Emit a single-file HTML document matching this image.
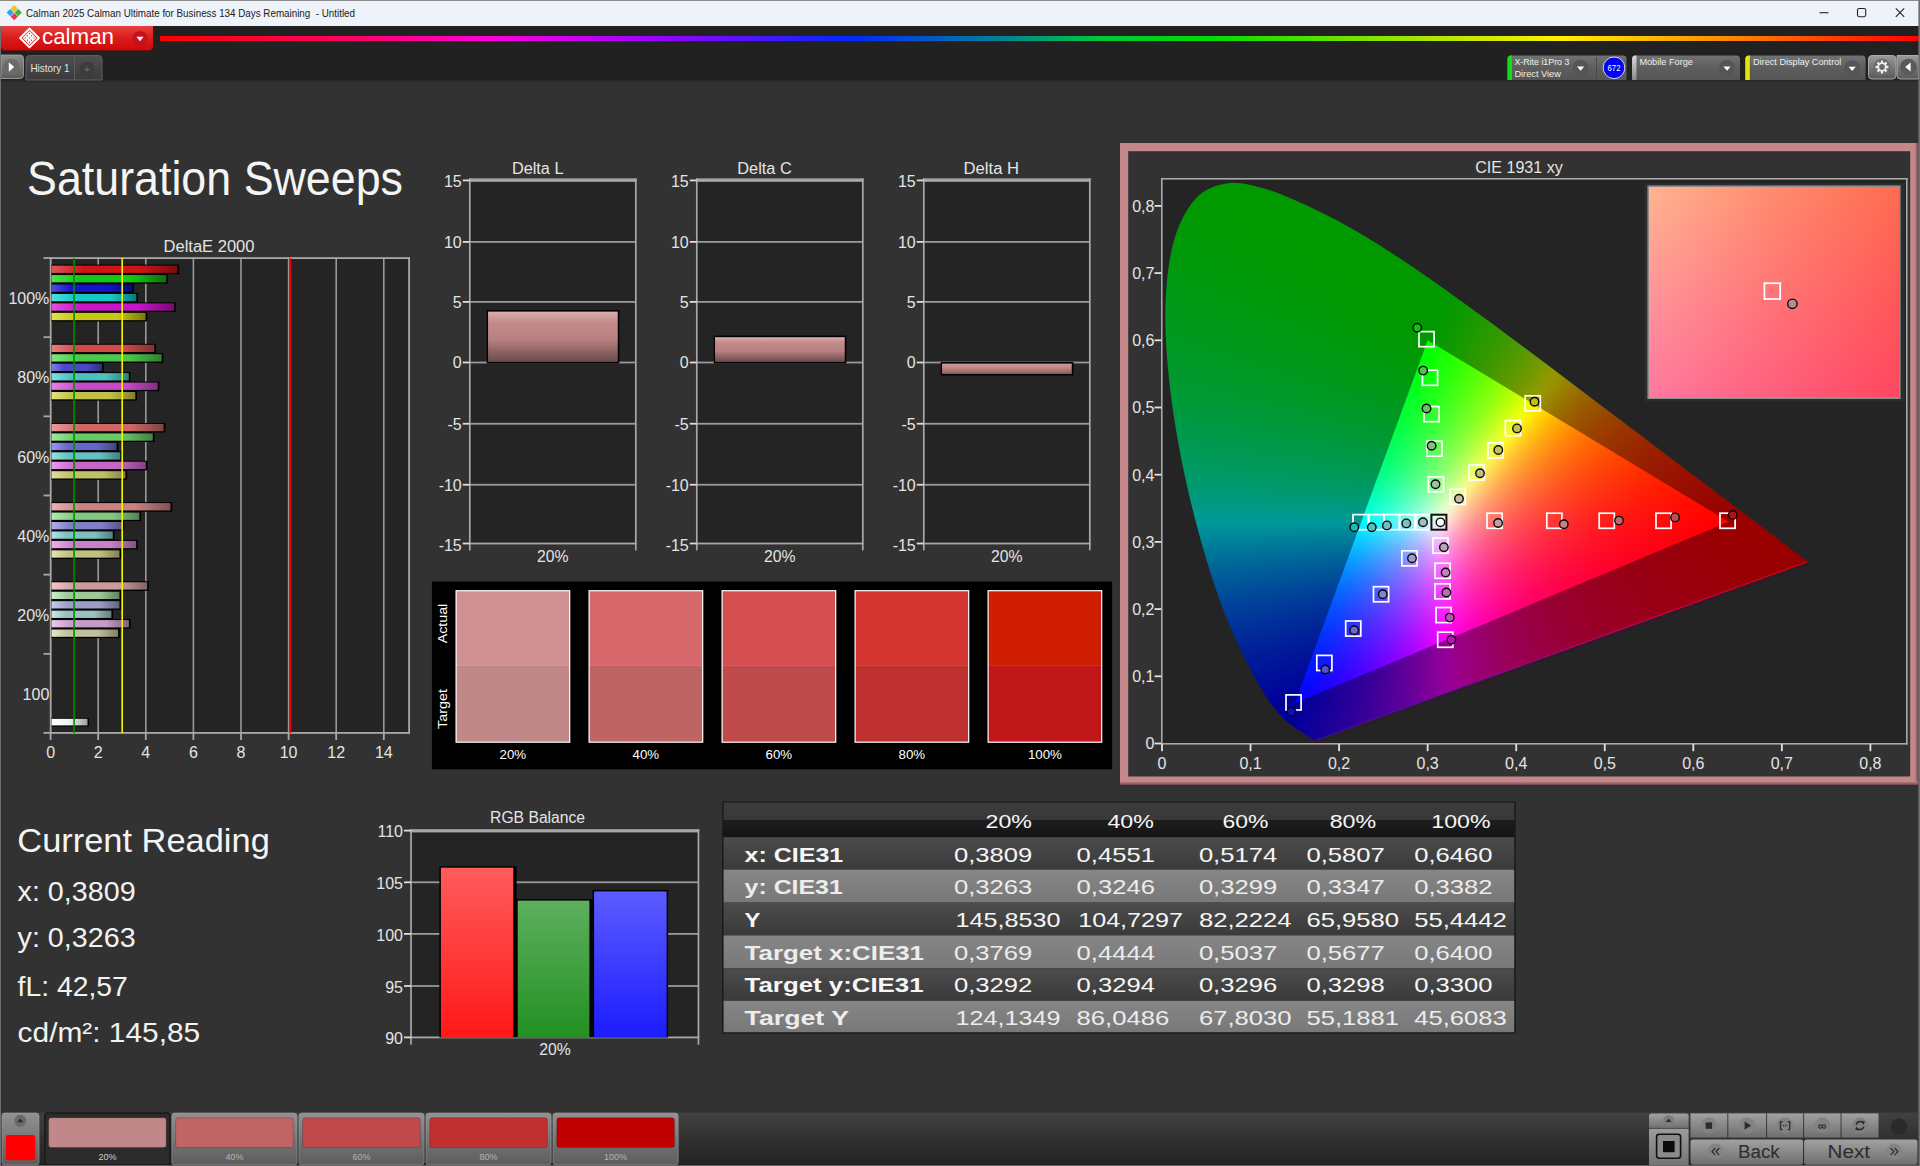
<!DOCTYPE html>
<html><head><meta charset="utf-8"><title>Calman</title>
<style>html,body{margin:0;padding:0;background:#323232;overflow:hidden}svg{display:block}text{font-family:"Liberation Sans",sans-serif}</style></head>
<body>
<svg width="1920" height="1166" viewBox="0 0 1920 1166">
<defs>
<linearGradient id="hsh" x1="0" y1="0" x2="0" y2="1"><stop offset="0" stop-color="#242424"/><stop offset="1" stop-color="#323232"/></linearGradient>
<linearGradient id="rb" x1="0" y1="0" x2="1" y2="0"><stop offset="0" stop-color="#ff0000"/><stop offset="0.108" stop-color="#ff0064"/><stop offset="0.188" stop-color="#ff00dc"/><stop offset="0.279" stop-color="#a000ff"/><stop offset="0.392" stop-color="#0028ff"/><stop offset="0.478" stop-color="#008296"/><stop offset="0.534" stop-color="#00c83c"/><stop offset="0.597" stop-color="#00dc00"/><stop offset="0.711" stop-color="#a0e600"/><stop offset="0.796" stop-color="#fff000"/><stop offset="0.881" stop-color="#ff9600"/><stop offset="1" stop-color="#ff0000"/></linearGradient>
<linearGradient id="cred" x1="0" y1="0" x2="0" y2="1"><stop offset="0" stop-color="#e84040"/><stop offset="0.45" stop-color="#dc1f1f"/><stop offset="1" stop-color="#cf0808"/></linearGradient>
<linearGradient id="pbtn" x1="0" y1="0" x2="0" y2="1"><stop offset="0" stop-color="#8c8c8c"/><stop offset="1" stop-color="#5c5c5c"/></linearGradient>
<linearGradient id="tab" x1="0" y1="0" x2="0" y2="1"><stop offset="0" stop-color="#505050"/><stop offset="1" stop-color="#3a3a3a"/></linearGradient>
<linearGradient id="pan" x1="0" y1="0" x2="0" y2="1"><stop offset="0" stop-color="#727272"/><stop offset="0.5" stop-color="#5e5e5e"/><stop offset="1" stop-color="#555555"/></linearGradient>
<linearGradient id="mstrip" x1="0" y1="0" x2="0" y2="1"><stop offset="0" stop-color="#d8d8d8"/><stop offset="1" stop-color="#8a8a8a"/></linearGradient>
<linearGradient id="gbtn" x1="0" y1="0" x2="0" y2="1"><stop offset="0" stop-color="#9a9a9a"/><stop offset="1" stop-color="#585858"/></linearGradient>
<linearGradient id="b0" x1="51.5" y1="0" x2="177.5" y2="0" gradientUnits="userSpaceOnUse"><stop offset="0" stop-color="#e05858"/><stop offset="0.25" stop-color="#d01414"/><stop offset="0.7" stop-color="#d01414"/><stop offset="1" stop-color="#7a0a0a"/></linearGradient>
<linearGradient id="b1" x1="51.5" y1="0" x2="166.3" y2="0" gradientUnits="userSpaceOnUse"><stop offset="0" stop-color="#50e050"/><stop offset="0.25" stop-color="#14c814"/><stop offset="0.7" stop-color="#14c814"/><stop offset="1" stop-color="#0a700a"/></linearGradient>
<linearGradient id="b2" x1="51.5" y1="0" x2="132.3" y2="0" gradientUnits="userSpaceOnUse"><stop offset="0" stop-color="#5050e0"/><stop offset="0.25" stop-color="#1414c8"/><stop offset="0.7" stop-color="#1414c8"/><stop offset="1" stop-color="#0a0a78"/></linearGradient>
<linearGradient id="b3" x1="51.5" y1="0" x2="136.3" y2="0" gradientUnits="userSpaceOnUse"><stop offset="0" stop-color="#50e0e0"/><stop offset="0.25" stop-color="#14c8c8"/><stop offset="0.7" stop-color="#14c8c8"/><stop offset="1" stop-color="#0a7878"/></linearGradient>
<linearGradient id="b4" x1="51.5" y1="0" x2="174" y2="0" gradientUnits="userSpaceOnUse"><stop offset="0" stop-color="#e050e0"/><stop offset="0.25" stop-color="#c814c8"/><stop offset="0.7" stop-color="#c814c8"/><stop offset="1" stop-color="#780a78"/></linearGradient>
<linearGradient id="b5" x1="51.5" y1="0" x2="145.6" y2="0" gradientUnits="userSpaceOnUse"><stop offset="0" stop-color="#e0e050"/><stop offset="0.25" stop-color="#c8c814"/><stop offset="0.7" stop-color="#c8c814"/><stop offset="1" stop-color="#78780a"/></linearGradient>
<linearGradient id="b6" x1="51.5" y1="0" x2="154.3" y2="0" gradientUnits="userSpaceOnUse"><stop offset="0" stop-color="#e88080"/><stop offset="0.25" stop-color="#d04a4a"/><stop offset="0.7" stop-color="#d04a4a"/><stop offset="1" stop-color="#803030"/></linearGradient>
<linearGradient id="b7" x1="51.5" y1="0" x2="161.6" y2="0" gradientUnits="userSpaceOnUse"><stop offset="0" stop-color="#80e880"/><stop offset="0.25" stop-color="#4ac84a"/><stop offset="0.7" stop-color="#4ac84a"/><stop offset="1" stop-color="#308030"/></linearGradient>
<linearGradient id="b8" x1="51.5" y1="0" x2="101.9" y2="0" gradientUnits="userSpaceOnUse"><stop offset="0" stop-color="#8080e8"/><stop offset="0.25" stop-color="#4a4ac8"/><stop offset="0.7" stop-color="#4a4ac8"/><stop offset="1" stop-color="#303080"/></linearGradient>
<linearGradient id="b9" x1="51.5" y1="0" x2="128.8" y2="0" gradientUnits="userSpaceOnUse"><stop offset="0" stop-color="#80e0e0"/><stop offset="0.25" stop-color="#4ac0c0"/><stop offset="0.7" stop-color="#4ac0c0"/><stop offset="1" stop-color="#308080"/></linearGradient>
<linearGradient id="b10" x1="51.5" y1="0" x2="157.7" y2="0" gradientUnits="userSpaceOnUse"><stop offset="0" stop-color="#e880e8"/><stop offset="0.25" stop-color="#c84ac8"/><stop offset="0.7" stop-color="#c84ac8"/><stop offset="1" stop-color="#803080"/></linearGradient>
<linearGradient id="b11" x1="51.5" y1="0" x2="135.3" y2="0" gradientUnits="userSpaceOnUse"><stop offset="0" stop-color="#e0e080"/><stop offset="0.25" stop-color="#c0c04a"/><stop offset="0.7" stop-color="#c0c04a"/><stop offset="1" stop-color="#808030"/></linearGradient>
<linearGradient id="b12" x1="51.5" y1="0" x2="163.6" y2="0" gradientUnits="userSpaceOnUse"><stop offset="0" stop-color="#eb9a9a"/><stop offset="0.25" stop-color="#d06666"/><stop offset="0.7" stop-color="#d06666"/><stop offset="1" stop-color="#804444"/></linearGradient>
<linearGradient id="b13" x1="51.5" y1="0" x2="152.8" y2="0" gradientUnits="userSpaceOnUse"><stop offset="0" stop-color="#9aeb9a"/><stop offset="0.25" stop-color="#66c866"/><stop offset="0.7" stop-color="#66c866"/><stop offset="1" stop-color="#448044"/></linearGradient>
<linearGradient id="b14" x1="51.5" y1="0" x2="116.6" y2="0" gradientUnits="userSpaceOnUse"><stop offset="0" stop-color="#9a9aeb"/><stop offset="0.25" stop-color="#6666c8"/><stop offset="0.7" stop-color="#6666c8"/><stop offset="1" stop-color="#444480"/></linearGradient>
<linearGradient id="b15" x1="51.5" y1="0" x2="120.3" y2="0" gradientUnits="userSpaceOnUse"><stop offset="0" stop-color="#9ae0e0"/><stop offset="0.25" stop-color="#66c0c0"/><stop offset="0.7" stop-color="#66c0c0"/><stop offset="1" stop-color="#448080"/></linearGradient>
<linearGradient id="b16" x1="51.5" y1="0" x2="145.8" y2="0" gradientUnits="userSpaceOnUse"><stop offset="0" stop-color="#eb9aeb"/><stop offset="0.25" stop-color="#c866c8"/><stop offset="0.7" stop-color="#c866c8"/><stop offset="1" stop-color="#804480"/></linearGradient>
<linearGradient id="b17" x1="51.5" y1="0" x2="125.4" y2="0" gradientUnits="userSpaceOnUse"><stop offset="0" stop-color="#e0e09a"/><stop offset="0.25" stop-color="#c0c066"/><stop offset="0.7" stop-color="#c0c066"/><stop offset="1" stop-color="#808044"/></linearGradient>
<linearGradient id="b18" x1="51.5" y1="0" x2="170.5" y2="0" gradientUnits="userSpaceOnUse"><stop offset="0" stop-color="#eeb0b0"/><stop offset="0.25" stop-color="#cc8080"/><stop offset="0.7" stop-color="#cc8080"/><stop offset="1" stop-color="#805454"/></linearGradient>
<linearGradient id="b19" x1="51.5" y1="0" x2="139.4" y2="0" gradientUnits="userSpaceOnUse"><stop offset="0" stop-color="#b0eeb0"/><stop offset="0.25" stop-color="#80c880"/><stop offset="0.7" stop-color="#80c880"/><stop offset="1" stop-color="#548054"/></linearGradient>
<linearGradient id="b20" x1="51.5" y1="0" x2="122.4" y2="0" gradientUnits="userSpaceOnUse"><stop offset="0" stop-color="#b0b0ee"/><stop offset="0.25" stop-color="#8080c8"/><stop offset="0.7" stop-color="#8080c8"/><stop offset="1" stop-color="#545480"/></linearGradient>
<linearGradient id="b21" x1="51.5" y1="0" x2="112.8" y2="0" gradientUnits="userSpaceOnUse"><stop offset="0" stop-color="#b0e4e4"/><stop offset="0.25" stop-color="#80c0c0"/><stop offset="0.7" stop-color="#80c0c0"/><stop offset="1" stop-color="#548080"/></linearGradient>
<linearGradient id="b22" x1="51.5" y1="0" x2="136.2" y2="0" gradientUnits="userSpaceOnUse"><stop offset="0" stop-color="#eeb0ee"/><stop offset="0.25" stop-color="#c880c8"/><stop offset="0.7" stop-color="#c880c8"/><stop offset="1" stop-color="#805480"/></linearGradient>
<linearGradient id="b23" x1="51.5" y1="0" x2="119.5" y2="0" gradientUnits="userSpaceOnUse"><stop offset="0" stop-color="#e4e4b0"/><stop offset="0.25" stop-color="#c0c080"/><stop offset="0.7" stop-color="#c0c080"/><stop offset="1" stop-color="#808054"/></linearGradient>
<linearGradient id="b24" x1="51.5" y1="0" x2="147.2" y2="0" gradientUnits="userSpaceOnUse"><stop offset="0" stop-color="#f0c8c8"/><stop offset="0.25" stop-color="#cc9c9c"/><stop offset="0.7" stop-color="#cc9c9c"/><stop offset="1" stop-color="#806464"/></linearGradient>
<linearGradient id="b25" x1="51.5" y1="0" x2="119.5" y2="0" gradientUnits="userSpaceOnUse"><stop offset="0" stop-color="#c8f0c8"/><stop offset="0.25" stop-color="#9cc89c"/><stop offset="0.7" stop-color="#9cc89c"/><stop offset="1" stop-color="#648064"/></linearGradient>
<linearGradient id="b26" x1="51.5" y1="0" x2="119.5" y2="0" gradientUnits="userSpaceOnUse"><stop offset="0" stop-color="#c8c8f0"/><stop offset="0.25" stop-color="#9c9cc8"/><stop offset="0.7" stop-color="#9c9cc8"/><stop offset="1" stop-color="#646480"/></linearGradient>
<linearGradient id="b27" x1="51.5" y1="0" x2="111.4" y2="0" gradientUnits="userSpaceOnUse"><stop offset="0" stop-color="#c8e8e8"/><stop offset="0.25" stop-color="#9cc0c0"/><stop offset="0.7" stop-color="#9cc0c0"/><stop offset="1" stop-color="#648080"/></linearGradient>
<linearGradient id="b28" x1="51.5" y1="0" x2="128.9" y2="0" gradientUnits="userSpaceOnUse"><stop offset="0" stop-color="#f0c8f0"/><stop offset="0.25" stop-color="#c89cc8"/><stop offset="0.7" stop-color="#c89cc8"/><stop offset="1" stop-color="#806480"/></linearGradient>
<linearGradient id="b29" x1="51.5" y1="0" x2="118.1" y2="0" gradientUnits="userSpaceOnUse"><stop offset="0" stop-color="#e8e8c8"/><stop offset="0.25" stop-color="#c0c09c"/><stop offset="0.7" stop-color="#c0c09c"/><stop offset="1" stop-color="#808064"/></linearGradient>
<linearGradient id="bw" x1="51.5" y1="0" x2="87.5" y2="0" gradientUnits="userSpaceOnUse"><stop offset="0" stop-color="#ffffff"/><stop offset="0.5" stop-color="#f0f0f0"/><stop offset="1" stop-color="#a0a0a0"/></linearGradient>
<linearGradient id="pinkbar" x1="0" y1="0" x2="0" y2="1"><stop offset="0" stop-color="#dcaeae"/><stop offset="0.22" stop-color="#c48a8a"/><stop offset="0.55" stop-color="#b88181"/><stop offset="1" stop-color="#6a4a4c"/></linearGradient>
<linearGradient id="pinkbar2" x1="0" y1="0" x2="0" y2="1"><stop offset="0" stop-color="#d09a9a"/><stop offset="0.35" stop-color="#c48a8a"/><stop offset="1" stop-color="#8a6062"/></linearGradient>
<linearGradient id="frR" x1="0" y1="0" x2="1" y2="0"><stop offset="0" stop-color="#c4888a"/><stop offset="1" stop-color="#6e4648"/></linearGradient>
<linearGradient id="frB" x1="0" y1="0" x2="0" y2="1"><stop offset="0" stop-color="#c4888a"/><stop offset="1" stop-color="#6e4648"/></linearGradient>
<clipPath id="hs"><path d="M1315.5 740.3C1315.4 740.3 1315.3 740.3 1315.2 740.3C1315.1 740.3 1315.0 740.3 1314.8 740.3C1314.7 740.3 1314.6 740.3 1314.4 740.3C1314.2 740.2 1314.0 740.2 1313.8 740.1C1313.5 740.0 1313.2 739.8 1312.8 739.6C1312.4 739.4 1312.1 739.2 1311.6 738.9C1311.1 738.5 1310.5 738.2 1309.8 737.7C1309.1 737.3 1308.4 736.8 1307.6 736.2C1306.7 735.6 1305.8 735.0 1304.7 734.2C1303.5 733.5 1302.2 732.6 1300.7 731.6C1299.2 730.6 1297.6 729.6 1295.7 728.2C1293.9 726.9 1291.8 725.5 1289.5 723.5C1287.2 721.6 1284.9 719.8 1282.0 716.7C1279.0 713.5 1275.7 709.9 1271.9 704.7C1268.1 699.4 1263.9 693.6 1259.1 685.2C1254.2 676.8 1248.9 667.1 1242.8 654.3C1236.8 641.6 1229.6 626.8 1222.8 608.6C1216.1 590.5 1208.9 569.0 1202.2 545.3C1195.5 521.5 1188.3 493.4 1182.8 466.2C1177.3 438.9 1172.2 408.8 1169.3 381.7C1166.4 354.6 1164.6 327.2 1165.5 303.5C1166.3 279.8 1169.1 257.0 1174.3 239.4C1179.5 221.8 1187.5 207.2 1196.4 197.8C1205.4 188.5 1216.7 184.8 1227.8 183.2C1238.9 181.6 1251.3 185.2 1263.1 188.3C1275.0 191.4 1287.4 196.9 1299.0 201.9C1310.6 206.9 1321.8 212.5 1332.8 218.3C1343.9 224.0 1354.6 230.2 1365.3 236.6C1376.1 243.0 1386.7 249.8 1397.4 256.8C1408.0 263.7 1418.5 270.9 1429.1 278.3C1439.6 285.6 1450.1 293.1 1460.7 300.7C1471.2 308.3 1481.8 316.1 1492.4 323.8C1502.9 331.6 1513.4 339.5 1523.9 347.3C1534.4 355.1 1544.9 363.0 1555.3 370.7C1565.6 378.5 1575.9 386.3 1586.0 393.9C1596.1 401.6 1606.1 409.1 1615.8 416.5C1625.6 423.9 1635.2 431.2 1644.4 438.1C1653.7 445.1 1662.8 452.0 1671.3 458.4C1679.9 464.9 1688.2 471.3 1695.9 477.1C1703.5 482.8 1710.5 488.1 1717.2 493.2C1723.9 498.2 1730.3 503.0 1736.0 507.4C1741.7 511.7 1746.9 515.5 1751.6 519.1C1756.3 522.6 1760.4 525.8 1764.2 528.7C1768.0 531.5 1771.3 534.0 1774.3 536.3C1777.3 538.6 1780.0 540.5 1782.4 542.4C1784.8 544.2 1786.9 545.8 1788.8 547.3C1790.8 548.8 1792.6 550.1 1794.2 551.4C1795.9 552.6 1797.3 553.7 1798.7 554.7C1800.0 555.7 1801.2 556.6 1802.2 557.4C1803.2 558.1 1804.1 558.8 1804.9 559.4C1805.7 560.0 1806.3 560.5 1806.9 560.9C1807.5 561.4 1808.2 561.9 1808.4 562.1Z"/></clipPath>
<clipPath id="tr"><path d="M1728.7 521.7L1427.7 340.3L1294.8 703.2Z"/></clipPath>
<filter id="bl" x="-5%" y="-5%" width="110%" height="110%" color-interpolation-filters="sRGB"><feGaussianBlur stdDeviation="4.5"/></filter>
<style>.c{width:9.6px;height:9.6px}</style>
<linearGradient id="ple" x1="1315.46" y1="0" x2="1808.41" y2="0" gradientUnits="userSpaceOnUse"><stop offset="0" stop-color="#2a10d0"/><stop offset="0.35" stop-color="#9000c0"/><stop offset="0.7" stop-color="#e00060"/><stop offset="1" stop-color="#f00018"/></linearGradient>
<linearGradient id="in1" x1="0" y1="0" x2="1" y2="0"><stop offset="0" stop-color="#ffb592"/><stop offset="0.5" stop-color="#ff8c6e"/><stop offset="1" stop-color="#ff6c50"/></linearGradient>
<linearGradient id="in2" x1="0" y1="0" x2="1" y2="0"><stop offset="0" stop-color="#ff78a0"/><stop offset="0.5" stop-color="#ff5e7e"/><stop offset="1" stop-color="#ff4660"/></linearGradient>
<linearGradient id="inm" x1="0" y1="0" x2="0" y2="1"><stop offset="0" stop-color="#fff" stop-opacity="0"/><stop offset="1" stop-color="#fff" stop-opacity="1"/></linearGradient>
<mask id="inmask"><rect x="1649" y="187" width="250.2" height="210.4" fill="url(#inm)"/></mask>
<linearGradient id="rbR" x1="0" y1="0" x2="0" y2="1"><stop offset="0" stop-color="#ff5c5c"/><stop offset="1" stop-color="#ff1818"/></linearGradient>
<linearGradient id="rbG" x1="0" y1="0" x2="0" y2="1"><stop offset="0" stop-color="#5eb05e"/><stop offset="1" stop-color="#229022"/></linearGradient>
<linearGradient id="rbB" x1="0" y1="0" x2="0" y2="1"><stop offset="0" stop-color="#5c5cff"/><stop offset="1" stop-color="#1c1cff"/></linearGradient>
<linearGradient id="thd" x1="0" y1="0" x2="0" y2="1"><stop offset="0" stop-color="#3c3c3c"/><stop offset="0.5" stop-color="#383838"/><stop offset="0.5" stop-color="#1e1e1e"/><stop offset="1" stop-color="#141414"/></linearGradient>
<linearGradient id="trd" x1="0" y1="0" x2="0" y2="1"><stop offset="0" stop-color="#4c4c4c"/><stop offset="1" stop-color="#3a3a3a"/></linearGradient>
<linearGradient id="trl" x1="0" y1="0" x2="0" y2="1"><stop offset="0" stop-color="#868686"/><stop offset="1" stop-color="#787878"/></linearGradient>
<linearGradient id="barbg" x1="0" y1="0" x2="0" y2="1"><stop offset="0" stop-color="#414141"/><stop offset="0.5" stop-color="#303030"/><stop offset="1" stop-color="#232323"/></linearGradient>
<linearGradient id="bbtn" x1="0" y1="0" x2="0" y2="1"><stop offset="0" stop-color="#929292"/><stop offset="0.5" stop-color="#767676"/><stop offset="1" stop-color="#5c5c5c"/></linearGradient>
<linearGradient id="cbtn" x1="0" y1="0" x2="0" y2="1"><stop offset="0" stop-color="#a2a2a2"/><stop offset="1" stop-color="#6e6e6e"/></linearGradient>
<linearGradient id="cbtn2" x1="0" y1="0" x2="0" y2="1"><stop offset="0" stop-color="#9c9c9c"/><stop offset="1" stop-color="#747474"/></linearGradient>
</defs>
<rect x="0" y="0" width="1920" height="1166" fill="#323232" />
<rect x="0" y="0" width="1920" height="26" fill="#eef3f9" />
<rect x="0" y="0" width="1920" height="1" fill="#8a8a8a" />
<path d="M14.2 5L17.8 8.6L14.2 12.2L10.6 8.6Z" fill="#f3c321"/>
<path d="M10.2 9L13.8 12.6L10.2 16.2L6.6 12.6Z" fill="#2aa7e8"/>
<path d="M18.2 9L21.8 12.6L18.2 16.2L14.6 12.6Z" fill="#35b935"/>
<path d="M14.2 13L17.8 16.6L14.2 20.2L10.6 16.6Z" fill="#e8315e"/>
<text x="26" y="17" font-size="11.5" fill="#1a1a1a" textLength="329" lengthAdjust="spacingAndGlyphs" style="white-space:pre">Calman 2025 Calman Ultimate for Business 134 Days Remaining  - Untitled</text>
<line x1="1819.5" y1="12.7" x2="1828.5" y2="12.7" stroke="#222" stroke-width="1.1" />
<rect x="1857.5" y="8.5" width="8.2" height="8.2" rx="1.6" fill="none" stroke="#222" stroke-width="1.1"/>
<path d="M1895.8 8.4L1904.2 16.8M1904.2 8.4L1895.8 16.8" stroke="#222" stroke-width="1.1" fill="none"/>
<rect x="0" y="26" width="1920" height="54" fill="#212121" />
<rect x="0" y="80" width="1920" height="3" fill="url(#hsh)" />
<rect x="160" y="36" width="1759" height="5" fill="url(#rb)" />
<path d="M1 26H153V46Q153 50 149 50H5Q1 50 1 46Z" fill="url(#cred)"/>
<line x1="2" y1="50.5" x2="151" y2="50.5" stroke="#701010" stroke-width="1" />
<path d="M29.5 28.6L38.9 38L29.5 47.4L20.1 38Z" fill="none" stroke="#fff" stroke-width="2" stroke-linejoin="round"/>
<path d="M29.5 31.1L36.4 38L29.5 44.9L22.6 38Z" fill="#fff"/>
<path d="M29.5 32.85L30.35 33.7L29.5 34.55L28.65 33.7ZM27.35 35L28.2 35.85L27.35 36.7L26.5 35.85ZM25.2 37.15L26.05 38L25.2 38.85L24.35 38ZM31.65 35L32.5 35.85L31.65 36.7L30.8 35.85ZM29.5 37.15L30.35 38L29.5 38.85L28.65 38ZM27.35 39.3L28.2 40.15L27.35 41L26.5 40.15ZM33.8 37.15L34.65 38L33.8 38.85L32.95 38ZM31.65 39.3L32.5 40.15L31.65 41L30.8 40.15ZM29.5 41.45L30.35 42.3L29.5 43.15L28.65 42.3Z" fill="#dc2020"/>
<text x="42" y="43.8" font-size="22" fill="#ffffff" textLength="72" lengthAdjust="spacingAndGlyphs" >calman</text>
<circle cx="140" cy="38.5" r="7.5" fill="#c80f1c"/>
<path d="M136.4 36.8H143.6L140 41.2Z" fill="#fff"/>
<path d="M1 55H20Q23.5 55 23.5 58.5V75Q23.5 78.5 20 78.5H1Z" fill="url(#pbtn)" stroke="#a8a8a8" stroke-width="0.8"/>
<circle cx="11.5" cy="67" r="8" fill="#6a6a6a"/>
<path d="M8.8 62.3L14.2 67L8.8 71.7Z" fill="#fff"/>
<path d="M26 80V59Q26 55.5 29.5 55.5H98.5Q102 55.5 102 59V80Z" fill="url(#tab)" stroke="#5e5e5e" stroke-width="1"/>
<line x1="74.5" y1="56" x2="74.5" y2="80" stroke="#5e5e5e" stroke-width="1" />
<text x="30.4" y="72" font-size="10.5" fill="#e4e4e4" textLength="39" lengthAdjust="spacingAndGlyphs" >History 1</text>
<circle cx="87" cy="69" r="7.5" fill="#3c3c3c"/>
<text x="87" y="72.6" font-size="10" fill="#6e6e6e" text-anchor="middle" >+</text>
<path d="M1507.5 80V59Q1507.5 55.5 1511.0 55.5H1623.0Q1626.5 55.5 1626.5 59V80Z" fill="url(#pan)"/>
<path d="M1507.5 80V59Q1507.5 55.5 1511.0 55.5H1512.0V80Z" fill="#10e010"/>
<text x="1514.4" y="65" font-size="9.5" fill="#f0f0f0" textLength="55" lengthAdjust="spacingAndGlyphs" >X-Rite i1Pro 3</text>
<text x="1514.4" y="76.5" font-size="9.5" fill="#f0f0f0" textLength="46.5" lengthAdjust="spacingAndGlyphs" >Direct View</text>
<circle cx="1580.6" cy="68" r="8" fill="#555555"/>
<path d="M1577.0 66.4H1584.1999999999998L1580.6 70.8Z" fill="#fff"/>
<line x1="1596.5" y1="57" x2="1596.5" y2="80" stroke="#4a4a4a" stroke-width="1" />
<circle cx="1614" cy="67.8" r="10.8" fill="#0000f8" stroke="#e8e8ff" stroke-width="0.9"/>
<text x="1614" y="70.8" font-size="8.5" fill="#fff" text-anchor="middle" textLength="13" lengthAdjust="spacingAndGlyphs" >672</text>
<path d="M1632 80V59Q1632 55.5 1635.5 55.5H1736.5Q1740 55.5 1740 59V80Z" fill="url(#pan)"/>
<path d="M1632 80V59Q1632 55.5 1635.5 55.5H1636.5V80Z" fill="url(#mstrip)"/>
<text x="1639.4" y="65" font-size="9.5" fill="#f0f0f0" textLength="53.5" lengthAdjust="spacingAndGlyphs" >Mobile Forge</text>
<circle cx="1727" cy="68" r="8" fill="#555555"/>
<path d="M1723.4 66.4H1730.6L1727 70.8Z" fill="#fff"/>
<path d="M1745.3 80V59Q1745.3 55.5 1748.8 55.5H1862.1Q1865.6 55.5 1865.6 59V80Z" fill="url(#pan)"/>
<path d="M1745.3 80V59Q1745.3 55.5 1748.8 55.5H1749.8V80Z" fill="#e6e600"/>
<text x="1753" y="65.3" font-size="9.5" fill="#f0f0f0" textLength="88.3" lengthAdjust="spacingAndGlyphs" >Direct Display Control</text>
<circle cx="1852.2" cy="68.3" r="8" fill="#555555"/>
<path d="M1848.6000000000001 66.7H1855.8L1852.2 71.1Z" fill="#fff"/>
<rect x="1868.5" y="55.5" width="27.5" height="23.5" rx="3.5" fill="url(#gbtn)" stroke="#b4b4b4" stroke-width="0.9"/>
<path d="M1897 55.5H1918.5V79H1900.5Q1897 79 1897 75.5Z" fill="url(#gbtn)" stroke="#b4b4b4" stroke-width="0.9"/>
<circle cx="1882" cy="67" r="8.6" fill="#6c6c6c"/><rect x="1880.85" y="60.6" width="2.3" height="12.8" rx="0.5" transform="rotate(0 1882 67)" fill="#f0f0f0"/><rect x="1880.85" y="60.6" width="2.3" height="12.8" rx="0.5" transform="rotate(45 1882 67)" fill="#f0f0f0"/><rect x="1880.85" y="60.6" width="2.3" height="12.8" rx="0.5" transform="rotate(90 1882 67)" fill="#f0f0f0"/><rect x="1880.85" y="60.6" width="2.3" height="12.8" rx="0.5" transform="rotate(135 1882 67)" fill="#f0f0f0"/><circle cx="1882" cy="67" r="4.5" fill="#f0f0f0"/><circle cx="1882" cy="67" r="2.9" fill="#6c6c6c"/>
<circle cx="1908.5" cy="67" r="8.3" fill="#5a5a5a"/>
<path d="M1910.6 62.6V71.4L1905.2 67Z" fill="#fff"/>
<rect x="0" y="26" width="1" height="1140" fill="#6e6e6e" />
<rect x="1918.6" y="0" width="1.4" height="1166" fill="#6e6e6e" />
<rect x="0" y="1165" width="1920" height="1" fill="#6e6e6e" />
<text x="27" y="194.5" font-size="49" fill="#f4f4f4" textLength="376" lengthAdjust="spacingAndGlyphs" >Saturation Sweeps</text>
<text x="209" y="252.3" font-size="16" fill="#e4e4e4" text-anchor="middle" textLength="91" lengthAdjust="spacingAndGlyphs" >DeltaE 2000</text>
<rect x="51" y="258" width="358" height="475" fill="#242424" />
<line x1="98.2" y1="258" x2="98.2" y2="733" stroke="#9a9a9a" stroke-width="1.6" />
<line x1="145.8" y1="258" x2="145.8" y2="733" stroke="#9a9a9a" stroke-width="1.6" />
<line x1="193.4" y1="258" x2="193.4" y2="733" stroke="#9a9a9a" stroke-width="1.6" />
<line x1="241" y1="258" x2="241" y2="733" stroke="#9a9a9a" stroke-width="1.6" />
<line x1="288.6" y1="258" x2="288.6" y2="733" stroke="#9a9a9a" stroke-width="1.6" />
<line x1="336.2" y1="258" x2="336.2" y2="733" stroke="#9a9a9a" stroke-width="1.6" />
<line x1="383.8" y1="258" x2="383.8" y2="733" stroke="#9a9a9a" stroke-width="1.6" />
<rect x="49.8" y="257.2" width="360.2" height="1.8" fill="#a8a8a8" />
<rect x="49.8" y="257.2" width="1.8" height="476.6" fill="#a8a8a8" />
<rect x="408.2" y="257.2" width="1.8" height="476.6" fill="#a8a8a8" />
<rect x="43.5" y="732" width="366.5" height="1.8" fill="#a8a8a8" />
<rect x="43.5" y="257.1" width="7" height="1.8" fill="#a8a8a8" />
<rect x="43.5" y="336.27" width="7" height="1.8" fill="#a8a8a8" />
<rect x="43.5" y="415.44" width="7" height="1.8" fill="#a8a8a8" />
<rect x="43.5" y="494.61" width="7" height="1.8" fill="#a8a8a8" />
<rect x="43.5" y="573.78" width="7" height="1.8" fill="#a8a8a8" />
<rect x="43.5" y="652.95" width="7" height="1.8" fill="#a8a8a8" />
<rect x="49.7" y="733" width="1.8" height="7" fill="#a8a8a8" />
<text x="50.6" y="757.5" font-size="16" fill="#e4e4e4" text-anchor="middle" >0</text>
<rect x="97.3" y="733" width="1.8" height="7" fill="#a8a8a8" />
<text x="98.2" y="757.5" font-size="16" fill="#e4e4e4" text-anchor="middle" >2</text>
<rect x="144.9" y="733" width="1.8" height="7" fill="#a8a8a8" />
<text x="145.8" y="757.5" font-size="16" fill="#e4e4e4" text-anchor="middle" >4</text>
<rect x="192.5" y="733" width="1.8" height="7" fill="#a8a8a8" />
<text x="193.4" y="757.5" font-size="16" fill="#e4e4e4" text-anchor="middle" >6</text>
<rect x="240.1" y="733" width="1.8" height="7" fill="#a8a8a8" />
<text x="241" y="757.5" font-size="16" fill="#e4e4e4" text-anchor="middle" >8</text>
<rect x="287.7" y="733" width="1.8" height="7" fill="#a8a8a8" />
<text x="288.6" y="757.5" font-size="16" fill="#e4e4e4" text-anchor="middle" >10</text>
<rect x="335.3" y="733" width="1.8" height="7" fill="#a8a8a8" />
<text x="336.2" y="757.5" font-size="16" fill="#e4e4e4" text-anchor="middle" >12</text>
<rect x="382.9" y="733" width="1.8" height="7" fill="#a8a8a8" />
<text x="383.8" y="757.5" font-size="16" fill="#e4e4e4" text-anchor="middle" >14</text>
<text x="49.3" y="304.185" font-size="16" fill="#e4e4e4" text-anchor="end" >100%</text>
<text x="49.3" y="383.355" font-size="16" fill="#e4e4e4" text-anchor="end" >80%</text>
<text x="49.3" y="462.525" font-size="16" fill="#e4e4e4" text-anchor="end" >60%</text>
<text x="49.3" y="541.695" font-size="16" fill="#e4e4e4" text-anchor="end" >40%</text>
<text x="49.3" y="620.865" font-size="16" fill="#e4e4e4" text-anchor="end" >20%</text>
<text x="49.3" y="700.035" font-size="16" fill="#e4e4e4" text-anchor="end" >100</text>
<rect x="51.5" y="264.6" width="127.7" height="9.6" fill="#000" />
<rect x="51.5" y="265.6" width="126" height="7.3" fill="url(#b0)" />
<rect x="51.5" y="274.05" width="116.5" height="9.6" fill="#000" />
<rect x="51.5" y="275.05" width="114.8" height="7.3" fill="url(#b1)" />
<rect x="51.5" y="283.5" width="82.5" height="9.6" fill="#000" />
<rect x="51.5" y="284.5" width="80.8" height="7.3" fill="url(#b2)" />
<rect x="51.5" y="292.95" width="86.5" height="9.6" fill="#000" />
<rect x="51.5" y="293.95" width="84.8" height="7.3" fill="url(#b3)" />
<rect x="51.5" y="302.4" width="124.2" height="9.6" fill="#000" />
<rect x="51.5" y="303.4" width="122.5" height="7.3" fill="url(#b4)" />
<rect x="51.5" y="311.85" width="95.8" height="9.6" fill="#000" />
<rect x="51.5" y="312.85" width="94.1" height="7.3" fill="url(#b5)" />
<rect x="51.5" y="343.77" width="104.5" height="9.6" fill="#000" />
<rect x="51.5" y="344.77" width="102.8" height="7.3" fill="url(#b6)" />
<rect x="51.5" y="353.22" width="111.8" height="9.6" fill="#000" />
<rect x="51.5" y="354.22" width="110.1" height="7.3" fill="url(#b7)" />
<rect x="51.5" y="362.67" width="52.1" height="9.6" fill="#000" />
<rect x="51.5" y="363.67" width="50.4" height="7.3" fill="url(#b8)" />
<rect x="51.5" y="372.12" width="79" height="9.6" fill="#000" />
<rect x="51.5" y="373.12" width="77.3" height="7.3" fill="url(#b9)" />
<rect x="51.5" y="381.57" width="107.9" height="9.6" fill="#000" />
<rect x="51.5" y="382.57" width="106.2" height="7.3" fill="url(#b10)" />
<rect x="51.5" y="391.02" width="85.5" height="9.6" fill="#000" />
<rect x="51.5" y="392.02" width="83.8" height="7.3" fill="url(#b11)" />
<rect x="51.5" y="422.94" width="113.8" height="9.6" fill="#000" />
<rect x="51.5" y="423.94" width="112.1" height="7.3" fill="url(#b12)" />
<rect x="51.5" y="432.39" width="103" height="9.6" fill="#000" />
<rect x="51.5" y="433.39" width="101.3" height="7.3" fill="url(#b13)" />
<rect x="51.5" y="441.84" width="66.8" height="9.6" fill="#000" />
<rect x="51.5" y="442.84" width="65.1" height="7.3" fill="url(#b14)" />
<rect x="51.5" y="451.29" width="70.5" height="9.6" fill="#000" />
<rect x="51.5" y="452.29" width="68.8" height="7.3" fill="url(#b15)" />
<rect x="51.5" y="460.74" width="96" height="9.6" fill="#000" />
<rect x="51.5" y="461.74" width="94.3" height="7.3" fill="url(#b16)" />
<rect x="51.5" y="470.19" width="75.6" height="9.6" fill="#000" />
<rect x="51.5" y="471.19" width="73.9" height="7.3" fill="url(#b17)" />
<rect x="51.5" y="502.11" width="120.7" height="9.6" fill="#000" />
<rect x="51.5" y="503.11" width="119" height="7.3" fill="url(#b18)" />
<rect x="51.5" y="511.56" width="89.6" height="9.6" fill="#000" />
<rect x="51.5" y="512.56" width="87.9" height="7.3" fill="url(#b19)" />
<rect x="51.5" y="521.01" width="72.6" height="9.6" fill="#000" />
<rect x="51.5" y="522.01" width="70.9" height="7.3" fill="url(#b20)" />
<rect x="51.5" y="530.46" width="63" height="9.6" fill="#000" />
<rect x="51.5" y="531.46" width="61.3" height="7.3" fill="url(#b21)" />
<rect x="51.5" y="539.91" width="86.4" height="9.6" fill="#000" />
<rect x="51.5" y="540.91" width="84.7" height="7.3" fill="url(#b22)" />
<rect x="51.5" y="549.36" width="69.7" height="9.6" fill="#000" />
<rect x="51.5" y="550.36" width="68" height="7.3" fill="url(#b23)" />
<rect x="51.5" y="581.28" width="97.4" height="9.6" fill="#000" />
<rect x="51.5" y="582.28" width="95.7" height="7.3" fill="url(#b24)" />
<rect x="51.5" y="590.73" width="69.7" height="9.6" fill="#000" />
<rect x="51.5" y="591.73" width="68" height="7.3" fill="url(#b25)" />
<rect x="51.5" y="600.18" width="69.7" height="9.6" fill="#000" />
<rect x="51.5" y="601.18" width="68" height="7.3" fill="url(#b26)" />
<rect x="51.5" y="609.63" width="61.6" height="9.6" fill="#000" />
<rect x="51.5" y="610.63" width="59.9" height="7.3" fill="url(#b27)" />
<rect x="51.5" y="619.08" width="79.1" height="9.6" fill="#000" />
<rect x="51.5" y="620.08" width="77.4" height="7.3" fill="url(#b28)" />
<rect x="51.5" y="628.53" width="68.3" height="9.6" fill="#000" />
<rect x="51.5" y="629.53" width="66.6" height="7.3" fill="url(#b29)" />
<rect x="51.5" y="717.9" width="37.4" height="8.6" fill="#000" />
<rect x="51.5" y="718.8" width="36" height="6.6" fill="url(#bw)" />
<rect x="73.3" y="258" width="1.6" height="475" fill="#008c00" />
<rect x="121.4" y="258" width="1.6" height="475" fill="#f4f400" />
<rect x="289.5" y="258" width="1.7" height="475" fill="#f00000" />
<rect x="469.75" y="179" width="166" height="365" fill="#242424" />
<rect x="469.75" y="241" width="166" height="1.8" fill="#9a9a9a" />
<rect x="469.75" y="301" width="166" height="1.8" fill="#9a9a9a" />
<rect x="469.75" y="361.6" width="166" height="1.8" fill="#9a9a9a" />
<rect x="469.75" y="422.85" width="166" height="1.8" fill="#9a9a9a" />
<rect x="469.75" y="483.85" width="166" height="1.8" fill="#9a9a9a" />
<rect x="468.95" y="178.4" width="167.6" height="3.4" fill="#a8a8a8" />
<rect x="468.95" y="178.4" width="1.7" height="372" fill="#a8a8a8" />
<rect x="634.95" y="178.4" width="1.7" height="372" fill="#a8a8a8" />
<rect x="468.95" y="542.6" width="167.6" height="1.8" fill="#a8a8a8" />
<rect x="462.75" y="179.5" width="7" height="1.8" fill="#dcdcdc" />
<text x="461.75" y="187.25" font-size="16" fill="#e4e4e4" text-anchor="end" >15</text>
<rect x="462.75" y="241" width="7" height="1.8" fill="#dcdcdc" />
<text x="461.75" y="247.75" font-size="16" fill="#e4e4e4" text-anchor="end" >10</text>
<rect x="462.75" y="301" width="7" height="1.8" fill="#dcdcdc" />
<text x="461.75" y="307.9" font-size="16" fill="#e4e4e4" text-anchor="end" >5</text>
<rect x="462.75" y="361.6" width="7" height="1.8" fill="#dcdcdc" />
<text x="461.75" y="368.4" font-size="16" fill="#e4e4e4" text-anchor="end" >0</text>
<rect x="462.75" y="422.85" width="7" height="1.8" fill="#dcdcdc" />
<text x="461.75" y="429.6" font-size="16" fill="#e4e4e4" text-anchor="end" >-5</text>
<rect x="462.75" y="483.85" width="7" height="1.8" fill="#dcdcdc" />
<text x="461.75" y="490.6" font-size="16" fill="#e4e4e4" text-anchor="end" >-10</text>
<rect x="462.75" y="542.6" width="7" height="1.8" fill="#dcdcdc" />
<text x="461.75" y="551.25" font-size="16" fill="#e4e4e4" text-anchor="end" >-15</text>
<text x="537.7" y="173.5" font-size="16" fill="#e4e4e4" text-anchor="middle" textLength="51.6" lengthAdjust="spacingAndGlyphs" >Delta L</text>
<text x="552.75" y="561.5" font-size="16" fill="#e4e4e4" text-anchor="middle" textLength="31.5" lengthAdjust="spacingAndGlyphs" >20%</text>
<rect x="486.75" y="310" width="132.6" height="53.5" fill="#000" />
<rect x="488.05" y="311.6" width="129.7" height="50.3" fill="url(#pinkbar)" />
<rect x="696.75" y="179" width="166" height="365" fill="#242424" />
<rect x="696.75" y="241" width="166" height="1.8" fill="#9a9a9a" />
<rect x="696.75" y="301" width="166" height="1.8" fill="#9a9a9a" />
<rect x="696.75" y="361.6" width="166" height="1.8" fill="#9a9a9a" />
<rect x="696.75" y="422.85" width="166" height="1.8" fill="#9a9a9a" />
<rect x="696.75" y="483.85" width="166" height="1.8" fill="#9a9a9a" />
<rect x="695.95" y="178.4" width="167.6" height="3.4" fill="#a8a8a8" />
<rect x="695.95" y="178.4" width="1.7" height="372" fill="#a8a8a8" />
<rect x="861.95" y="178.4" width="1.7" height="372" fill="#a8a8a8" />
<rect x="695.95" y="542.6" width="167.6" height="1.8" fill="#a8a8a8" />
<rect x="689.75" y="179.5" width="7" height="1.8" fill="#dcdcdc" />
<text x="688.75" y="187.25" font-size="16" fill="#e4e4e4" text-anchor="end" >15</text>
<rect x="689.75" y="241" width="7" height="1.8" fill="#dcdcdc" />
<text x="688.75" y="247.75" font-size="16" fill="#e4e4e4" text-anchor="end" >10</text>
<rect x="689.75" y="301" width="7" height="1.8" fill="#dcdcdc" />
<text x="688.75" y="307.9" font-size="16" fill="#e4e4e4" text-anchor="end" >5</text>
<rect x="689.75" y="361.6" width="7" height="1.8" fill="#dcdcdc" />
<text x="688.75" y="368.4" font-size="16" fill="#e4e4e4" text-anchor="end" >0</text>
<rect x="689.75" y="422.85" width="7" height="1.8" fill="#dcdcdc" />
<text x="688.75" y="429.6" font-size="16" fill="#e4e4e4" text-anchor="end" >-5</text>
<rect x="689.75" y="483.85" width="7" height="1.8" fill="#dcdcdc" />
<text x="688.75" y="490.6" font-size="16" fill="#e4e4e4" text-anchor="end" >-10</text>
<rect x="689.75" y="542.6" width="7" height="1.8" fill="#dcdcdc" />
<text x="688.75" y="551.25" font-size="16" fill="#e4e4e4" text-anchor="end" >-15</text>
<text x="764.5" y="173.5" font-size="16" fill="#e4e4e4" text-anchor="middle" textLength="54.5" lengthAdjust="spacingAndGlyphs" >Delta C</text>
<text x="779.75" y="561.5" font-size="16" fill="#e4e4e4" text-anchor="middle" textLength="31.5" lengthAdjust="spacingAndGlyphs" >20%</text>
<rect x="713.75" y="335.6" width="132.6" height="27.9" fill="#000" />
<rect x="715.05" y="337.2" width="129.7" height="24.7" fill="url(#pinkbar)" />
<rect x="923.75" y="179" width="166" height="365" fill="#242424" />
<rect x="923.75" y="241" width="166" height="1.8" fill="#9a9a9a" />
<rect x="923.75" y="301" width="166" height="1.8" fill="#9a9a9a" />
<rect x="923.75" y="361.6" width="166" height="1.8" fill="#9a9a9a" />
<rect x="923.75" y="422.85" width="166" height="1.8" fill="#9a9a9a" />
<rect x="923.75" y="483.85" width="166" height="1.8" fill="#9a9a9a" />
<rect x="922.95" y="178.4" width="167.6" height="3.4" fill="#a8a8a8" />
<rect x="922.95" y="178.4" width="1.7" height="372" fill="#a8a8a8" />
<rect x="1088.95" y="178.4" width="1.7" height="372" fill="#a8a8a8" />
<rect x="922.95" y="542.6" width="167.6" height="1.8" fill="#a8a8a8" />
<rect x="916.75" y="179.5" width="7" height="1.8" fill="#dcdcdc" />
<text x="915.75" y="187.25" font-size="16" fill="#e4e4e4" text-anchor="end" >15</text>
<rect x="916.75" y="241" width="7" height="1.8" fill="#dcdcdc" />
<text x="915.75" y="247.75" font-size="16" fill="#e4e4e4" text-anchor="end" >10</text>
<rect x="916.75" y="301" width="7" height="1.8" fill="#dcdcdc" />
<text x="915.75" y="307.9" font-size="16" fill="#e4e4e4" text-anchor="end" >5</text>
<rect x="916.75" y="361.6" width="7" height="1.8" fill="#dcdcdc" />
<text x="915.75" y="368.4" font-size="16" fill="#e4e4e4" text-anchor="end" >0</text>
<rect x="916.75" y="422.85" width="7" height="1.8" fill="#dcdcdc" />
<text x="915.75" y="429.6" font-size="16" fill="#e4e4e4" text-anchor="end" >-5</text>
<rect x="916.75" y="483.85" width="7" height="1.8" fill="#dcdcdc" />
<text x="915.75" y="490.6" font-size="16" fill="#e4e4e4" text-anchor="end" >-10</text>
<rect x="916.75" y="542.6" width="7" height="1.8" fill="#dcdcdc" />
<text x="915.75" y="551.25" font-size="16" fill="#e4e4e4" text-anchor="end" >-15</text>
<text x="991.3" y="173.5" font-size="16" fill="#e4e4e4" text-anchor="middle" textLength="55.5" lengthAdjust="spacingAndGlyphs" >Delta H</text>
<text x="1006.75" y="561.5" font-size="16" fill="#e4e4e4" text-anchor="middle" textLength="31.5" lengthAdjust="spacingAndGlyphs" >20%</text>
<rect x="940.75" y="362" width="132.6" height="13.5" fill="#000" />
<rect x="942.05" y="363.6" width="129.7" height="10.3" fill="url(#pinkbar2)" />
<rect x="431.9" y="581.5" width="680.3" height="187.8" fill="#000" />
<rect x="455.5" y="590.1" width="114.8" height="152.7" fill="#fff" />
<rect x="456.7" y="591.3" width="112.4" height="74.6" fill="#d19192" />
<rect x="456.7" y="665.9" width="112.4" height="75.7" fill="#c08888" />
<text x="512.9" y="759.4" font-size="13.3" fill="#fff" text-anchor="middle" >20%</text>
<rect x="588.5" y="590.1" width="114.8" height="152.7" fill="#fff" />
<rect x="589.7" y="591.3" width="112.4" height="74.6" fill="#d7686b" />
<rect x="589.7" y="665.9" width="112.4" height="75.7" fill="#bf6464" />
<text x="645.9" y="759.4" font-size="13.3" fill="#fff" text-anchor="middle" >40%</text>
<rect x="721.5" y="590.1" width="114.8" height="152.7" fill="#fff" />
<rect x="722.7" y="591.3" width="112.4" height="74.6" fill="#d54f50" />
<rect x="722.7" y="665.9" width="112.4" height="75.7" fill="#bf4a4b" />
<text x="778.9" y="759.4" font-size="13.3" fill="#fff" text-anchor="middle" >60%</text>
<rect x="854.5" y="590.1" width="114.8" height="152.7" fill="#fff" />
<rect x="855.7" y="591.3" width="112.4" height="74.6" fill="#d23530" />
<rect x="855.7" y="665.9" width="112.4" height="75.7" fill="#bf3031" />
<text x="911.9" y="759.4" font-size="13.3" fill="#fff" text-anchor="middle" >80%</text>
<rect x="987.5" y="590.1" width="114.8" height="152.7" fill="#fff" />
<rect x="988.7" y="591.3" width="112.4" height="74.6" fill="#cf1d01" />
<rect x="988.7" y="665.9" width="112.4" height="75.7" fill="#bf171a" />
<text x="1044.9" y="759.4" font-size="13.3" fill="#fff" text-anchor="middle" >100%</text>
<text transform="translate(447.3 643.3) rotate(-90)" font-size="13.3" fill="#fff" textLength="39.5" lengthAdjust="spacingAndGlyphs">Actual</text>
<text transform="translate(447.3 728.9) rotate(-90)" font-size="13.3" fill="#fff" textLength="39.9" lengthAdjust="spacingAndGlyphs">Target</text>
<rect x="1120" y="143" width="798.3" height="642" fill="#c4888a" />
<rect x="1914.7" y="143" width="3.6" height="642" fill="url(#frR)" />
<rect x="1120" y="781.4" width="798.3" height="3.6" fill="url(#frB)" />
<rect x="1128.2" y="151.2" width="782" height="625.3" fill="#323232" />
<text x="1519" y="172.7" font-size="16" fill="#e4e4e4" text-anchor="middle" textLength="87.5" lengthAdjust="spacingAndGlyphs" >CIE 1931 xy</text>
<rect x="1162" y="179" width="745" height="565" fill="#242424" />
<path d="M1808.4 562.1L1315.5 740.3L1315.2 740.3L1314.8 740.3L1314.4 740.3L1313.8 740.1L1312.8 739.6L1311.6 738.9L1309.8 737.7L1307.6 736.2L1304.7 734.2L1300.7 731.6L1295.7 728.2L1289.5 723.5" fill="none" stroke="#3c1234" stroke-width="6.4" stroke-linejoin="round"/>
<path d="M1808.4 562.1L1315.5 740.3L1315.2 740.3L1314.8 740.3L1314.4 740.3L1313.8 740.1L1312.8 739.6L1311.6 738.9L1309.8 737.7L1307.6 736.2L1304.7 734.2L1300.7 731.6L1295.7 728.2L1289.5 723.5" fill="none" stroke="#242424" stroke-width="4.2" stroke-linejoin="round"/>
<g clip-path="url(#hs)"><g filter="url(#bl)"><rect class="c" x="1149" y="275" fill="#009912"/><rect class="c" x="1149" y="284" fill="#009915"/><rect class="c" x="1149" y="293" fill="#009917"/><rect class="c" x="1149" y="302" fill="#009919"/><rect class="c" x="1149" y="311" fill="#00991c"/><rect class="c" x="1149" y="320" fill="#00991f"/><rect class="c" x="1149" y="329" fill="#009921"/><rect class="c" x="1149" y="338" fill="#009924"/><rect class="c" x="1149" y="347" fill="#009927"/><rect class="c" x="1149" y="356" fill="#00992b"/><rect class="c" x="1149" y="365" fill="#00992e"/><rect class="c" x="1149" y="374" fill="#009932"/><rect class="c" x="1158" y="230" fill="#009908"/><rect class="c" x="1158" y="239" fill="#00990a"/><rect class="c" x="1158" y="248" fill="#00990c"/><rect class="c" x="1158" y="257" fill="#00990d"/><rect class="c" x="1158" y="266" fill="#00990f"/><rect class="c" x="1158" y="275" fill="#009912"/><rect class="c" x="1158" y="284" fill="#009914"/><rect class="c" x="1158" y="293" fill="#009916"/><rect class="c" x="1158" y="302" fill="#009918"/><rect class="c" x="1158" y="311" fill="#00991b"/><rect class="c" x="1158" y="320" fill="#00991e"/><rect class="c" x="1158" y="329" fill="#009920"/><rect class="c" x="1158" y="338" fill="#009923"/><rect class="c" x="1158" y="347" fill="#009926"/><rect class="c" x="1158" y="356" fill="#00992a"/><rect class="c" x="1158" y="365" fill="#00992d"/><rect class="c" x="1158" y="374" fill="#009931"/><rect class="c" x="1158" y="383" fill="#009935"/><rect class="c" x="1158" y="392" fill="#009939"/><rect class="c" x="1158" y="401" fill="#00993d"/><rect class="c" x="1158" y="410" fill="#009942"/><rect class="c" x="1158" y="419" fill="#009947"/><rect class="c" x="1158" y="428" fill="#00994c"/><rect class="c" x="1167" y="212" fill="#009904"/><rect class="c" x="1167" y="221" fill="#009906"/><rect class="c" x="1167" y="230" fill="#009907"/><rect class="c" x="1167" y="239" fill="#009909"/><rect class="c" x="1167" y="248" fill="#00990b"/><rect class="c" x="1167" y="257" fill="#00990d"/><rect class="c" x="1167" y="266" fill="#00990f"/><rect class="c" x="1167" y="275" fill="#009911"/><rect class="c" x="1167" y="284" fill="#009913"/><rect class="c" x="1167" y="293" fill="#009915"/><rect class="c" x="1167" y="302" fill="#009917"/><rect class="c" x="1167" y="311" fill="#00991a"/><rect class="c" x="1167" y="320" fill="#00991d"/><rect class="c" x="1167" y="329" fill="#00991f"/><rect class="c" x="1167" y="338" fill="#009922"/><rect class="c" x="1167" y="347" fill="#009926"/><rect class="c" x="1167" y="356" fill="#009929"/><rect class="c" x="1167" y="365" fill="#00992c"/><rect class="c" x="1167" y="374" fill="#009930"/><rect class="c" x="1167" y="383" fill="#009934"/><rect class="c" x="1167" y="392" fill="#009938"/><rect class="c" x="1167" y="401" fill="#00993c"/><rect class="c" x="1167" y="410" fill="#009941"/><rect class="c" x="1167" y="419" fill="#009946"/><rect class="c" x="1167" y="428" fill="#00994b"/><rect class="c" x="1167" y="437" fill="#009950"/><rect class="c" x="1167" y="446" fill="#009956"/><rect class="c" x="1167" y="455" fill="#00995d"/><rect class="c" x="1167" y="464" fill="#009963"/><rect class="c" x="1167" y="473" fill="#00996b"/><rect class="c" x="1167" y="482" fill="#009972"/><rect class="c" x="1176" y="194" fill="#009901"/><rect class="c" x="1176" y="203" fill="#009902"/><rect class="c" x="1176" y="212" fill="#009903"/><rect class="c" x="1176" y="221" fill="#009905"/><rect class="c" x="1176" y="230" fill="#009906"/><rect class="c" x="1176" y="239" fill="#009908"/><rect class="c" x="1176" y="248" fill="#00990a"/><rect class="c" x="1176" y="257" fill="#00990c"/><rect class="c" x="1176" y="266" fill="#00990e"/><rect class="c" x="1176" y="275" fill="#009910"/><rect class="c" x="1176" y="284" fill="#009912"/><rect class="c" x="1176" y="293" fill="#009914"/><rect class="c" x="1176" y="302" fill="#009916"/><rect class="c" x="1176" y="311" fill="#009919"/><rect class="c" x="1176" y="320" fill="#00991c"/><rect class="c" x="1176" y="329" fill="#00991e"/><rect class="c" x="1176" y="338" fill="#009921"/><rect class="c" x="1176" y="347" fill="#009925"/><rect class="c" x="1176" y="356" fill="#009928"/><rect class="c" x="1176" y="365" fill="#00992b"/><rect class="c" x="1176" y="374" fill="#00992f"/><rect class="c" x="1176" y="383" fill="#009933"/><rect class="c" x="1176" y="392" fill="#009937"/><rect class="c" x="1176" y="401" fill="#00993b"/><rect class="c" x="1176" y="410" fill="#009940"/><rect class="c" x="1176" y="419" fill="#009945"/><rect class="c" x="1176" y="428" fill="#00994a"/><rect class="c" x="1176" y="437" fill="#009950"/><rect class="c" x="1176" y="446" fill="#009956"/><rect class="c" x="1176" y="455" fill="#00995c"/><rect class="c" x="1176" y="464" fill="#009963"/><rect class="c" x="1176" y="473" fill="#00996a"/><rect class="c" x="1176" y="482" fill="#009972"/><rect class="c" x="1176" y="491" fill="#00997a"/><rect class="c" x="1176" y="500" fill="#009984"/><rect class="c" x="1176" y="509" fill="#00998e"/><rect class="c" x="1176" y="518" fill="#009998"/><rect class="c" x="1185" y="185" fill="#009900"/><rect class="c" x="1185" y="194" fill="#009900"/><rect class="c" x="1185" y="203" fill="#009901"/><rect class="c" x="1185" y="212" fill="#009903"/><rect class="c" x="1185" y="221" fill="#009904"/><rect class="c" x="1185" y="230" fill="#009906"/><rect class="c" x="1185" y="239" fill="#009907"/><rect class="c" x="1185" y="248" fill="#009909"/><rect class="c" x="1185" y="257" fill="#00990b"/><rect class="c" x="1185" y="266" fill="#00990d"/><rect class="c" x="1185" y="275" fill="#00990f"/><rect class="c" x="1185" y="284" fill="#009911"/><rect class="c" x="1185" y="293" fill="#009913"/><rect class="c" x="1185" y="302" fill="#009916"/><rect class="c" x="1185" y="311" fill="#009918"/><rect class="c" x="1185" y="320" fill="#00991b"/><rect class="c" x="1185" y="329" fill="#00991d"/><rect class="c" x="1185" y="338" fill="#009920"/><rect class="c" x="1185" y="347" fill="#009924"/><rect class="c" x="1185" y="356" fill="#009927"/><rect class="c" x="1185" y="365" fill="#00992a"/><rect class="c" x="1185" y="374" fill="#00992e"/><rect class="c" x="1185" y="383" fill="#009932"/><rect class="c" x="1185" y="392" fill="#009936"/><rect class="c" x="1185" y="401" fill="#00993a"/><rect class="c" x="1185" y="410" fill="#00993f"/><rect class="c" x="1185" y="419" fill="#009944"/><rect class="c" x="1185" y="428" fill="#009949"/><rect class="c" x="1185" y="437" fill="#00994f"/><rect class="c" x="1185" y="446" fill="#009955"/><rect class="c" x="1185" y="455" fill="#00995b"/><rect class="c" x="1185" y="464" fill="#009962"/><rect class="c" x="1185" y="473" fill="#009969"/><rect class="c" x="1185" y="482" fill="#009971"/><rect class="c" x="1185" y="491" fill="#00997a"/><rect class="c" x="1185" y="500" fill="#009983"/><rect class="c" x="1185" y="509" fill="#00998d"/><rect class="c" x="1185" y="518" fill="#009998"/><rect class="c" x="1185" y="527" fill="#008e99"/><rect class="c" x="1185" y="536" fill="#008499"/><rect class="c" x="1185" y="545" fill="#007a99"/><rect class="c" x="1194" y="176" fill="#009900"/><rect class="c" x="1194" y="185" fill="#009900"/><rect class="c" x="1194" y="194" fill="#009900"/><rect class="c" x="1194" y="203" fill="#009901"/><rect class="c" x="1194" y="212" fill="#009902"/><rect class="c" x="1194" y="221" fill="#009903"/><rect class="c" x="1194" y="230" fill="#009905"/><rect class="c" x="1194" y="239" fill="#009906"/><rect class="c" x="1194" y="248" fill="#009908"/><rect class="c" x="1194" y="257" fill="#00990a"/><rect class="c" x="1194" y="266" fill="#00990c"/><rect class="c" x="1194" y="275" fill="#00990e"/><rect class="c" x="1194" y="284" fill="#009910"/><rect class="c" x="1194" y="293" fill="#009912"/><rect class="c" x="1194" y="302" fill="#009915"/><rect class="c" x="1194" y="311" fill="#009917"/><rect class="c" x="1194" y="320" fill="#00991a"/><rect class="c" x="1194" y="329" fill="#00991c"/><rect class="c" x="1194" y="338" fill="#00991f"/><rect class="c" x="1194" y="347" fill="#009923"/><rect class="c" x="1194" y="356" fill="#009926"/><rect class="c" x="1194" y="365" fill="#009929"/><rect class="c" x="1194" y="374" fill="#00992d"/><rect class="c" x="1194" y="383" fill="#009931"/><rect class="c" x="1194" y="392" fill="#009935"/><rect class="c" x="1194" y="401" fill="#009939"/><rect class="c" x="1194" y="410" fill="#00993e"/><rect class="c" x="1194" y="419" fill="#009943"/><rect class="c" x="1194" y="428" fill="#009948"/><rect class="c" x="1194" y="437" fill="#00994e"/><rect class="c" x="1194" y="446" fill="#009954"/><rect class="c" x="1194" y="455" fill="#00995a"/><rect class="c" x="1194" y="464" fill="#009961"/><rect class="c" x="1194" y="473" fill="#009969"/><rect class="c" x="1194" y="482" fill="#009971"/><rect class="c" x="1194" y="491" fill="#00997a"/><rect class="c" x="1194" y="500" fill="#009983"/><rect class="c" x="1194" y="509" fill="#00998d"/><rect class="c" x="1194" y="518" fill="#009998"/><rect class="c" x="1194" y="527" fill="#008e99"/><rect class="c" x="1194" y="536" fill="#008499"/><rect class="c" x="1194" y="545" fill="#007999"/><rect class="c" x="1194" y="554" fill="#007099"/><rect class="c" x="1194" y="563" fill="#006799"/><rect class="c" x="1194" y="572" fill="#005f99"/><rect class="c" x="1194" y="581" fill="#005799"/><rect class="c" x="1203" y="176" fill="#009900"/><rect class="c" x="1203" y="185" fill="#009900"/><rect class="c" x="1203" y="194" fill="#009900"/><rect class="c" x="1203" y="203" fill="#009900"/><rect class="c" x="1203" y="212" fill="#009901"/><rect class="c" x="1203" y="221" fill="#009902"/><rect class="c" x="1203" y="230" fill="#009904"/><rect class="c" x="1203" y="239" fill="#009905"/><rect class="c" x="1203" y="248" fill="#009907"/><rect class="c" x="1203" y="257" fill="#009909"/><rect class="c" x="1203" y="266" fill="#00990b"/><rect class="c" x="1203" y="275" fill="#00990d"/><rect class="c" x="1203" y="284" fill="#00990f"/><rect class="c" x="1203" y="293" fill="#009911"/><rect class="c" x="1203" y="302" fill="#009914"/><rect class="c" x="1203" y="311" fill="#009916"/><rect class="c" x="1203" y="320" fill="#009919"/><rect class="c" x="1203" y="329" fill="#00991b"/><rect class="c" x="1203" y="338" fill="#00991e"/><rect class="c" x="1203" y="347" fill="#009921"/><rect class="c" x="1203" y="356" fill="#009925"/><rect class="c" x="1203" y="365" fill="#009928"/><rect class="c" x="1203" y="374" fill="#00992c"/><rect class="c" x="1203" y="383" fill="#009930"/><rect class="c" x="1203" y="392" fill="#009934"/><rect class="c" x="1203" y="401" fill="#009938"/><rect class="c" x="1203" y="410" fill="#00993d"/><rect class="c" x="1203" y="419" fill="#009942"/><rect class="c" x="1203" y="428" fill="#009947"/><rect class="c" x="1203" y="437" fill="#00994d"/><rect class="c" x="1203" y="446" fill="#009953"/><rect class="c" x="1203" y="455" fill="#00995a"/><rect class="c" x="1203" y="464" fill="#009961"/><rect class="c" x="1203" y="473" fill="#009968"/><rect class="c" x="1203" y="482" fill="#009970"/><rect class="c" x="1203" y="491" fill="#009979"/><rect class="c" x="1203" y="500" fill="#009983"/><rect class="c" x="1203" y="509" fill="#00998d"/><rect class="c" x="1203" y="518" fill="#009998"/><rect class="c" x="1203" y="527" fill="#008e99"/><rect class="c" x="1203" y="536" fill="#008399"/><rect class="c" x="1203" y="545" fill="#007999"/><rect class="c" x="1203" y="554" fill="#006f99"/><rect class="c" x="1203" y="563" fill="#006699"/><rect class="c" x="1203" y="572" fill="#005e99"/><rect class="c" x="1203" y="581" fill="#005699"/><rect class="c" x="1203" y="590" fill="#004e99"/><rect class="c" x="1203" y="599" fill="#004799"/><rect class="c" x="1203" y="608" fill="#004099"/><rect class="c" x="1212" y="167" fill="#009900"/><rect class="c" x="1212" y="176" fill="#009900"/><rect class="c" x="1212" y="185" fill="#009900"/><rect class="c" x="1212" y="194" fill="#009900"/><rect class="c" x="1212" y="203" fill="#009900"/><rect class="c" x="1212" y="212" fill="#009900"/><rect class="c" x="1212" y="221" fill="#009902"/><rect class="c" x="1212" y="230" fill="#009903"/><rect class="c" x="1212" y="239" fill="#009905"/><rect class="c" x="1212" y="248" fill="#009906"/><rect class="c" x="1212" y="257" fill="#009908"/><rect class="c" x="1212" y="266" fill="#00990a"/><rect class="c" x="1212" y="275" fill="#00990c"/><rect class="c" x="1212" y="284" fill="#00990e"/><rect class="c" x="1212" y="293" fill="#009910"/><rect class="c" x="1212" y="302" fill="#009913"/><rect class="c" x="1212" y="311" fill="#009915"/><rect class="c" x="1212" y="320" fill="#009918"/><rect class="c" x="1212" y="329" fill="#00991a"/><rect class="c" x="1212" y="338" fill="#00991d"/><rect class="c" x="1212" y="347" fill="#009920"/><rect class="c" x="1212" y="356" fill="#009924"/><rect class="c" x="1212" y="365" fill="#009927"/><rect class="c" x="1212" y="374" fill="#00992b"/><rect class="c" x="1212" y="383" fill="#00992f"/><rect class="c" x="1212" y="392" fill="#009933"/><rect class="c" x="1212" y="401" fill="#009937"/><rect class="c" x="1212" y="410" fill="#00993c"/><rect class="c" x="1212" y="419" fill="#009941"/><rect class="c" x="1212" y="428" fill="#009946"/><rect class="c" x="1212" y="437" fill="#00994c"/><rect class="c" x="1212" y="446" fill="#009952"/><rect class="c" x="1212" y="455" fill="#009959"/><rect class="c" x="1212" y="464" fill="#009960"/><rect class="c" x="1212" y="473" fill="#009968"/><rect class="c" x="1212" y="482" fill="#009970"/><rect class="c" x="1212" y="491" fill="#009979"/><rect class="c" x="1212" y="500" fill="#009982"/><rect class="c" x="1212" y="509" fill="#00998d"/><rect class="c" x="1212" y="518" fill="#009998"/><rect class="c" x="1212" y="527" fill="#008e99"/><rect class="c" x="1212" y="536" fill="#008399"/><rect class="c" x="1212" y="545" fill="#007899"/><rect class="c" x="1212" y="554" fill="#006f99"/><rect class="c" x="1212" y="563" fill="#006599"/><rect class="c" x="1212" y="572" fill="#005d99"/><rect class="c" x="1212" y="581" fill="#005599"/><rect class="c" x="1212" y="590" fill="#004d99"/><rect class="c" x="1212" y="599" fill="#004699"/><rect class="c" x="1212" y="608" fill="#003f99"/><rect class="c" x="1212" y="617" fill="#003899"/><rect class="c" x="1212" y="626" fill="#003299"/><rect class="c" x="1221" y="167" fill="#009900"/><rect class="c" x="1221" y="176" fill="#009900"/><rect class="c" x="1221" y="185" fill="#009900"/><rect class="c" x="1221" y="194" fill="#009900"/><rect class="c" x="1221" y="203" fill="#009900"/><rect class="c" x="1221" y="212" fill="#009900"/><rect class="c" x="1221" y="221" fill="#009901"/><rect class="c" x="1221" y="230" fill="#009902"/><rect class="c" x="1221" y="239" fill="#009904"/><rect class="c" x="1221" y="248" fill="#009905"/><rect class="c" x="1221" y="257" fill="#009907"/><rect class="c" x="1221" y="266" fill="#009909"/><rect class="c" x="1221" y="275" fill="#00990b"/><rect class="c" x="1221" y="284" fill="#00990d"/><rect class="c" x="1221" y="293" fill="#00990f"/><rect class="c" x="1221" y="302" fill="#009912"/><rect class="c" x="1221" y="311" fill="#009914"/><rect class="c" x="1221" y="320" fill="#009917"/><rect class="c" x="1221" y="329" fill="#009919"/><rect class="c" x="1221" y="338" fill="#00991c"/><rect class="c" x="1221" y="347" fill="#00991f"/><rect class="c" x="1221" y="356" fill="#009923"/><rect class="c" x="1221" y="365" fill="#009926"/><rect class="c" x="1221" y="374" fill="#00992a"/><rect class="c" x="1221" y="383" fill="#00992e"/><rect class="c" x="1221" y="392" fill="#009932"/><rect class="c" x="1221" y="401" fill="#009936"/><rect class="c" x="1221" y="410" fill="#00993b"/><rect class="c" x="1221" y="419" fill="#009940"/><rect class="c" x="1221" y="428" fill="#009945"/><rect class="c" x="1221" y="437" fill="#00994b"/><rect class="c" x="1221" y="446" fill="#009951"/><rect class="c" x="1221" y="455" fill="#009958"/><rect class="c" x="1221" y="464" fill="#00995f"/><rect class="c" x="1221" y="473" fill="#009967"/><rect class="c" x="1221" y="482" fill="#00996f"/><rect class="c" x="1221" y="491" fill="#009978"/><rect class="c" x="1221" y="500" fill="#009982"/><rect class="c" x="1221" y="509" fill="#00998d"/><rect class="c" x="1221" y="518" fill="#009998"/><rect class="c" x="1221" y="527" fill="#008e99"/><rect class="c" x="1221" y="536" fill="#008299"/><rect class="c" x="1221" y="545" fill="#007899"/><rect class="c" x="1221" y="554" fill="#006e99"/><rect class="c" x="1221" y="563" fill="#006599"/><rect class="c" x="1221" y="572" fill="#005c99"/><rect class="c" x="1221" y="581" fill="#005499"/><rect class="c" x="1221" y="590" fill="#004c99"/><rect class="c" x="1221" y="599" fill="#004599"/><rect class="c" x="1221" y="608" fill="#003e99"/><rect class="c" x="1221" y="617" fill="#003799"/><rect class="c" x="1221" y="626" fill="#003199"/><rect class="c" x="1221" y="635" fill="#002b99"/><rect class="c" x="1221" y="644" fill="#002699"/><rect class="c" x="1230" y="167" fill="#009900"/><rect class="c" x="1230" y="176" fill="#009900"/><rect class="c" x="1230" y="185" fill="#009900"/><rect class="c" x="1230" y="194" fill="#009900"/><rect class="c" x="1230" y="203" fill="#009900"/><rect class="c" x="1230" y="212" fill="#009900"/><rect class="c" x="1230" y="221" fill="#009900"/><rect class="c" x="1230" y="230" fill="#009901"/><rect class="c" x="1230" y="239" fill="#009903"/><rect class="c" x="1230" y="248" fill="#009904"/><rect class="c" x="1230" y="257" fill="#009906"/><rect class="c" x="1230" y="266" fill="#009908"/><rect class="c" x="1230" y="275" fill="#00990a"/><rect class="c" x="1230" y="284" fill="#00990c"/><rect class="c" x="1230" y="293" fill="#00990e"/><rect class="c" x="1230" y="302" fill="#009910"/><rect class="c" x="1230" y="311" fill="#009913"/><rect class="c" x="1230" y="320" fill="#009916"/><rect class="c" x="1230" y="329" fill="#009918"/><rect class="c" x="1230" y="338" fill="#00991b"/><rect class="c" x="1230" y="347" fill="#00991e"/><rect class="c" x="1230" y="356" fill="#009922"/><rect class="c" x="1230" y="365" fill="#009925"/><rect class="c" x="1230" y="374" fill="#009929"/><rect class="c" x="1230" y="383" fill="#00992d"/><rect class="c" x="1230" y="392" fill="#009931"/><rect class="c" x="1230" y="401" fill="#009935"/><rect class="c" x="1230" y="410" fill="#00993a"/><rect class="c" x="1230" y="419" fill="#00993f"/><rect class="c" x="1230" y="428" fill="#009944"/><rect class="c" x="1230" y="437" fill="#00994a"/><rect class="c" x="1230" y="446" fill="#009950"/><rect class="c" x="1230" y="455" fill="#009957"/><rect class="c" x="1230" y="464" fill="#00995e"/><rect class="c" x="1230" y="473" fill="#009966"/><rect class="c" x="1230" y="482" fill="#00996f"/><rect class="c" x="1230" y="491" fill="#009978"/><rect class="c" x="1230" y="500" fill="#009982"/><rect class="c" x="1230" y="509" fill="#00998d"/><rect class="c" x="1230" y="518" fill="#009998"/><rect class="c" x="1230" y="527" fill="#008d99"/><rect class="c" x="1230" y="536" fill="#008299"/><rect class="c" x="1230" y="545" fill="#007799"/><rect class="c" x="1230" y="554" fill="#006d99"/><rect class="c" x="1230" y="563" fill="#006499"/><rect class="c" x="1230" y="572" fill="#005b99"/><rect class="c" x="1230" y="581" fill="#005399"/><rect class="c" x="1230" y="590" fill="#004b99"/><rect class="c" x="1230" y="599" fill="#004399"/><rect class="c" x="1230" y="608" fill="#003c99"/><rect class="c" x="1230" y="617" fill="#003699"/><rect class="c" x="1230" y="626" fill="#003099"/><rect class="c" x="1230" y="635" fill="#002a99"/><rect class="c" x="1230" y="644" fill="#002499"/><rect class="c" x="1230" y="653" fill="#001f99"/><rect class="c" x="1230" y="662" fill="#001a99"/><rect class="c" x="1239" y="167" fill="#009900"/><rect class="c" x="1239" y="176" fill="#009900"/><rect class="c" x="1239" y="185" fill="#009900"/><rect class="c" x="1239" y="194" fill="#009900"/><rect class="c" x="1239" y="203" fill="#009900"/><rect class="c" x="1239" y="212" fill="#009900"/><rect class="c" x="1239" y="221" fill="#009900"/><rect class="c" x="1239" y="230" fill="#009901"/><rect class="c" x="1239" y="239" fill="#009902"/><rect class="c" x="1239" y="248" fill="#009904"/><rect class="c" x="1239" y="257" fill="#009905"/><rect class="c" x="1239" y="266" fill="#009907"/><rect class="c" x="1239" y="275" fill="#009909"/><rect class="c" x="1239" y="284" fill="#00990b"/><rect class="c" x="1239" y="293" fill="#00990d"/><rect class="c" x="1239" y="302" fill="#00990f"/><rect class="c" x="1239" y="311" fill="#009912"/><rect class="c" x="1239" y="320" fill="#009914"/><rect class="c" x="1239" y="329" fill="#009917"/><rect class="c" x="1239" y="338" fill="#00991a"/><rect class="c" x="1239" y="347" fill="#00991d"/><rect class="c" x="1239" y="356" fill="#009920"/><rect class="c" x="1239" y="365" fill="#009924"/><rect class="c" x="1239" y="374" fill="#009928"/><rect class="c" x="1239" y="383" fill="#00992c"/><rect class="c" x="1239" y="392" fill="#009930"/><rect class="c" x="1239" y="401" fill="#009934"/><rect class="c" x="1239" y="410" fill="#009939"/><rect class="c" x="1239" y="419" fill="#00993e"/><rect class="c" x="1239" y="428" fill="#009943"/><rect class="c" x="1239" y="437" fill="#009949"/><rect class="c" x="1239" y="446" fill="#00994f"/><rect class="c" x="1239" y="455" fill="#009956"/><rect class="c" x="1239" y="464" fill="#00995e"/><rect class="c" x="1239" y="473" fill="#009965"/><rect class="c" x="1239" y="482" fill="#00996e"/><rect class="c" x="1239" y="491" fill="#009977"/><rect class="c" x="1239" y="500" fill="#009981"/><rect class="c" x="1239" y="509" fill="#00998c"/><rect class="c" x="1239" y="518" fill="#009999"/><rect class="c" x="1239" y="527" fill="#008d99"/><rect class="c" x="1239" y="536" fill="#008299"/><rect class="c" x="1239" y="545" fill="#007799"/><rect class="c" x="1239" y="554" fill="#006d99"/><rect class="c" x="1239" y="563" fill="#006399"/><rect class="c" x="1239" y="572" fill="#005a99"/><rect class="c" x="1239" y="581" fill="#005299"/><rect class="c" x="1239" y="590" fill="#004a99"/><rect class="c" x="1239" y="599" fill="#004299"/><rect class="c" x="1239" y="608" fill="#003b99"/><rect class="c" x="1239" y="617" fill="#003599"/><rect class="c" x="1239" y="626" fill="#002e99"/><rect class="c" x="1239" y="635" fill="#002899"/><rect class="c" x="1239" y="644" fill="#002399"/><rect class="c" x="1239" y="653" fill="#001e99"/><rect class="c" x="1239" y="662" fill="#001999"/><rect class="c" x="1239" y="671" fill="#001499"/><rect class="c" x="1239" y="680" fill="#001099"/><rect class="c" x="1248" y="167" fill="#009900"/><rect class="c" x="1248" y="176" fill="#009900"/><rect class="c" x="1248" y="185" fill="#009900"/><rect class="c" x="1248" y="194" fill="#009900"/><rect class="c" x="1248" y="203" fill="#009900"/><rect class="c" x="1248" y="212" fill="#009900"/><rect class="c" x="1248" y="221" fill="#009900"/><rect class="c" x="1248" y="230" fill="#009900"/><rect class="c" x="1248" y="239" fill="#009901"/><rect class="c" x="1248" y="248" fill="#009903"/><rect class="c" x="1248" y="257" fill="#009904"/><rect class="c" x="1248" y="266" fill="#009906"/><rect class="c" x="1248" y="275" fill="#009908"/><rect class="c" x="1248" y="284" fill="#00990a"/><rect class="c" x="1248" y="293" fill="#00990c"/><rect class="c" x="1248" y="302" fill="#00990e"/><rect class="c" x="1248" y="311" fill="#009911"/><rect class="c" x="1248" y="320" fill="#009913"/><rect class="c" x="1248" y="329" fill="#009916"/><rect class="c" x="1248" y="338" fill="#009919"/><rect class="c" x="1248" y="347" fill="#00991c"/><rect class="c" x="1248" y="356" fill="#00991f"/><rect class="c" x="1248" y="365" fill="#009923"/><rect class="c" x="1248" y="374" fill="#009926"/><rect class="c" x="1248" y="383" fill="#00992a"/><rect class="c" x="1248" y="392" fill="#00992f"/><rect class="c" x="1248" y="401" fill="#009933"/><rect class="c" x="1248" y="410" fill="#009938"/><rect class="c" x="1248" y="419" fill="#00993d"/><rect class="c" x="1248" y="428" fill="#009942"/><rect class="c" x="1248" y="437" fill="#009948"/><rect class="c" x="1248" y="446" fill="#00994f"/><rect class="c" x="1248" y="455" fill="#009955"/><rect class="c" x="1248" y="464" fill="#00995d"/><rect class="c" x="1248" y="473" fill="#009965"/><rect class="c" x="1248" y="482" fill="#00996d"/><rect class="c" x="1248" y="491" fill="#009977"/><rect class="c" x="1248" y="500" fill="#009981"/><rect class="c" x="1248" y="509" fill="#00998c"/><rect class="c" x="1248" y="518" fill="#009999"/><rect class="c" x="1248" y="527" fill="#008d99"/><rect class="c" x="1248" y="536" fill="#008199"/><rect class="c" x="1248" y="545" fill="#007699"/><rect class="c" x="1248" y="554" fill="#006c99"/><rect class="c" x="1248" y="563" fill="#006299"/><rect class="c" x="1248" y="572" fill="#005999"/><rect class="c" x="1248" y="581" fill="#005199"/><rect class="c" x="1248" y="590" fill="#004999"/><rect class="c" x="1248" y="599" fill="#004199"/><rect class="c" x="1248" y="608" fill="#003a99"/><rect class="c" x="1248" y="617" fill="#003399"/><rect class="c" x="1248" y="626" fill="#002d99"/><rect class="c" x="1248" y="635" fill="#002799"/><rect class="c" x="1248" y="644" fill="#002199"/><rect class="c" x="1248" y="653" fill="#001c99"/><rect class="c" x="1248" y="662" fill="#001799"/><rect class="c" x="1248" y="671" fill="#001399"/><rect class="c" x="1248" y="680" fill="#000e99"/><rect class="c" x="1248" y="689" fill="#000a99"/><rect class="c" x="1248" y="698" fill="#000699"/><rect class="c" x="1257" y="176" fill="#009900"/><rect class="c" x="1257" y="185" fill="#009900"/><rect class="c" x="1257" y="194" fill="#009900"/><rect class="c" x="1257" y="203" fill="#009900"/><rect class="c" x="1257" y="212" fill="#009900"/><rect class="c" x="1257" y="221" fill="#009900"/><rect class="c" x="1257" y="230" fill="#009900"/><rect class="c" x="1257" y="239" fill="#009900"/><rect class="c" x="1257" y="248" fill="#009902"/><rect class="c" x="1257" y="257" fill="#009903"/><rect class="c" x="1257" y="266" fill="#009905"/><rect class="c" x="1257" y="275" fill="#009907"/><rect class="c" x="1257" y="284" fill="#009909"/><rect class="c" x="1257" y="293" fill="#00990b"/><rect class="c" x="1257" y="302" fill="#00990d"/><rect class="c" x="1257" y="311" fill="#009910"/><rect class="c" x="1257" y="320" fill="#009912"/><rect class="c" x="1257" y="329" fill="#009915"/><rect class="c" x="1257" y="338" fill="#009918"/><rect class="c" x="1257" y="347" fill="#00991b"/><rect class="c" x="1257" y="356" fill="#00991e"/><rect class="c" x="1257" y="365" fill="#009922"/><rect class="c" x="1257" y="374" fill="#009925"/><rect class="c" x="1257" y="383" fill="#009929"/><rect class="c" x="1257" y="392" fill="#00992d"/><rect class="c" x="1257" y="401" fill="#009932"/><rect class="c" x="1257" y="410" fill="#009937"/><rect class="c" x="1257" y="419" fill="#00993c"/><rect class="c" x="1257" y="428" fill="#009941"/><rect class="c" x="1257" y="437" fill="#009947"/><rect class="c" x="1257" y="446" fill="#00994e"/><rect class="c" x="1257" y="455" fill="#009954"/><rect class="c" x="1257" y="464" fill="#00995c"/><rect class="c" x="1257" y="473" fill="#009964"/><rect class="c" x="1257" y="482" fill="#00996d"/><rect class="c" x="1257" y="491" fill="#009976"/><rect class="c" x="1257" y="500" fill="#009981"/><rect class="c" x="1257" y="509" fill="#00998c"/><rect class="c" x="1257" y="518" fill="#009999"/><rect class="c" x="1257" y="527" fill="#008d99"/><rect class="c" x="1257" y="536" fill="#008199"/><rect class="c" x="1257" y="545" fill="#007599"/><rect class="c" x="1257" y="554" fill="#006b99"/><rect class="c" x="1257" y="563" fill="#006199"/><rect class="c" x="1257" y="572" fill="#005899"/><rect class="c" x="1257" y="581" fill="#004f99"/><rect class="c" x="1257" y="590" fill="#004799"/><rect class="c" x="1257" y="599" fill="#004099"/><rect class="c" x="1257" y="608" fill="#003999"/><rect class="c" x="1257" y="617" fill="#003299"/><rect class="c" x="1257" y="626" fill="#002c99"/><rect class="c" x="1257" y="635" fill="#002699"/><rect class="c" x="1257" y="644" fill="#002099"/><rect class="c" x="1257" y="653" fill="#001b99"/><rect class="c" x="1257" y="662" fill="#001699"/><rect class="c" x="1257" y="671" fill="#001199"/><rect class="c" x="1257" y="680" fill="#000d99"/><rect class="c" x="1257" y="689" fill="#000999"/><rect class="c" x="1257" y="698" fill="#000599"/><rect class="c" x="1257" y="707" fill="#000299"/><rect class="c" x="1266" y="176" fill="#009900"/><rect class="c" x="1266" y="185" fill="#009900"/><rect class="c" x="1266" y="194" fill="#009900"/><rect class="c" x="1266" y="203" fill="#009900"/><rect class="c" x="1266" y="212" fill="#009900"/><rect class="c" x="1266" y="221" fill="#009900"/><rect class="c" x="1266" y="230" fill="#009900"/><rect class="c" x="1266" y="239" fill="#009900"/><rect class="c" x="1266" y="248" fill="#009901"/><rect class="c" x="1266" y="257" fill="#009902"/><rect class="c" x="1266" y="266" fill="#009904"/><rect class="c" x="1266" y="275" fill="#009906"/><rect class="c" x="1266" y="284" fill="#009908"/><rect class="c" x="1266" y="293" fill="#00990a"/><rect class="c" x="1266" y="302" fill="#00990c"/><rect class="c" x="1266" y="311" fill="#00990f"/><rect class="c" x="1266" y="320" fill="#009911"/><rect class="c" x="1266" y="329" fill="#009914"/><rect class="c" x="1266" y="338" fill="#009917"/><rect class="c" x="1266" y="347" fill="#00991a"/><rect class="c" x="1266" y="356" fill="#00991d"/><rect class="c" x="1266" y="365" fill="#009920"/><rect class="c" x="1266" y="374" fill="#009924"/><rect class="c" x="1266" y="383" fill="#009928"/><rect class="c" x="1266" y="392" fill="#00992c"/><rect class="c" x="1266" y="401" fill="#009931"/><rect class="c" x="1266" y="410" fill="#009936"/><rect class="c" x="1266" y="419" fill="#00993b"/><rect class="c" x="1266" y="428" fill="#009940"/><rect class="c" x="1266" y="437" fill="#009946"/><rect class="c" x="1266" y="446" fill="#00994d"/><rect class="c" x="1266" y="455" fill="#009953"/><rect class="c" x="1266" y="464" fill="#00995b"/><rect class="c" x="1266" y="473" fill="#009963"/><rect class="c" x="1266" y="482" fill="#00996c"/><rect class="c" x="1266" y="491" fill="#009976"/><rect class="c" x="1266" y="500" fill="#009980"/><rect class="c" x="1266" y="509" fill="#00998c"/><rect class="c" x="1266" y="518" fill="#009999"/><rect class="c" x="1266" y="527" fill="#008c99"/><rect class="c" x="1266" y="536" fill="#008099"/><rect class="c" x="1266" y="545" fill="#007599"/><rect class="c" x="1266" y="554" fill="#006a99"/><rect class="c" x="1266" y="563" fill="#006099"/><rect class="c" x="1266" y="572" fill="#005799"/><rect class="c" x="1266" y="581" fill="#004e99"/><rect class="c" x="1266" y="590" fill="#004699"/><rect class="c" x="1266" y="599" fill="#003e99"/><rect class="c" x="1266" y="608" fill="#003799"/><rect class="c" x="1266" y="617" fill="#003099"/><rect class="c" x="1266" y="626" fill="#002a99"/><rect class="c" x="1266" y="635" fill="#002499"/><rect class="c" x="1266" y="644" fill="#001e99"/><rect class="c" x="1266" y="653" fill="#001999"/><rect class="c" x="1266" y="662" fill="#001499"/><rect class="c" x="1266" y="671" fill="#001099"/><rect class="c" x="1266" y="680" fill="#000b99"/><rect class="c" x="1266" y="689" fill="#000799"/><rect class="c" x="1266" y="698" fill="#000499"/><rect class="c" x="1266" y="707" fill="#000099"/><rect class="c" x="1266" y="716" fill="#000099"/><rect class="c" x="1275" y="176" fill="#009900"/><rect class="c" x="1275" y="185" fill="#009900"/><rect class="c" x="1275" y="194" fill="#009900"/><rect class="c" x="1275" y="203" fill="#009900"/><rect class="c" x="1275" y="212" fill="#009900"/><rect class="c" x="1275" y="221" fill="#009900"/><rect class="c" x="1275" y="230" fill="#009900"/><rect class="c" x="1275" y="239" fill="#009900"/><rect class="c" x="1275" y="248" fill="#009900"/><rect class="c" x="1275" y="257" fill="#009902"/><rect class="c" x="1275" y="266" fill="#009903"/><rect class="c" x="1275" y="275" fill="#009905"/><rect class="c" x="1275" y="284" fill="#009907"/><rect class="c" x="1275" y="293" fill="#009909"/><rect class="c" x="1275" y="302" fill="#00990b"/><rect class="c" x="1275" y="311" fill="#00990e"/><rect class="c" x="1275" y="320" fill="#009910"/><rect class="c" x="1275" y="329" fill="#009913"/><rect class="c" x="1275" y="338" fill="#009916"/><rect class="c" x="1275" y="347" fill="#009919"/><rect class="c" x="1275" y="356" fill="#00991c"/><rect class="c" x="1275" y="365" fill="#00991f"/><rect class="c" x="1275" y="374" fill="#009923"/><rect class="c" x="1275" y="383" fill="#009927"/><rect class="c" x="1275" y="392" fill="#00992b"/><rect class="c" x="1275" y="401" fill="#009930"/><rect class="c" x="1275" y="410" fill="#009934"/><rect class="c" x="1275" y="419" fill="#00993a"/><rect class="c" x="1275" y="428" fill="#00993f"/><rect class="c" x="1275" y="437" fill="#009945"/><rect class="c" x="1275" y="446" fill="#00994b"/><rect class="c" x="1275" y="455" fill="#009952"/><rect class="c" x="1275" y="464" fill="#00995a"/><rect class="c" x="1275" y="473" fill="#009962"/><rect class="c" x="1275" y="482" fill="#00996b"/><rect class="c" x="1275" y="491" fill="#009975"/><rect class="c" x="1275" y="500" fill="#009980"/><rect class="c" x="1275" y="509" fill="#00998c"/><rect class="c" x="1275" y="518" fill="#009999"/><rect class="c" x="1275" y="527" fill="#008c99"/><rect class="c" x="1275" y="536" fill="#008099"/><rect class="c" x="1275" y="545" fill="#007499"/><rect class="c" x="1275" y="554" fill="#006999"/><rect class="c" x="1275" y="563" fill="#005f99"/><rect class="c" x="1275" y="572" fill="#005699"/><rect class="c" x="1275" y="581" fill="#004d99"/><rect class="c" x="1275" y="590" fill="#004599"/><rect class="c" x="1275" y="599" fill="#003d99"/><rect class="c" x="1275" y="608" fill="#003699"/><rect class="c" x="1275" y="617" fill="#002f99"/><rect class="c" x="1275" y="626" fill="#002999"/><rect class="c" x="1275" y="635" fill="#002399"/><rect class="c" x="1275" y="644" fill="#001d99"/><rect class="c" x="1275" y="653" fill="#001899"/><rect class="c" x="1275" y="662" fill="#001399"/><rect class="c" x="1275" y="671" fill="#000e99"/><rect class="c" x="1275" y="680" fill="#000a99"/><rect class="c" x="1275" y="689" fill="#000699"/><rect class="c" x="1275" y="698" fill="#000299"/><rect class="c" x="1275" y="707" fill="#000099"/><rect class="c" x="1275" y="716" fill="#000099"/><rect class="c" x="1275" y="725" fill="#000099"/><rect class="c" x="1284" y="185" fill="#009900"/><rect class="c" x="1284" y="194" fill="#009900"/><rect class="c" x="1284" y="203" fill="#009900"/><rect class="c" x="1284" y="212" fill="#009900"/><rect class="c" x="1284" y="221" fill="#009900"/><rect class="c" x="1284" y="230" fill="#009900"/><rect class="c" x="1284" y="239" fill="#009900"/><rect class="c" x="1284" y="248" fill="#009900"/><rect class="c" x="1284" y="257" fill="#009901"/><rect class="c" x="1284" y="266" fill="#009902"/><rect class="c" x="1284" y="275" fill="#009904"/><rect class="c" x="1284" y="284" fill="#009906"/><rect class="c" x="1284" y="293" fill="#009908"/><rect class="c" x="1284" y="302" fill="#00990a"/><rect class="c" x="1284" y="311" fill="#00990c"/><rect class="c" x="1284" y="320" fill="#00990f"/><rect class="c" x="1284" y="329" fill="#009912"/><rect class="c" x="1284" y="338" fill="#009914"/><rect class="c" x="1284" y="347" fill="#009917"/><rect class="c" x="1284" y="356" fill="#00991b"/><rect class="c" x="1284" y="365" fill="#00991e"/><rect class="c" x="1284" y="374" fill="#009922"/><rect class="c" x="1284" y="383" fill="#009926"/><rect class="c" x="1284" y="392" fill="#00992a"/><rect class="c" x="1284" y="401" fill="#00992e"/><rect class="c" x="1284" y="410" fill="#009933"/><rect class="c" x="1284" y="419" fill="#009938"/><rect class="c" x="1284" y="428" fill="#00993e"/><rect class="c" x="1284" y="437" fill="#009944"/><rect class="c" x="1284" y="446" fill="#00994a"/><rect class="c" x="1284" y="455" fill="#009951"/><rect class="c" x="1284" y="464" fill="#009959"/><rect class="c" x="1284" y="473" fill="#009961"/><rect class="c" x="1284" y="482" fill="#00996a"/><rect class="c" x="1284" y="491" fill="#009974"/><rect class="c" x="1284" y="500" fill="#00997f"/><rect class="c" x="1284" y="509" fill="#00998b"/><rect class="c" x="1284" y="518" fill="#009999"/><rect class="c" x="1284" y="527" fill="#008c99"/><rect class="c" x="1284" y="536" fill="#007f99"/><rect class="c" x="1284" y="545" fill="#007399"/><rect class="c" x="1284" y="554" fill="#006899"/><rect class="c" x="1284" y="563" fill="#005e99"/><rect class="c" x="1284" y="572" fill="#005599"/><rect class="c" x="1284" y="581" fill="#004c99"/><rect class="c" x="1284" y="590" fill="#004499"/><rect class="c" x="1284" y="599" fill="#003c99"/><rect class="c" x="1284" y="608" fill="#003499"/><rect class="c" x="1284" y="617" fill="#002e99"/><rect class="c" x="1284" y="626" fill="#002799"/><rect class="c" x="1284" y="635" fill="#002199"/><rect class="c" x="1284" y="644" fill="#001b99"/><rect class="c" x="1284" y="653" fill="#001699"/><rect class="c" x="1284" y="662" fill="#001199"/><rect class="c" x="1284" y="671" fill="#000d99"/><rect class="c" x="1284" y="680" fill="#000899"/><rect class="c" x="1284" y="689" fill="#000499"/><rect class="c" x="1284" y="698" fill="#000199"/><rect class="c" x="1284" y="707" fill="#000099"/><rect class="c" x="1284" y="716" fill="#000099"/><rect class="c" x="1284" y="725" fill="#020099"/><rect class="c" x="1284" y="734" fill="#030099"/><rect class="c" x="1293" y="185" fill="#009900"/><rect class="c" x="1293" y="194" fill="#009900"/><rect class="c" x="1293" y="203" fill="#009900"/><rect class="c" x="1293" y="212" fill="#009900"/><rect class="c" x="1293" y="221" fill="#009900"/><rect class="c" x="1293" y="230" fill="#009900"/><rect class="c" x="1293" y="239" fill="#009900"/><rect class="c" x="1293" y="248" fill="#009900"/><rect class="c" x="1293" y="257" fill="#009900"/><rect class="c" x="1293" y="266" fill="#009901"/><rect class="c" x="1293" y="275" fill="#009903"/><rect class="c" x="1293" y="284" fill="#009905"/><rect class="c" x="1293" y="293" fill="#009907"/><rect class="c" x="1293" y="302" fill="#009909"/><rect class="c" x="1293" y="311" fill="#00990b"/><rect class="c" x="1293" y="320" fill="#00990e"/><rect class="c" x="1293" y="329" fill="#009910"/><rect class="c" x="1293" y="338" fill="#009913"/><rect class="c" x="1293" y="347" fill="#009916"/><rect class="c" x="1293" y="356" fill="#009919"/><rect class="c" x="1293" y="365" fill="#00991d"/><rect class="c" x="1293" y="374" fill="#009920"/><rect class="c" x="1293" y="383" fill="#009924"/><rect class="c" x="1293" y="392" fill="#009929"/><rect class="c" x="1293" y="401" fill="#00992d"/><rect class="c" x="1293" y="410" fill="#009932"/><rect class="c" x="1293" y="419" fill="#009937"/><rect class="c" x="1293" y="428" fill="#00993d"/><rect class="c" x="1293" y="437" fill="#009943"/><rect class="c" x="1293" y="446" fill="#009949"/><rect class="c" x="1293" y="455" fill="#009950"/><rect class="c" x="1293" y="464" fill="#009958"/><rect class="c" x="1293" y="473" fill="#009960"/><rect class="c" x="1293" y="482" fill="#00996a"/><rect class="c" x="1293" y="491" fill="#009974"/><rect class="c" x="1293" y="500" fill="#00997f"/><rect class="c" x="1293" y="509" fill="#00998b"/><rect class="c" x="1293" y="518" fill="#009999"/><rect class="c" x="1293" y="527" fill="#008b99"/><rect class="c" x="1293" y="536" fill="#007f99"/><rect class="c" x="1293" y="545" fill="#007399"/><rect class="c" x="1293" y="554" fill="#006899"/><rect class="c" x="1293" y="563" fill="#005d99"/><rect class="c" x="1293" y="572" fill="#005499"/><rect class="c" x="1293" y="581" fill="#004b99"/><rect class="c" x="1293" y="590" fill="#004299"/><rect class="c" x="1293" y="599" fill="#003a99"/><rect class="c" x="1293" y="608" fill="#003399"/><rect class="c" x="1293" y="617" fill="#002c99"/><rect class="c" x="1293" y="626" fill="#002699"/><rect class="c" x="1293" y="635" fill="#001f99"/><rect class="c" x="1293" y="644" fill="#001a99"/><rect class="c" x="1293" y="653" fill="#001599"/><rect class="c" x="1293" y="662" fill="#001099"/><rect class="c" x="1293" y="671" fill="#000b99"/><rect class="c" x="1293" y="680" fill="#000799"/><rect class="c" x="1293" y="689" fill="#000399"/><rect class="c" x="1293" y="698" fill="#010099"/><rect class="c" x="1293" y="707" fill="#030099"/><rect class="c" x="1293" y="716" fill="#050099"/><rect class="c" x="1293" y="725" fill="#070099"/><rect class="c" x="1293" y="734" fill="#080099"/><rect class="c" x="1293" y="743" fill="#090099"/><rect class="c" x="1302" y="185" fill="#009900"/><rect class="c" x="1302" y="194" fill="#009900"/><rect class="c" x="1302" y="203" fill="#009900"/><rect class="c" x="1302" y="212" fill="#009900"/><rect class="c" x="1302" y="221" fill="#009900"/><rect class="c" x="1302" y="230" fill="#009900"/><rect class="c" x="1302" y="239" fill="#009900"/><rect class="c" x="1302" y="248" fill="#009900"/><rect class="c" x="1302" y="257" fill="#009900"/><rect class="c" x="1302" y="266" fill="#009900"/><rect class="c" x="1302" y="275" fill="#009902"/><rect class="c" x="1302" y="284" fill="#009904"/><rect class="c" x="1302" y="293" fill="#009906"/><rect class="c" x="1302" y="302" fill="#009908"/><rect class="c" x="1302" y="311" fill="#00990a"/><rect class="c" x="1302" y="320" fill="#00990d"/><rect class="c" x="1302" y="329" fill="#00990f"/><rect class="c" x="1302" y="338" fill="#009912"/><rect class="c" x="1302" y="347" fill="#009915"/><rect class="c" x="1302" y="356" fill="#009918"/><rect class="c" x="1302" y="365" fill="#00991c"/><rect class="c" x="1302" y="374" fill="#00991f"/><rect class="c" x="1302" y="383" fill="#009923"/><rect class="c" x="1302" y="392" fill="#009927"/><rect class="c" x="1302" y="401" fill="#00992c"/><rect class="c" x="1302" y="410" fill="#009931"/><rect class="c" x="1302" y="419" fill="#009936"/><rect class="c" x="1302" y="428" fill="#00993b"/><rect class="c" x="1302" y="437" fill="#009942"/><rect class="c" x="1302" y="446" fill="#009948"/><rect class="c" x="1302" y="455" fill="#00994f"/><rect class="c" x="1302" y="464" fill="#009957"/><rect class="c" x="1302" y="473" fill="#009960"/><rect class="c" x="1302" y="482" fill="#009969"/><rect class="c" x="1302" y="491" fill="#009973"/><rect class="c" x="1302" y="500" fill="#00997e"/><rect class="c" x="1302" y="509" fill="#00998b"/><rect class="c" x="1302" y="518" fill="#009999"/><rect class="c" x="1302" y="527" fill="#008b99"/><rect class="c" x="1302" y="536" fill="#007e99"/><rect class="c" x="1302" y="545" fill="#007299"/><rect class="c" x="1302" y="554" fill="#006799"/><rect class="c" x="1302" y="563" fill="#005c99"/><rect class="c" x="1302" y="572" fill="#005299"/><rect class="c" x="1302" y="581" fill="#004999"/><rect class="c" x="1302" y="590" fill="#004199"/><rect class="c" x="1302" y="599" fill="#003999"/><rect class="c" x="1302" y="608" fill="#003199"/><rect class="c" x="1302" y="617" fill="#002a99"/><rect class="c" x="1302" y="626" fill="#002499"/><rect class="c" x="1302" y="635" fill="#001e99"/><rect class="c" x="1302" y="644" fill="#001899"/><rect class="c" x="1302" y="653" fill="#001399"/><rect class="c" x="1302" y="662" fill="#000e99"/><rect class="c" x="1302" y="671" fill="#010999"/><rect class="c" x="1302" y="680" fill="#030599"/><rect class="c" x="1302" y="689" fill="#050299"/><rect class="c" x="1302" y="698" fill="#070099"/><rect class="c" x="1302" y="707" fill="#090099"/><rect class="c" x="1302" y="716" fill="#0a0099"/><rect class="c" x="1302" y="725" fill="#0c0099"/><rect class="c" x="1302" y="734" fill="#0e0099"/><rect class="c" x="1302" y="743" fill="#0f0099"/><rect class="c" x="1311" y="194" fill="#009900"/><rect class="c" x="1311" y="203" fill="#009900"/><rect class="c" x="1311" y="212" fill="#009900"/><rect class="c" x="1311" y="221" fill="#009900"/><rect class="c" x="1311" y="230" fill="#009900"/><rect class="c" x="1311" y="239" fill="#009900"/><rect class="c" x="1311" y="248" fill="#009900"/><rect class="c" x="1311" y="257" fill="#009900"/><rect class="c" x="1311" y="266" fill="#009900"/><rect class="c" x="1311" y="275" fill="#009901"/><rect class="c" x="1311" y="284" fill="#009903"/><rect class="c" x="1311" y="293" fill="#009905"/><rect class="c" x="1311" y="302" fill="#009907"/><rect class="c" x="1311" y="311" fill="#009909"/><rect class="c" x="1311" y="320" fill="#00990b"/><rect class="c" x="1311" y="329" fill="#00990e"/><rect class="c" x="1311" y="338" fill="#009911"/><rect class="c" x="1311" y="347" fill="#009914"/><rect class="c" x="1311" y="356" fill="#009917"/><rect class="c" x="1311" y="365" fill="#00991a"/><rect class="c" x="1311" y="374" fill="#00991e"/><rect class="c" x="1311" y="383" fill="#009922"/><rect class="c" x="1311" y="392" fill="#009926"/><rect class="c" x="1311" y="401" fill="#00992b"/><rect class="c" x="1311" y="410" fill="#00992f"/><rect class="c" x="1311" y="419" fill="#009935"/><rect class="c" x="1311" y="428" fill="#00993a"/><rect class="c" x="1311" y="437" fill="#009940"/><rect class="c" x="1311" y="446" fill="#009947"/><rect class="c" x="1311" y="455" fill="#00994e"/><rect class="c" x="1311" y="464" fill="#009956"/><rect class="c" x="1311" y="473" fill="#00995f"/><rect class="c" x="1311" y="482" fill="#009968"/><rect class="c" x="1311" y="491" fill="#009972"/><rect class="c" x="1311" y="500" fill="#00997e"/><rect class="c" x="1311" y="509" fill="#00998b"/><rect class="c" x="1311" y="518" fill="#009999"/><rect class="c" x="1311" y="527" fill="#008b99"/><rect class="c" x="1311" y="536" fill="#007d99"/><rect class="c" x="1311" y="545" fill="#007199"/><rect class="c" x="1311" y="554" fill="#006699"/><rect class="c" x="1311" y="563" fill="#005b99"/><rect class="c" x="1311" y="572" fill="#005199"/><rect class="c" x="1311" y="581" fill="#004899"/><rect class="c" x="1311" y="590" fill="#003f99"/><rect class="c" x="1311" y="599" fill="#003799"/><rect class="c" x="1311" y="608" fill="#003099"/><rect class="c" x="1311" y="617" fill="#002999"/><rect class="c" x="1311" y="626" fill="#002299"/><rect class="c" x="1311" y="635" fill="#001c99"/><rect class="c" x="1311" y="644" fill="#001799"/><rect class="c" x="1311" y="653" fill="#021199"/><rect class="c" x="1311" y="662" fill="#040c99"/><rect class="c" x="1311" y="671" fill="#070899"/><rect class="c" x="1311" y="680" fill="#090499"/><rect class="c" x="1311" y="689" fill="#0b0099"/><rect class="c" x="1311" y="698" fill="#0d0099"/><rect class="c" x="1311" y="707" fill="#0f0099"/><rect class="c" x="1311" y="716" fill="#110099"/><rect class="c" x="1311" y="725" fill="#120099"/><rect class="c" x="1311" y="734" fill="#140099"/><rect class="c" x="1311" y="743" fill="#150099"/><rect class="c" x="1320" y="194" fill="#009900"/><rect class="c" x="1320" y="203" fill="#009900"/><rect class="c" x="1320" y="212" fill="#009900"/><rect class="c" x="1320" y="221" fill="#009900"/><rect class="c" x="1320" y="230" fill="#009900"/><rect class="c" x="1320" y="239" fill="#009900"/><rect class="c" x="1320" y="248" fill="#009900"/><rect class="c" x="1320" y="257" fill="#009900"/><rect class="c" x="1320" y="266" fill="#009900"/><rect class="c" x="1320" y="275" fill="#009900"/><rect class="c" x="1320" y="284" fill="#009902"/><rect class="c" x="1320" y="293" fill="#009904"/><rect class="c" x="1320" y="302" fill="#009906"/><rect class="c" x="1320" y="311" fill="#009908"/><rect class="c" x="1320" y="320" fill="#00990a"/><rect class="c" x="1320" y="329" fill="#00990d"/><rect class="c" x="1320" y="338" fill="#00990f"/><rect class="c" x="1320" y="347" fill="#009912"/><rect class="c" x="1320" y="356" fill="#009916"/><rect class="c" x="1320" y="365" fill="#009919"/><rect class="c" x="1320" y="374" fill="#00991d"/><rect class="c" x="1320" y="383" fill="#009920"/><rect class="c" x="1320" y="392" fill="#009925"/><rect class="c" x="1320" y="401" fill="#009929"/><rect class="c" x="1320" y="410" fill="#00992e"/><rect class="c" x="1320" y="419" fill="#009933"/><rect class="c" x="1320" y="428" fill="#009939"/><rect class="c" x="1320" y="437" fill="#00993f"/><rect class="c" x="1320" y="446" fill="#009946"/><rect class="c" x="1320" y="455" fill="#00994d"/><rect class="c" x="1320" y="464" fill="#009955"/><rect class="c" x="1320" y="473" fill="#00995e"/><rect class="c" x="1320" y="482" fill="#009967"/><rect class="c" x="1320" y="491" fill="#009972"/><rect class="c" x="1320" y="500" fill="#00997d"/><rect class="c" x="1320" y="509" fill="#00998a"/><rect class="c" x="1320" y="518" fill="#009999"/><rect class="c" x="1320" y="527" fill="#008b99"/><rect class="c" x="1320" y="536" fill="#007d99"/><rect class="c" x="1320" y="545" fill="#007099"/><rect class="c" x="1320" y="554" fill="#006599"/><rect class="c" x="1320" y="563" fill="#005a99"/><rect class="c" x="1320" y="572" fill="#005099"/><rect class="c" x="1320" y="581" fill="#004799"/><rect class="c" x="1320" y="590" fill="#003e99"/><rect class="c" x="1320" y="599" fill="#003699"/><rect class="c" x="1320" y="608" fill="#002e99"/><rect class="c" x="1320" y="617" fill="#002799"/><rect class="c" x="1320" y="626" fill="#022199"/><rect class="c" x="1320" y="635" fill="#041a99"/><rect class="c" x="1320" y="644" fill="#071599"/><rect class="c" x="1320" y="653" fill="#091099"/><rect class="c" x="1320" y="662" fill="#0b0b99"/><rect class="c" x="1320" y="671" fill="#0d0699"/><rect class="c" x="1320" y="680" fill="#0f0299"/><rect class="c" x="1320" y="689" fill="#110099"/><rect class="c" x="1320" y="698" fill="#130099"/><rect class="c" x="1320" y="707" fill="#150099"/><rect class="c" x="1320" y="716" fill="#170099"/><rect class="c" x="1320" y="725" fill="#190099"/><rect class="c" x="1320" y="734" fill="#1b0099"/><rect class="c" x="1320" y="743" fill="#1b0099"/><rect class="c" x="1329" y="203" fill="#009900"/><rect class="c" x="1329" y="212" fill="#009900"/><rect class="c" x="1329" y="221" fill="#009900"/><rect class="c" x="1329" y="230" fill="#009900"/><rect class="c" x="1329" y="239" fill="#009900"/><rect class="c" x="1329" y="248" fill="#009900"/><rect class="c" x="1329" y="257" fill="#009900"/><rect class="c" x="1329" y="266" fill="#009900"/><rect class="c" x="1329" y="275" fill="#009900"/><rect class="c" x="1329" y="284" fill="#009901"/><rect class="c" x="1329" y="293" fill="#009902"/><rect class="c" x="1329" y="302" fill="#009904"/><rect class="c" x="1329" y="311" fill="#009907"/><rect class="c" x="1329" y="320" fill="#009909"/><rect class="c" x="1329" y="329" fill="#00990b"/><rect class="c" x="1329" y="338" fill="#00990e"/><rect class="c" x="1329" y="347" fill="#009911"/><rect class="c" x="1329" y="356" fill="#009914"/><rect class="c" x="1329" y="365" fill="#009918"/><rect class="c" x="1329" y="374" fill="#00991b"/><rect class="c" x="1329" y="383" fill="#00991f"/><rect class="c" x="1329" y="392" fill="#009923"/><rect class="c" x="1329" y="401" fill="#009928"/><rect class="c" x="1329" y="410" fill="#00992d"/><rect class="c" x="1329" y="419" fill="#009932"/><rect class="c" x="1329" y="428" fill="#009938"/><rect class="c" x="1329" y="437" fill="#00993e"/><rect class="c" x="1329" y="446" fill="#009945"/><rect class="c" x="1329" y="455" fill="#00994c"/><rect class="c" x="1329" y="464" fill="#009954"/><rect class="c" x="1329" y="473" fill="#00995d"/><rect class="c" x="1329" y="482" fill="#009966"/><rect class="c" x="1329" y="491" fill="#009971"/><rect class="c" x="1329" y="500" fill="#00997d"/><rect class="c" x="1329" y="509" fill="#00998a"/><rect class="c" x="1329" y="518" fill="#009999"/><rect class="c" x="1329" y="527" fill="#008a99"/><rect class="c" x="1329" y="536" fill="#007c99"/><rect class="c" x="1329" y="545" fill="#006f99"/><rect class="c" x="1329" y="554" fill="#006499"/><rect class="c" x="1329" y="563" fill="#005999"/><rect class="c" x="1329" y="572" fill="#004f99"/><rect class="c" x="1329" y="581" fill="#004599"/><rect class="c" x="1329" y="590" fill="#003c99"/><rect class="c" x="1329" y="599" fill="#013499"/><rect class="c" x="1329" y="608" fill="#042d99"/><rect class="c" x="1329" y="617" fill="#072599"/><rect class="c" x="1329" y="626" fill="#091f99"/><rect class="c" x="1329" y="635" fill="#0b1999"/><rect class="c" x="1329" y="671" fill="#150599"/><rect class="c" x="1329" y="680" fill="#170199"/><rect class="c" x="1329" y="689" fill="#190099"/><rect class="c" x="1329" y="698" fill="#1a0099"/><rect class="c" x="1329" y="707" fill="#1c0099"/><rect class="c" x="1329" y="716" fill="#1e0099"/><rect class="c" x="1329" y="725" fill="#200099"/><rect class="c" x="1329" y="734" fill="#220099"/><rect class="c" x="1329" y="743" fill="#220099"/><rect class="c" x="1338" y="203" fill="#009900"/><rect class="c" x="1338" y="212" fill="#009900"/><rect class="c" x="1338" y="221" fill="#009900"/><rect class="c" x="1338" y="230" fill="#009900"/><rect class="c" x="1338" y="239" fill="#009900"/><rect class="c" x="1338" y="248" fill="#009900"/><rect class="c" x="1338" y="257" fill="#009900"/><rect class="c" x="1338" y="266" fill="#009900"/><rect class="c" x="1338" y="275" fill="#009900"/><rect class="c" x="1338" y="284" fill="#009900"/><rect class="c" x="1338" y="293" fill="#009901"/><rect class="c" x="1338" y="302" fill="#009903"/><rect class="c" x="1338" y="311" fill="#009905"/><rect class="c" x="1338" y="320" fill="#009908"/><rect class="c" x="1338" y="329" fill="#00990a"/><rect class="c" x="1338" y="338" fill="#00990d"/><rect class="c" x="1338" y="347" fill="#009910"/><rect class="c" x="1338" y="356" fill="#009913"/><rect class="c" x="1338" y="365" fill="#009916"/><rect class="c" x="1338" y="374" fill="#00991a"/><rect class="c" x="1338" y="383" fill="#00991e"/><rect class="c" x="1338" y="392" fill="#009922"/><rect class="c" x="1338" y="401" fill="#009926"/><rect class="c" x="1338" y="410" fill="#00992b"/><rect class="c" x="1338" y="419" fill="#009931"/><rect class="c" x="1338" y="428" fill="#009936"/><rect class="c" x="1338" y="437" fill="#00993c"/><rect class="c" x="1338" y="446" fill="#009943"/><rect class="c" x="1338" y="455" fill="#00994b"/><rect class="c" x="1338" y="464" fill="#009953"/><rect class="c" x="1338" y="473" fill="#00995c"/><rect class="c" x="1338" y="482" fill="#009965"/><rect class="c" x="1338" y="491" fill="#009970"/><rect class="c" x="1338" y="500" fill="#00997c"/><rect class="c" x="1338" y="509" fill="#00998a"/><rect class="c" x="1338" y="518" fill="#009999"/><rect class="c" x="1338" y="527" fill="#008a99"/><rect class="c" x="1338" y="536" fill="#007c99"/><rect class="c" x="1338" y="545" fill="#006f99"/><rect class="c" x="1338" y="554" fill="#006399"/><rect class="c" x="1338" y="563" fill="#005799"/><rect class="c" x="1338" y="572" fill="#014d99"/><rect class="c" x="1338" y="581" fill="#044499"/><rect class="c" x="1338" y="590" fill="#063b99"/><rect class="c" x="1338" y="599" fill="#093399"/><rect class="c" x="1338" y="608" fill="#0c2b99"/><rect class="c" x="1338" y="662" fill="#1a0799"/><rect class="c" x="1338" y="671" fill="#1c0399"/><rect class="c" x="1338" y="680" fill="#1e0099"/><rect class="c" x="1338" y="689" fill="#200099"/><rect class="c" x="1338" y="698" fill="#220099"/><rect class="c" x="1338" y="707" fill="#240099"/><rect class="c" x="1338" y="716" fill="#250099"/><rect class="c" x="1338" y="725" fill="#270099"/><rect class="c" x="1338" y="734" fill="#290099"/><rect class="c" x="1338" y="743" fill="#290099"/><rect class="c" x="1347" y="212" fill="#009900"/><rect class="c" x="1347" y="221" fill="#009900"/><rect class="c" x="1347" y="230" fill="#009900"/><rect class="c" x="1347" y="239" fill="#009900"/><rect class="c" x="1347" y="248" fill="#009900"/><rect class="c" x="1347" y="257" fill="#009900"/><rect class="c" x="1347" y="266" fill="#009900"/><rect class="c" x="1347" y="275" fill="#009900"/><rect class="c" x="1347" y="284" fill="#009900"/><rect class="c" x="1347" y="293" fill="#009900"/><rect class="c" x="1347" y="302" fill="#009902"/><rect class="c" x="1347" y="311" fill="#009904"/><rect class="c" x="1347" y="320" fill="#009907"/><rect class="c" x="1347" y="329" fill="#009909"/><rect class="c" x="1347" y="338" fill="#00990c"/><rect class="c" x="1347" y="347" fill="#00990e"/><rect class="c" x="1347" y="356" fill="#009912"/><rect class="c" x="1347" y="365" fill="#009915"/><rect class="c" x="1347" y="374" fill="#009918"/><rect class="c" x="1347" y="383" fill="#00991c"/><rect class="c" x="1347" y="392" fill="#009921"/><rect class="c" x="1347" y="401" fill="#009925"/><rect class="c" x="1347" y="410" fill="#00992a"/><rect class="c" x="1347" y="419" fill="#00992f"/><rect class="c" x="1347" y="428" fill="#009935"/><rect class="c" x="1347" y="437" fill="#00993b"/><rect class="c" x="1347" y="446" fill="#009942"/><rect class="c" x="1347" y="455" fill="#009949"/><rect class="c" x="1347" y="464" fill="#009952"/><rect class="c" x="1347" y="473" fill="#00995a"/><rect class="c" x="1347" y="482" fill="#009964"/><rect class="c" x="1347" y="491" fill="#00996f"/><rect class="c" x="1347" y="500" fill="#00997c"/><rect class="c" x="1347" y="509" fill="#009989"/><rect class="c" x="1347" y="518" fill="#009999"/><rect class="c" x="1347" y="527" fill="#008999"/><rect class="c" x="1347" y="536" fill="#007b99"/><rect class="c" x="1347" y="545" fill="#006e99"/><rect class="c" x="1347" y="554" fill="#036199"/><rect class="c" x="1347" y="563" fill="#065699"/><rect class="c" x="1347" y="572" fill="#0a4c99"/><rect class="c" x="1347" y="581" fill="#0d4299"/><rect class="c" x="1347" y="590" fill="#0f3999"/><rect class="c" x="1347" y="662" fill="#220699"/><rect class="c" x="1347" y="671" fill="#240199"/><rect class="c" x="1347" y="680" fill="#260099"/><rect class="c" x="1347" y="689" fill="#280099"/><rect class="c" x="1347" y="698" fill="#2a0099"/><rect class="c" x="1347" y="707" fill="#2b0099"/><rect class="c" x="1347" y="716" fill="#2d0099"/><rect class="c" x="1347" y="725" fill="#2f0099"/><rect class="c" x="1347" y="734" fill="#300099"/><rect class="c" x="1356" y="212" fill="#009900"/><rect class="c" x="1356" y="221" fill="#009900"/><rect class="c" x="1356" y="230" fill="#009900"/><rect class="c" x="1356" y="239" fill="#009900"/><rect class="c" x="1356" y="248" fill="#009900"/><rect class="c" x="1356" y="257" fill="#009900"/><rect class="c" x="1356" y="266" fill="#009900"/><rect class="c" x="1356" y="275" fill="#009900"/><rect class="c" x="1356" y="284" fill="#009900"/><rect class="c" x="1356" y="293" fill="#009900"/><rect class="c" x="1356" y="302" fill="#009901"/><rect class="c" x="1356" y="311" fill="#009903"/><rect class="c" x="1356" y="320" fill="#009905"/><rect class="c" x="1356" y="329" fill="#009908"/><rect class="c" x="1356" y="338" fill="#00990a"/><rect class="c" x="1356" y="347" fill="#00990d"/><rect class="c" x="1356" y="356" fill="#009910"/><rect class="c" x="1356" y="365" fill="#009913"/><rect class="c" x="1356" y="374" fill="#009917"/><rect class="c" x="1356" y="383" fill="#00991b"/><rect class="c" x="1356" y="392" fill="#00991f"/><rect class="c" x="1356" y="401" fill="#009924"/><rect class="c" x="1356" y="410" fill="#009928"/><rect class="c" x="1356" y="419" fill="#00992e"/><rect class="c" x="1356" y="428" fill="#009933"/><rect class="c" x="1356" y="437" fill="#00993a"/><rect class="c" x="1356" y="446" fill="#009941"/><rect class="c" x="1356" y="455" fill="#009948"/><rect class="c" x="1356" y="464" fill="#009950"/><rect class="c" x="1356" y="473" fill="#009959"/><rect class="c" x="1356" y="482" fill="#009963"/><rect class="c" x="1356" y="491" fill="#00996f"/><rect class="c" x="1356" y="500" fill="#00997b"/><rect class="c" x="1356" y="509" fill="#009989"/><rect class="c" x="1356" y="518" fill="#009999"/><rect class="c" x="1356" y="527" fill="#038999"/><rect class="c" x="1356" y="536" fill="#067a99"/><rect class="c" x="1356" y="545" fill="#0a6d99"/><rect class="c" x="1356" y="554" fill="#0d6099"/><rect class="c" x="1356" y="563" fill="#105599"/><rect class="c" x="1356" y="662" fill="#2b0499"/><rect class="c" x="1356" y="671" fill="#2d0099"/><rect class="c" x="1356" y="680" fill="#2f0099"/><rect class="c" x="1356" y="689" fill="#300099"/><rect class="c" x="1356" y="698" fill="#320099"/><rect class="c" x="1356" y="707" fill="#340099"/><rect class="c" x="1356" y="716" fill="#350099"/><rect class="c" x="1356" y="725" fill="#360099"/><rect class="c" x="1356" y="734" fill="#380099"/><rect class="c" x="1365" y="221" fill="#009900"/><rect class="c" x="1365" y="230" fill="#009900"/><rect class="c" x="1365" y="239" fill="#009900"/><rect class="c" x="1365" y="248" fill="#009900"/><rect class="c" x="1365" y="257" fill="#009900"/><rect class="c" x="1365" y="266" fill="#009900"/><rect class="c" x="1365" y="275" fill="#009900"/><rect class="c" x="1365" y="284" fill="#009900"/><rect class="c" x="1365" y="293" fill="#009900"/><rect class="c" x="1365" y="302" fill="#009900"/><rect class="c" x="1365" y="311" fill="#009902"/><rect class="c" x="1365" y="320" fill="#009904"/><rect class="c" x="1365" y="329" fill="#009906"/><rect class="c" x="1365" y="338" fill="#009909"/><rect class="c" x="1365" y="347" fill="#00990c"/><rect class="c" x="1365" y="356" fill="#00990f"/><rect class="c" x="1365" y="365" fill="#009912"/><rect class="c" x="1365" y="374" fill="#009916"/><rect class="c" x="1365" y="383" fill="#009919"/><rect class="c" x="1365" y="392" fill="#00991e"/><rect class="c" x="1365" y="401" fill="#009922"/><rect class="c" x="1365" y="410" fill="#009927"/><rect class="c" x="1365" y="419" fill="#00992c"/><rect class="c" x="1365" y="428" fill="#009932"/><rect class="c" x="1365" y="437" fill="#009938"/><rect class="c" x="1365" y="446" fill="#00993f"/><rect class="c" x="1365" y="455" fill="#009947"/><rect class="c" x="1365" y="464" fill="#00994f"/><rect class="c" x="1365" y="473" fill="#009958"/><rect class="c" x="1365" y="482" fill="#009962"/><rect class="c" x="1365" y="491" fill="#00996e"/><rect class="c" x="1365" y="500" fill="#02997a"/><rect class="c" x="1365" y="509" fill="#069989"/><rect class="c" x="1365" y="518" fill="#0a9999"/><rect class="c" x="1365" y="527" fill="#0e8999"/><rect class="c" x="1365" y="536" fill="#127a99"/><rect class="c" x="1365" y="653" fill="#330799"/><rect class="c" x="1365" y="662" fill="#340299"/><rect class="c" x="1365" y="671" fill="#360099"/><rect class="c" x="1365" y="680" fill="#380099"/><rect class="c" x="1365" y="689" fill="#390099"/><rect class="c" x="1365" y="698" fill="#3b0099"/><rect class="c" x="1365" y="707" fill="#3c0099"/><rect class="c" x="1365" y="716" fill="#3d0099"/><rect class="c" x="1365" y="725" fill="#3f0099"/><rect class="c" x="1374" y="230" fill="#009900"/><rect class="c" x="1374" y="239" fill="#009900"/><rect class="c" x="1374" y="248" fill="#009900"/><rect class="c" x="1374" y="257" fill="#009900"/><rect class="c" x="1374" y="266" fill="#009900"/><rect class="c" x="1374" y="275" fill="#009900"/><rect class="c" x="1374" y="284" fill="#009900"/><rect class="c" x="1374" y="293" fill="#009900"/><rect class="c" x="1374" y="302" fill="#009900"/><rect class="c" x="1374" y="311" fill="#009901"/><rect class="c" x="1374" y="320" fill="#009903"/><rect class="c" x="1374" y="329" fill="#009905"/><rect class="c" x="1374" y="338" fill="#009908"/><rect class="c" x="1374" y="347" fill="#00990a"/><rect class="c" x="1374" y="356" fill="#00990d"/><rect class="c" x="1374" y="365" fill="#009911"/><rect class="c" x="1374" y="374" fill="#009914"/><rect class="c" x="1374" y="383" fill="#009918"/><rect class="c" x="1374" y="392" fill="#00991c"/><rect class="c" x="1374" y="401" fill="#009921"/><rect class="c" x="1374" y="410" fill="#009925"/><rect class="c" x="1374" y="419" fill="#00992b"/><rect class="c" x="1374" y="428" fill="#009930"/><rect class="c" x="1374" y="437" fill="#009937"/><rect class="c" x="1374" y="446" fill="#00993e"/><rect class="c" x="1374" y="455" fill="#009945"/><rect class="c" x="1374" y="464" fill="#00994e"/><rect class="c" x="1374" y="473" fill="#019957"/><rect class="c" x="1374" y="482" fill="#049961"/><rect class="c" x="1374" y="491" fill="#08996d"/><rect class="c" x="1374" y="500" fill="#0c997a"/><rect class="c" x="1374" y="509" fill="#129988"/><rect class="c" x="1374" y="653" fill="#3d0599"/><rect class="c" x="1374" y="662" fill="#3e0199"/><rect class="c" x="1374" y="671" fill="#400099"/><rect class="c" x="1374" y="680" fill="#410099"/><rect class="c" x="1374" y="689" fill="#420099"/><rect class="c" x="1374" y="698" fill="#440099"/><rect class="c" x="1374" y="707" fill="#450099"/><rect class="c" x="1374" y="716" fill="#460099"/><rect class="c" x="1374" y="725" fill="#470099"/><rect class="c" x="1383" y="230" fill="#009900"/><rect class="c" x="1383" y="239" fill="#009900"/><rect class="c" x="1383" y="248" fill="#009900"/><rect class="c" x="1383" y="257" fill="#009900"/><rect class="c" x="1383" y="266" fill="#009900"/><rect class="c" x="1383" y="275" fill="#009900"/><rect class="c" x="1383" y="284" fill="#009900"/><rect class="c" x="1383" y="293" fill="#009900"/><rect class="c" x="1383" y="302" fill="#009900"/><rect class="c" x="1383" y="311" fill="#009900"/><rect class="c" x="1383" y="320" fill="#009902"/><rect class="c" x="1383" y="329" fill="#009904"/><rect class="c" x="1383" y="338" fill="#009906"/><rect class="c" x="1383" y="347" fill="#009909"/><rect class="c" x="1383" y="356" fill="#00990c"/><rect class="c" x="1383" y="365" fill="#00990f"/><rect class="c" x="1383" y="374" fill="#009913"/><rect class="c" x="1383" y="383" fill="#009916"/><rect class="c" x="1383" y="392" fill="#00991a"/><rect class="c" x="1383" y="401" fill="#00991f"/><rect class="c" x="1383" y="410" fill="#009924"/><rect class="c" x="1383" y="419" fill="#009929"/><rect class="c" x="1383" y="428" fill="#00992f"/><rect class="c" x="1383" y="437" fill="#009935"/><rect class="c" x="1383" y="446" fill="#00993c"/><rect class="c" x="1383" y="455" fill="#039944"/><rect class="c" x="1383" y="464" fill="#06994c"/><rect class="c" x="1383" y="473" fill="#0a9956"/><rect class="c" x="1383" y="482" fill="#0e9960"/><rect class="c" x="1383" y="491" fill="#13996c"/><rect class="c" x="1383" y="644" fill="#460899"/><rect class="c" x="1383" y="653" fill="#470399"/><rect class="c" x="1383" y="662" fill="#480099"/><rect class="c" x="1383" y="671" fill="#490099"/><rect class="c" x="1383" y="680" fill="#4b0099"/><rect class="c" x="1383" y="689" fill="#4c0099"/><rect class="c" x="1383" y="698" fill="#4d0099"/><rect class="c" x="1383" y="707" fill="#4e0099"/><rect class="c" x="1383" y="716" fill="#4f0099"/><rect class="c" x="1383" y="725" fill="#500099"/><rect class="c" x="1392" y="239" fill="#009900"/><rect class="c" x="1392" y="248" fill="#009900"/><rect class="c" x="1392" y="257" fill="#009900"/><rect class="c" x="1392" y="266" fill="#009900"/><rect class="c" x="1392" y="275" fill="#009900"/><rect class="c" x="1392" y="284" fill="#009900"/><rect class="c" x="1392" y="293" fill="#009900"/><rect class="c" x="1392" y="302" fill="#009900"/><rect class="c" x="1392" y="311" fill="#009900"/><rect class="c" x="1392" y="320" fill="#009901"/><rect class="c" x="1392" y="329" fill="#009903"/><rect class="c" x="1392" y="338" fill="#009905"/><rect class="c" x="1392" y="347" fill="#009908"/><rect class="c" x="1392" y="356" fill="#00990a"/><rect class="c" x="1392" y="365" fill="#00990e"/><rect class="c" x="1392" y="374" fill="#009911"/><rect class="c" x="1392" y="383" fill="#009915"/><rect class="c" x="1392" y="392" fill="#009919"/><rect class="c" x="1392" y="401" fill="#00991d"/><rect class="c" x="1392" y="410" fill="#009922"/><rect class="c" x="1392" y="419" fill="#009928"/><rect class="c" x="1392" y="428" fill="#02992d"/><rect class="c" x="1392" y="437" fill="#049934"/><rect class="c" x="1392" y="446" fill="#08993b"/><rect class="c" x="1392" y="455" fill="#0b9942"/><rect class="c" x="1392" y="464" fill="#0f994b"/><rect class="c" x="1392" y="644" fill="#510699"/><rect class="c" x="1392" y="653" fill="#520199"/><rect class="c" x="1392" y="662" fill="#530099"/><rect class="c" x="1392" y="671" fill="#540099"/><rect class="c" x="1392" y="680" fill="#550099"/><rect class="c" x="1392" y="689" fill="#560099"/><rect class="c" x="1392" y="698" fill="#570099"/><rect class="c" x="1392" y="707" fill="#570099"/><rect class="c" x="1392" y="716" fill="#580099"/><rect class="c" x="1401" y="239" fill="#009900"/><rect class="c" x="1401" y="248" fill="#009900"/><rect class="c" x="1401" y="257" fill="#009900"/><rect class="c" x="1401" y="266" fill="#009900"/><rect class="c" x="1401" y="275" fill="#009900"/><rect class="c" x="1401" y="284" fill="#009900"/><rect class="c" x="1401" y="293" fill="#009900"/><rect class="c" x="1401" y="302" fill="#009900"/><rect class="c" x="1401" y="311" fill="#009900"/><rect class="c" x="1401" y="320" fill="#009900"/><rect class="c" x="1401" y="329" fill="#009901"/><rect class="c" x="1401" y="338" fill="#009904"/><rect class="c" x="1401" y="347" fill="#009906"/><rect class="c" x="1401" y="356" fill="#009909"/><rect class="c" x="1401" y="365" fill="#00990c"/><rect class="c" x="1401" y="374" fill="#00990f"/><rect class="c" x="1401" y="383" fill="#009913"/><rect class="c" x="1401" y="392" fill="#009917"/><rect class="c" x="1401" y="401" fill="#01991c"/><rect class="c" x="1401" y="410" fill="#039921"/><rect class="c" x="1401" y="419" fill="#069926"/><rect class="c" x="1401" y="428" fill="#09992c"/><rect class="c" x="1401" y="437" fill="#0d9932"/><rect class="c" x="1401" y="644" fill="#5c0499"/><rect class="c" x="1401" y="653" fill="#5d0099"/><rect class="c" x="1401" y="662" fill="#5e0099"/><rect class="c" x="1401" y="671" fill="#5f0099"/><rect class="c" x="1401" y="680" fill="#5f0099"/><rect class="c" x="1401" y="689" fill="#600099"/><rect class="c" x="1401" y="698" fill="#610099"/><rect class="c" x="1401" y="707" fill="#610099"/><rect class="c" x="1401" y="716" fill="#620099"/><rect class="c" x="1410" y="248" fill="#009900"/><rect class="c" x="1410" y="257" fill="#009900"/><rect class="c" x="1410" y="266" fill="#009900"/><rect class="c" x="1410" y="275" fill="#009900"/><rect class="c" x="1410" y="284" fill="#009900"/><rect class="c" x="1410" y="293" fill="#009900"/><rect class="c" x="1410" y="302" fill="#009900"/><rect class="c" x="1410" y="311" fill="#009900"/><rect class="c" x="1410" y="320" fill="#009900"/><rect class="c" x="1410" y="329" fill="#009900"/><rect class="c" x="1410" y="338" fill="#009902"/><rect class="c" x="1410" y="347" fill="#009905"/><rect class="c" x="1410" y="356" fill="#009907"/><rect class="c" x="1410" y="365" fill="#00990b"/><rect class="c" x="1410" y="374" fill="#00990e"/><rect class="c" x="1410" y="383" fill="#029912"/><rect class="c" x="1410" y="392" fill="#059916"/><rect class="c" x="1410" y="401" fill="#08991a"/><rect class="c" x="1410" y="410" fill="#0b991f"/><rect class="c" x="1410" y="635" fill="#680799"/><rect class="c" x="1410" y="644" fill="#680299"/><rect class="c" x="1410" y="653" fill="#690099"/><rect class="c" x="1410" y="662" fill="#690099"/><rect class="c" x="1410" y="671" fill="#6a0099"/><rect class="c" x="1410" y="680" fill="#6a0099"/><rect class="c" x="1410" y="689" fill="#6b0099"/><rect class="c" x="1410" y="698" fill="#6b0099"/><rect class="c" x="1410" y="707" fill="#6c0099"/><rect class="c" x="1410" y="716" fill="#6c0099"/><rect class="c" x="1419" y="257" fill="#009900"/><rect class="c" x="1419" y="266" fill="#009900"/><rect class="c" x="1419" y="275" fill="#009900"/><rect class="c" x="1419" y="284" fill="#009900"/><rect class="c" x="1419" y="293" fill="#009900"/><rect class="c" x="1419" y="302" fill="#009900"/><rect class="c" x="1419" y="311" fill="#009900"/><rect class="c" x="1419" y="320" fill="#009900"/><rect class="c" x="1419" y="329" fill="#009900"/><rect class="c" x="1419" y="338" fill="#009901"/><rect class="c" x="1419" y="347" fill="#009903"/><rect class="c" x="1419" y="356" fill="#029906"/><rect class="c" x="1419" y="365" fill="#049909"/><rect class="c" x="1419" y="374" fill="#06990c"/><rect class="c" x="1419" y="383" fill="#099910"/><rect class="c" x="1419" y="392" fill="#0c9914"/><rect class="c" x="1419" y="635" fill="#750599"/><rect class="c" x="1419" y="644" fill="#750099"/><rect class="c" x="1419" y="653" fill="#750099"/><rect class="c" x="1419" y="662" fill="#760099"/><rect class="c" x="1419" y="671" fill="#760099"/><rect class="c" x="1419" y="680" fill="#760099"/><rect class="c" x="1419" y="689" fill="#760099"/><rect class="c" x="1419" y="698" fill="#760099"/><rect class="c" x="1419" y="707" fill="#760099"/><rect class="c" x="1428" y="257" fill="#009900"/><rect class="c" x="1428" y="266" fill="#009900"/><rect class="c" x="1428" y="275" fill="#009900"/><rect class="c" x="1428" y="284" fill="#009900"/><rect class="c" x="1428" y="293" fill="#009900"/><rect class="c" x="1428" y="302" fill="#009900"/><rect class="c" x="1428" y="311" fill="#009900"/><rect class="c" x="1428" y="320" fill="#009900"/><rect class="c" x="1428" y="329" fill="#019900"/><rect class="c" x="1428" y="338" fill="#039900"/><rect class="c" x="1428" y="347" fill="#059902"/><rect class="c" x="1428" y="356" fill="#089904"/><rect class="c" x="1428" y="365" fill="#0a9907"/><rect class="c" x="1428" y="626" fill="#830999"/><rect class="c" x="1428" y="635" fill="#830399"/><rect class="c" x="1428" y="644" fill="#830099"/><rect class="c" x="1428" y="653" fill="#820099"/><rect class="c" x="1428" y="662" fill="#820099"/><rect class="c" x="1428" y="671" fill="#820099"/><rect class="c" x="1428" y="680" fill="#820099"/><rect class="c" x="1428" y="689" fill="#820099"/><rect class="c" x="1428" y="698" fill="#810099"/><rect class="c" x="1428" y="707" fill="#810099"/><rect class="c" x="1437" y="266" fill="#009900"/><rect class="c" x="1437" y="275" fill="#009900"/><rect class="c" x="1437" y="284" fill="#009900"/><rect class="c" x="1437" y="293" fill="#009900"/><rect class="c" x="1437" y="302" fill="#019900"/><rect class="c" x="1437" y="311" fill="#029900"/><rect class="c" x="1437" y="320" fill="#049900"/><rect class="c" x="1437" y="329" fill="#069900"/><rect class="c" x="1437" y="338" fill="#099900"/><rect class="c" x="1437" y="347" fill="#0b9901"/><rect class="c" x="1437" y="356" fill="#0e9903"/><rect class="c" x="1437" y="626" fill="#920799"/><rect class="c" x="1437" y="635" fill="#910199"/><rect class="c" x="1437" y="644" fill="#910099"/><rect class="c" x="1437" y="653" fill="#900099"/><rect class="c" x="1437" y="662" fill="#8f0099"/><rect class="c" x="1437" y="671" fill="#8f0099"/><rect class="c" x="1437" y="680" fill="#8e0099"/><rect class="c" x="1437" y="689" fill="#8e0099"/><rect class="c" x="1437" y="698" fill="#8d0099"/><rect class="c" x="1437" y="707" fill="#8d0099"/><rect class="c" x="1446" y="275" fill="#009900"/><rect class="c" x="1446" y="284" fill="#029900"/><rect class="c" x="1446" y="293" fill="#039900"/><rect class="c" x="1446" y="302" fill="#059900"/><rect class="c" x="1446" y="311" fill="#079900"/><rect class="c" x="1446" y="320" fill="#0a9900"/><rect class="c" x="1446" y="329" fill="#0c9900"/><rect class="c" x="1446" y="338" fill="#0f9900"/><rect class="c" x="1446" y="347" fill="#129900"/><rect class="c" x="1446" y="356" fill="#159902"/><rect class="c" x="1446" y="365" fill="#199904"/><rect class="c" x="1446" y="617" fill="#990a90"/><rect class="c" x="1446" y="626" fill="#990491"/><rect class="c" x="1446" y="635" fill="#990092"/><rect class="c" x="1446" y="644" fill="#990093"/><rect class="c" x="1446" y="653" fill="#990094"/><rect class="c" x="1446" y="662" fill="#990095"/><rect class="c" x="1446" y="671" fill="#990096"/><rect class="c" x="1446" y="680" fill="#990097"/><rect class="c" x="1446" y="689" fill="#990098"/><rect class="c" x="1446" y="698" fill="#990098"/><rect class="c" x="1455" y="284" fill="#069900"/><rect class="c" x="1455" y="293" fill="#099900"/><rect class="c" x="1455" y="302" fill="#0b9900"/><rect class="c" x="1455" y="311" fill="#0d9900"/><rect class="c" x="1455" y="320" fill="#109900"/><rect class="c" x="1455" y="329" fill="#139900"/><rect class="c" x="1455" y="338" fill="#169900"/><rect class="c" x="1455" y="347" fill="#199900"/><rect class="c" x="1455" y="356" fill="#1d9900"/><rect class="c" x="1455" y="365" fill="#219903"/><rect class="c" x="1455" y="617" fill="#990782"/><rect class="c" x="1455" y="626" fill="#990283"/><rect class="c" x="1455" y="635" fill="#990085"/><rect class="c" x="1455" y="644" fill="#990086"/><rect class="c" x="1455" y="653" fill="#990087"/><rect class="c" x="1455" y="662" fill="#990088"/><rect class="c" x="1455" y="671" fill="#99008a"/><rect class="c" x="1455" y="680" fill="#99008b"/><rect class="c" x="1455" y="689" fill="#99008c"/><rect class="c" x="1455" y="698" fill="#99008d"/><rect class="c" x="1464" y="284" fill="#0c9900"/><rect class="c" x="1464" y="293" fill="#0e9900"/><rect class="c" x="1464" y="302" fill="#119900"/><rect class="c" x="1464" y="311" fill="#139900"/><rect class="c" x="1464" y="320" fill="#169900"/><rect class="c" x="1464" y="329" fill="#1a9900"/><rect class="c" x="1464" y="338" fill="#1d9900"/><rect class="c" x="1464" y="347" fill="#219900"/><rect class="c" x="1464" y="356" fill="#259900"/><rect class="c" x="1464" y="365" fill="#299901"/><rect class="c" x="1464" y="374" fill="#2e9904"/><rect class="c" x="1464" y="617" fill="#990476"/><rect class="c" x="1464" y="626" fill="#990078"/><rect class="c" x="1464" y="635" fill="#990079"/><rect class="c" x="1464" y="644" fill="#99007b"/><rect class="c" x="1464" y="653" fill="#99007c"/><rect class="c" x="1464" y="662" fill="#99007d"/><rect class="c" x="1464" y="671" fill="#99007f"/><rect class="c" x="1464" y="680" fill="#990080"/><rect class="c" x="1464" y="689" fill="#990081"/><rect class="c" x="1473" y="293" fill="#149900"/><rect class="c" x="1473" y="302" fill="#179900"/><rect class="c" x="1473" y="311" fill="#1a9900"/><rect class="c" x="1473" y="320" fill="#1d9900"/><rect class="c" x="1473" y="329" fill="#219900"/><rect class="c" x="1473" y="338" fill="#259900"/><rect class="c" x="1473" y="347" fill="#299900"/><rect class="c" x="1473" y="356" fill="#2d9900"/><rect class="c" x="1473" y="365" fill="#329900"/><rect class="c" x="1473" y="374" fill="#379902"/><rect class="c" x="1473" y="383" fill="#3d9905"/><rect class="c" x="1473" y="608" fill="#99076a"/><rect class="c" x="1473" y="617" fill="#99026c"/><rect class="c" x="1473" y="626" fill="#99006e"/><rect class="c" x="1473" y="635" fill="#99006f"/><rect class="c" x="1473" y="644" fill="#990071"/><rect class="c" x="1473" y="653" fill="#990072"/><rect class="c" x="1473" y="662" fill="#990074"/><rect class="c" x="1473" y="671" fill="#990075"/><rect class="c" x="1473" y="680" fill="#990076"/><rect class="c" x="1473" y="689" fill="#990078"/><rect class="c" x="1482" y="302" fill="#1d9900"/><rect class="c" x="1482" y="311" fill="#219900"/><rect class="c" x="1482" y="320" fill="#249900"/><rect class="c" x="1482" y="329" fill="#289900"/><rect class="c" x="1482" y="338" fill="#2c9900"/><rect class="c" x="1482" y="347" fill="#319900"/><rect class="c" x="1482" y="356" fill="#369900"/><rect class="c" x="1482" y="365" fill="#3b9900"/><rect class="c" x="1482" y="374" fill="#419901"/><rect class="c" x="1482" y="383" fill="#479904"/><rect class="c" x="1482" y="608" fill="#990561"/><rect class="c" x="1482" y="617" fill="#990163"/><rect class="c" x="1482" y="626" fill="#990065"/><rect class="c" x="1482" y="635" fill="#990066"/><rect class="c" x="1482" y="644" fill="#990068"/><rect class="c" x="1482" y="653" fill="#99006a"/><rect class="c" x="1482" y="662" fill="#99006b"/><rect class="c" x="1482" y="671" fill="#99006c"/><rect class="c" x="1482" y="680" fill="#99006e"/><rect class="c" x="1482" y="689" fill="#99006f"/><rect class="c" x="1491" y="302" fill="#249900"/><rect class="c" x="1491" y="311" fill="#289900"/><rect class="c" x="1491" y="320" fill="#2c9900"/><rect class="c" x="1491" y="329" fill="#309900"/><rect class="c" x="1491" y="338" fill="#359900"/><rect class="c" x="1491" y="347" fill="#3a9900"/><rect class="c" x="1491" y="356" fill="#3f9900"/><rect class="c" x="1491" y="365" fill="#459900"/><rect class="c" x="1491" y="374" fill="#4b9900"/><rect class="c" x="1491" y="383" fill="#529902"/><rect class="c" x="1491" y="392" fill="#599905"/><rect class="c" x="1491" y="599" fill="#990757"/><rect class="c" x="1491" y="608" fill="#990359"/><rect class="c" x="1491" y="617" fill="#99005b"/><rect class="c" x="1491" y="626" fill="#99005d"/><rect class="c" x="1491" y="635" fill="#99005e"/><rect class="c" x="1491" y="644" fill="#990060"/><rect class="c" x="1491" y="653" fill="#990062"/><rect class="c" x="1491" y="662" fill="#990063"/><rect class="c" x="1491" y="671" fill="#990065"/><rect class="c" x="1491" y="680" fill="#990066"/><rect class="c" x="1500" y="311" fill="#309900"/><rect class="c" x="1500" y="320" fill="#349900"/><rect class="c" x="1500" y="329" fill="#389900"/><rect class="c" x="1500" y="338" fill="#3d9900"/><rect class="c" x="1500" y="347" fill="#439900"/><rect class="c" x="1500" y="356" fill="#499900"/><rect class="c" x="1500" y="365" fill="#4f9900"/><rect class="c" x="1500" y="374" fill="#569900"/><rect class="c" x="1500" y="383" fill="#5d9900"/><rect class="c" x="1500" y="392" fill="#659903"/><rect class="c" x="1500" y="599" fill="#990550"/><rect class="c" x="1500" y="608" fill="#990152"/><rect class="c" x="1500" y="617" fill="#990054"/><rect class="c" x="1500" y="626" fill="#990055"/><rect class="c" x="1500" y="635" fill="#990057"/><rect class="c" x="1500" y="644" fill="#990059"/><rect class="c" x="1500" y="653" fill="#99005b"/><rect class="c" x="1500" y="662" fill="#99005c"/><rect class="c" x="1500" y="671" fill="#99005e"/><rect class="c" x="1500" y="680" fill="#99005f"/><rect class="c" x="1509" y="320" fill="#3c9900"/><rect class="c" x="1509" y="329" fill="#419900"/><rect class="c" x="1509" y="338" fill="#469900"/><rect class="c" x="1509" y="347" fill="#4c9900"/><rect class="c" x="1509" y="356" fill="#539900"/><rect class="c" x="1509" y="365" fill="#599900"/><rect class="c" x="1509" y="374" fill="#619900"/><rect class="c" x="1509" y="383" fill="#699900"/><rect class="c" x="1509" y="392" fill="#729901"/><rect class="c" x="1509" y="401" fill="#7b9905"/><rect class="c" x="1509" y="590" fill="#990747"/><rect class="c" x="1509" y="599" fill="#990349"/><rect class="c" x="1509" y="608" fill="#99004b"/><rect class="c" x="1509" y="617" fill="#99004d"/><rect class="c" x="1509" y="626" fill="#99004f"/><rect class="c" x="1509" y="635" fill="#990051"/><rect class="c" x="1509" y="644" fill="#990053"/><rect class="c" x="1509" y="653" fill="#990054"/><rect class="c" x="1509" y="662" fill="#990056"/><rect class="c" x="1509" y="671" fill="#990057"/><rect class="c" x="1509" y="680" fill="#990059"/><rect class="c" x="1518" y="329" fill="#4a9900"/><rect class="c" x="1518" y="338" fill="#509900"/><rect class="c" x="1518" y="347" fill="#569900"/><rect class="c" x="1518" y="356" fill="#5d9900"/><rect class="c" x="1518" y="365" fill="#649900"/><rect class="c" x="1518" y="374" fill="#6c9900"/><rect class="c" x="1518" y="383" fill="#759900"/><rect class="c" x="1518" y="392" fill="#7f9900"/><rect class="c" x="1518" y="401" fill="#899903"/><rect class="c" x="1518" y="410" fill="#959907"/><rect class="c" x="1518" y="590" fill="#990542"/><rect class="c" x="1518" y="599" fill="#990144"/><rect class="c" x="1518" y="608" fill="#990045"/><rect class="c" x="1518" y="617" fill="#990047"/><rect class="c" x="1518" y="626" fill="#990049"/><rect class="c" x="1518" y="635" fill="#99004b"/><rect class="c" x="1518" y="644" fill="#99004d"/><rect class="c" x="1518" y="653" fill="#99004e"/><rect class="c" x="1518" y="662" fill="#990050"/><rect class="c" x="1518" y="671" fill="#990052"/><rect class="c" x="1527" y="329" fill="#539900"/><rect class="c" x="1527" y="338" fill="#5a9900"/><rect class="c" x="1527" y="347" fill="#619900"/><rect class="c" x="1527" y="356" fill="#689900"/><rect class="c" x="1527" y="365" fill="#709900"/><rect class="c" x="1527" y="374" fill="#799900"/><rect class="c" x="1527" y="383" fill="#829900"/><rect class="c" x="1527" y="392" fill="#8d9900"/><rect class="c" x="1527" y="401" fill="#989901"/><rect class="c" x="1527" y="410" fill="#998e04"/><rect class="c" x="1527" y="590" fill="#99033c"/><rect class="c" x="1527" y="599" fill="#99003e"/><rect class="c" x="1527" y="608" fill="#990040"/><rect class="c" x="1527" y="617" fill="#990042"/><rect class="c" x="1527" y="626" fill="#990044"/><rect class="c" x="1527" y="635" fill="#990046"/><rect class="c" x="1527" y="644" fill="#990047"/><rect class="c" x="1527" y="653" fill="#990049"/><rect class="c" x="1527" y="662" fill="#99004b"/><rect class="c" x="1527" y="671" fill="#99004c"/><rect class="c" x="1536" y="338" fill="#649900"/><rect class="c" x="1536" y="347" fill="#6b9900"/><rect class="c" x="1536" y="356" fill="#739900"/><rect class="c" x="1536" y="365" fill="#7c9900"/><rect class="c" x="1536" y="374" fill="#859900"/><rect class="c" x="1536" y="383" fill="#909900"/><rect class="c" x="1536" y="392" fill="#999700"/><rect class="c" x="1536" y="401" fill="#998c00"/><rect class="c" x="1536" y="410" fill="#998102"/><rect class="c" x="1536" y="419" fill="#997705"/><rect class="c" x="1536" y="581" fill="#990536"/><rect class="c" x="1536" y="590" fill="#990238"/><rect class="c" x="1536" y="599" fill="#99003a"/><rect class="c" x="1536" y="608" fill="#99003b"/><rect class="c" x="1536" y="617" fill="#99003d"/><rect class="c" x="1536" y="626" fill="#99003f"/><rect class="c" x="1536" y="635" fill="#990041"/><rect class="c" x="1536" y="644" fill="#990043"/><rect class="c" x="1536" y="653" fill="#990044"/><rect class="c" x="1536" y="662" fill="#990046"/><rect class="c" x="1536" y="671" fill="#990047"/><rect class="c" x="1545" y="347" fill="#779900"/><rect class="c" x="1545" y="356" fill="#7f9900"/><rect class="c" x="1545" y="365" fill="#889900"/><rect class="c" x="1545" y="374" fill="#939900"/><rect class="c" x="1545" y="383" fill="#999400"/><rect class="c" x="1545" y="392" fill="#998a00"/><rect class="c" x="1545" y="401" fill="#997f00"/><rect class="c" x="1545" y="410" fill="#997600"/><rect class="c" x="1545" y="419" fill="#996d03"/><rect class="c" x="1545" y="581" fill="#990431"/><rect class="c" x="1545" y="590" fill="#990133"/><rect class="c" x="1545" y="599" fill="#990035"/><rect class="c" x="1545" y="608" fill="#990037"/><rect class="c" x="1545" y="617" fill="#990039"/><rect class="c" x="1545" y="626" fill="#99003b"/><rect class="c" x="1545" y="635" fill="#99003c"/><rect class="c" x="1545" y="644" fill="#99003e"/><rect class="c" x="1545" y="653" fill="#990040"/><rect class="c" x="1545" y="662" fill="#990041"/><rect class="c" x="1554" y="356" fill="#8b9900"/><rect class="c" x="1554" y="365" fill="#969900"/><rect class="c" x="1554" y="374" fill="#999200"/><rect class="c" x="1554" y="383" fill="#998800"/><rect class="c" x="1554" y="392" fill="#997e00"/><rect class="c" x="1554" y="401" fill="#997500"/><rect class="c" x="1554" y="410" fill="#996c00"/><rect class="c" x="1554" y="419" fill="#996401"/><rect class="c" x="1554" y="428" fill="#995c04"/><rect class="c" x="1554" y="572" fill="#99052b"/><rect class="c" x="1554" y="581" fill="#99022d"/><rect class="c" x="1554" y="590" fill="#99002f"/><rect class="c" x="1554" y="599" fill="#990031"/><rect class="c" x="1554" y="608" fill="#990033"/><rect class="c" x="1554" y="617" fill="#990035"/><rect class="c" x="1554" y="626" fill="#990037"/><rect class="c" x="1554" y="635" fill="#990038"/><rect class="c" x="1554" y="644" fill="#99003a"/><rect class="c" x="1554" y="653" fill="#99003c"/><rect class="c" x="1554" y="662" fill="#99003d"/><rect class="c" x="1563" y="356" fill="#989900"/><rect class="c" x="1563" y="365" fill="#998f00"/><rect class="c" x="1563" y="374" fill="#998600"/><rect class="c" x="1563" y="383" fill="#997c00"/><rect class="c" x="1563" y="392" fill="#997300"/><rect class="c" x="1563" y="401" fill="#996b00"/><rect class="c" x="1563" y="410" fill="#996300"/><rect class="c" x="1563" y="419" fill="#995b00"/><rect class="c" x="1563" y="428" fill="#995402"/><rect class="c" x="1563" y="437" fill="#994d05"/><rect class="c" x="1563" y="572" fill="#990428"/><rect class="c" x="1563" y="581" fill="#99012a"/><rect class="c" x="1563" y="590" fill="#99002c"/><rect class="c" x="1563" y="599" fill="#99002e"/><rect class="c" x="1563" y="608" fill="#99002f"/><rect class="c" x="1563" y="617" fill="#990031"/><rect class="c" x="1563" y="626" fill="#990033"/><rect class="c" x="1563" y="635" fill="#990035"/><rect class="c" x="1563" y="644" fill="#990036"/><rect class="c" x="1563" y="653" fill="#990038"/><rect class="c" x="1572" y="365" fill="#998400"/><rect class="c" x="1572" y="374" fill="#997b00"/><rect class="c" x="1572" y="383" fill="#997200"/><rect class="c" x="1572" y="392" fill="#996a00"/><rect class="c" x="1572" y="401" fill="#996300"/><rect class="c" x="1572" y="410" fill="#995b00"/><rect class="c" x="1572" y="419" fill="#995400"/><rect class="c" x="1572" y="428" fill="#994d01"/><rect class="c" x="1572" y="437" fill="#994703"/><rect class="c" x="1572" y="572" fill="#990225"/><rect class="c" x="1572" y="581" fill="#990027"/><rect class="c" x="1572" y="590" fill="#990028"/><rect class="c" x="1572" y="599" fill="#99002a"/><rect class="c" x="1572" y="608" fill="#99002c"/><rect class="c" x="1572" y="617" fill="#99002e"/><rect class="c" x="1572" y="626" fill="#990030"/><rect class="c" x="1572" y="635" fill="#990031"/><rect class="c" x="1572" y="644" fill="#990033"/><rect class="c" x="1572" y="653" fill="#990034"/><rect class="c" x="1581" y="374" fill="#997100"/><rect class="c" x="1581" y="383" fill="#996a00"/><rect class="c" x="1581" y="392" fill="#996200"/><rect class="c" x="1581" y="401" fill="#995b00"/><rect class="c" x="1581" y="410" fill="#995400"/><rect class="c" x="1581" y="419" fill="#994e00"/><rect class="c" x="1581" y="428" fill="#994700"/><rect class="c" x="1581" y="437" fill="#994101"/><rect class="c" x="1581" y="446" fill="#993c04"/><rect class="c" x="1581" y="563" fill="#990420"/><rect class="c" x="1581" y="572" fill="#990122"/><rect class="c" x="1581" y="581" fill="#990024"/><rect class="c" x="1581" y="590" fill="#990025"/><rect class="c" x="1581" y="599" fill="#990027"/><rect class="c" x="1581" y="608" fill="#990029"/><rect class="c" x="1581" y="617" fill="#99002b"/><rect class="c" x="1581" y="626" fill="#99002c"/><rect class="c" x="1581" y="635" fill="#99002e"/><rect class="c" x="1581" y="644" fill="#990030"/><rect class="c" x="1581" y="653" fill="#990031"/><rect class="c" x="1590" y="383" fill="#996200"/><rect class="c" x="1590" y="392" fill="#995b00"/><rect class="c" x="1590" y="401" fill="#995400"/><rect class="c" x="1590" y="410" fill="#994e00"/><rect class="c" x="1590" y="419" fill="#994800"/><rect class="c" x="1590" y="428" fill="#994200"/><rect class="c" x="1590" y="437" fill="#993c00"/><rect class="c" x="1590" y="446" fill="#993702"/><rect class="c" x="1590" y="455" fill="#993204"/><rect class="c" x="1590" y="563" fill="#99031d"/><rect class="c" x="1590" y="572" fill="#99001f"/><rect class="c" x="1590" y="581" fill="#990021"/><rect class="c" x="1590" y="590" fill="#990023"/><rect class="c" x="1590" y="599" fill="#990024"/><rect class="c" x="1590" y="608" fill="#990026"/><rect class="c" x="1590" y="617" fill="#990028"/><rect class="c" x="1590" y="626" fill="#990029"/><rect class="c" x="1590" y="635" fill="#99002b"/><rect class="c" x="1590" y="644" fill="#99002d"/><rect class="c" x="1599" y="383" fill="#995b00"/><rect class="c" x="1599" y="392" fill="#995400"/><rect class="c" x="1599" y="401" fill="#994e00"/><rect class="c" x="1599" y="410" fill="#994800"/><rect class="c" x="1599" y="419" fill="#994200"/><rect class="c" x="1599" y="428" fill="#993d00"/><rect class="c" x="1599" y="437" fill="#993800"/><rect class="c" x="1599" y="446" fill="#993301"/><rect class="c" x="1599" y="455" fill="#992e03"/><rect class="c" x="1599" y="554" fill="#990419"/><rect class="c" x="1599" y="563" fill="#99021b"/><rect class="c" x="1599" y="572" fill="#99001d"/><rect class="c" x="1599" y="581" fill="#99001e"/><rect class="c" x="1599" y="590" fill="#990020"/><rect class="c" x="1599" y="599" fill="#990022"/><rect class="c" x="1599" y="608" fill="#990023"/><rect class="c" x="1599" y="617" fill="#990025"/><rect class="c" x="1599" y="626" fill="#990027"/><rect class="c" x="1599" y="635" fill="#990028"/><rect class="c" x="1599" y="644" fill="#99002a"/><rect class="c" x="1608" y="392" fill="#994e00"/><rect class="c" x="1608" y="401" fill="#994800"/><rect class="c" x="1608" y="410" fill="#994300"/><rect class="c" x="1608" y="419" fill="#993e00"/><rect class="c" x="1608" y="428" fill="#993800"/><rect class="c" x="1608" y="437" fill="#993400"/><rect class="c" x="1608" y="446" fill="#992f00"/><rect class="c" x="1608" y="455" fill="#992a01"/><rect class="c" x="1608" y="464" fill="#992603"/><rect class="c" x="1608" y="554" fill="#990317"/><rect class="c" x="1608" y="563" fill="#990118"/><rect class="c" x="1608" y="572" fill="#99001a"/><rect class="c" x="1608" y="581" fill="#99001c"/><rect class="c" x="1608" y="590" fill="#99001e"/><rect class="c" x="1608" y="599" fill="#99001f"/><rect class="c" x="1608" y="608" fill="#990021"/><rect class="c" x="1608" y="617" fill="#990023"/><rect class="c" x="1608" y="626" fill="#990024"/><rect class="c" x="1608" y="635" fill="#990026"/><rect class="c" x="1608" y="644" fill="#990027"/><rect class="c" x="1617" y="401" fill="#994300"/><rect class="c" x="1617" y="410" fill="#993e00"/><rect class="c" x="1617" y="419" fill="#993900"/><rect class="c" x="1617" y="428" fill="#993400"/><rect class="c" x="1617" y="437" fill="#993000"/><rect class="c" x="1617" y="446" fill="#992b00"/><rect class="c" x="1617" y="455" fill="#992700"/><rect class="c" x="1617" y="464" fill="#992302"/><rect class="c" x="1617" y="545" fill="#990413"/><rect class="c" x="1617" y="554" fill="#990215"/><rect class="c" x="1617" y="563" fill="#990016"/><rect class="c" x="1617" y="572" fill="#990018"/><rect class="c" x="1617" y="581" fill="#99001a"/><rect class="c" x="1617" y="590" fill="#99001b"/><rect class="c" x="1617" y="599" fill="#99001d"/><rect class="c" x="1617" y="608" fill="#99001f"/><rect class="c" x="1617" y="617" fill="#990020"/><rect class="c" x="1617" y="626" fill="#990022"/><rect class="c" x="1617" y="635" fill="#990023"/><rect class="c" x="1626" y="410" fill="#993a00"/><rect class="c" x="1626" y="419" fill="#993500"/><rect class="c" x="1626" y="428" fill="#993100"/><rect class="c" x="1626" y="437" fill="#992c00"/><rect class="c" x="1626" y="446" fill="#992800"/><rect class="c" x="1626" y="455" fill="#992400"/><rect class="c" x="1626" y="464" fill="#992001"/><rect class="c" x="1626" y="473" fill="#991c03"/><rect class="c" x="1626" y="545" fill="#990311"/><rect class="c" x="1626" y="554" fill="#990113"/><rect class="c" x="1626" y="563" fill="#990014"/><rect class="c" x="1626" y="572" fill="#990016"/><rect class="c" x="1626" y="581" fill="#990018"/><rect class="c" x="1626" y="590" fill="#990019"/><rect class="c" x="1626" y="599" fill="#99001b"/><rect class="c" x="1626" y="608" fill="#99001c"/><rect class="c" x="1626" y="617" fill="#99001e"/><rect class="c" x="1626" y="626" fill="#990020"/><rect class="c" x="1626" y="635" fill="#990021"/><rect class="c" x="1635" y="410" fill="#993600"/><rect class="c" x="1635" y="419" fill="#993100"/><rect class="c" x="1635" y="428" fill="#992d00"/><rect class="c" x="1635" y="437" fill="#992900"/><rect class="c" x="1635" y="446" fill="#992500"/><rect class="c" x="1635" y="455" fill="#992100"/><rect class="c" x="1635" y="464" fill="#991d00"/><rect class="c" x="1635" y="473" fill="#991a02"/><rect class="c" x="1635" y="482" fill="#991603"/><rect class="c" x="1635" y="545" fill="#99020f"/><rect class="c" x="1635" y="554" fill="#990011"/><rect class="c" x="1635" y="563" fill="#990013"/><rect class="c" x="1635" y="572" fill="#990014"/><rect class="c" x="1635" y="581" fill="#990016"/><rect class="c" x="1635" y="590" fill="#990017"/><rect class="c" x="1635" y="599" fill="#990019"/><rect class="c" x="1635" y="608" fill="#99001a"/><rect class="c" x="1635" y="617" fill="#99001c"/><rect class="c" x="1635" y="626" fill="#99001d"/><rect class="c" x="1635" y="635" fill="#99001f"/><rect class="c" x="1644" y="419" fill="#992e00"/><rect class="c" x="1644" y="428" fill="#992a00"/><rect class="c" x="1644" y="437" fill="#992600"/><rect class="c" x="1644" y="446" fill="#992200"/><rect class="c" x="1644" y="455" fill="#991e00"/><rect class="c" x="1644" y="464" fill="#991b00"/><rect class="c" x="1644" y="473" fill="#991801"/><rect class="c" x="1644" y="482" fill="#991402"/><rect class="c" x="1644" y="536" fill="#99030c"/><rect class="c" x="1644" y="545" fill="#99010e"/><rect class="c" x="1644" y="554" fill="#99000f"/><rect class="c" x="1644" y="563" fill="#990011"/><rect class="c" x="1644" y="572" fill="#990012"/><rect class="c" x="1644" y="581" fill="#990014"/><rect class="c" x="1644" y="590" fill="#990016"/><rect class="c" x="1644" y="599" fill="#990017"/><rect class="c" x="1644" y="608" fill="#990019"/><rect class="c" x="1644" y="617" fill="#99001a"/><rect class="c" x="1644" y="626" fill="#99001c"/><rect class="c" x="1653" y="428" fill="#992700"/><rect class="c" x="1653" y="437" fill="#992300"/><rect class="c" x="1653" y="446" fill="#992000"/><rect class="c" x="1653" y="455" fill="#991c00"/><rect class="c" x="1653" y="464" fill="#991900"/><rect class="c" x="1653" y="473" fill="#991500"/><rect class="c" x="1653" y="482" fill="#991201"/><rect class="c" x="1653" y="491" fill="#990f03"/><rect class="c" x="1653" y="536" fill="#99020b"/><rect class="c" x="1653" y="545" fill="#99000c"/><rect class="c" x="1653" y="554" fill="#99000e"/><rect class="c" x="1653" y="563" fill="#99000f"/><rect class="c" x="1653" y="572" fill="#990011"/><rect class="c" x="1653" y="581" fill="#990012"/><rect class="c" x="1653" y="590" fill="#990014"/><rect class="c" x="1653" y="599" fill="#990015"/><rect class="c" x="1653" y="608" fill="#990017"/><rect class="c" x="1653" y="617" fill="#990018"/><rect class="c" x="1653" y="626" fill="#99001a"/><rect class="c" x="1662" y="437" fill="#992100"/><rect class="c" x="1662" y="446" fill="#991d00"/><rect class="c" x="1662" y="455" fill="#991a00"/><rect class="c" x="1662" y="464" fill="#991700"/><rect class="c" x="1662" y="473" fill="#991400"/><rect class="c" x="1662" y="482" fill="#991100"/><rect class="c" x="1662" y="491" fill="#990e02"/><rect class="c" x="1662" y="527" fill="#990408"/><rect class="c" x="1662" y="536" fill="#990109"/><rect class="c" x="1662" y="545" fill="#99000b"/><rect class="c" x="1662" y="554" fill="#99000c"/><rect class="c" x="1662" y="563" fill="#99000e"/><rect class="c" x="1662" y="572" fill="#99000f"/><rect class="c" x="1662" y="581" fill="#990011"/><rect class="c" x="1662" y="590" fill="#990012"/><rect class="c" x="1662" y="599" fill="#990014"/><rect class="c" x="1662" y="608" fill="#990015"/><rect class="c" x="1662" y="617" fill="#990017"/><rect class="c" x="1671" y="446" fill="#991b00"/><rect class="c" x="1671" y="455" fill="#991800"/><rect class="c" x="1671" y="464" fill="#991500"/><rect class="c" x="1671" y="473" fill="#991200"/><rect class="c" x="1671" y="482" fill="#990f00"/><rect class="c" x="1671" y="491" fill="#990c01"/><rect class="c" x="1671" y="500" fill="#990a02"/><rect class="c" x="1671" y="527" fill="#990307"/><rect class="c" x="1671" y="536" fill="#990108"/><rect class="c" x="1671" y="545" fill="#990009"/><rect class="c" x="1671" y="554" fill="#99000b"/><rect class="c" x="1671" y="563" fill="#99000c"/><rect class="c" x="1671" y="572" fill="#99000e"/><rect class="c" x="1671" y="581" fill="#99000f"/><rect class="c" x="1671" y="590" fill="#990011"/><rect class="c" x="1671" y="599" fill="#990012"/><rect class="c" x="1671" y="608" fill="#990014"/><rect class="c" x="1671" y="617" fill="#990015"/><rect class="c" x="1680" y="446" fill="#991900"/><rect class="c" x="1680" y="455" fill="#991600"/><rect class="c" x="1680" y="464" fill="#991300"/><rect class="c" x="1680" y="473" fill="#991000"/><rect class="c" x="1680" y="482" fill="#990d00"/><rect class="c" x="1680" y="491" fill="#990b00"/><rect class="c" x="1680" y="500" fill="#990801"/><rect class="c" x="1680" y="509" fill="#990603"/><rect class="c" x="1680" y="527" fill="#990205"/><rect class="c" x="1680" y="536" fill="#990007"/><rect class="c" x="1680" y="545" fill="#990008"/><rect class="c" x="1680" y="554" fill="#99000a"/><rect class="c" x="1680" y="563" fill="#99000b"/><rect class="c" x="1680" y="572" fill="#99000d"/><rect class="c" x="1680" y="581" fill="#99000e"/><rect class="c" x="1680" y="590" fill="#99000f"/><rect class="c" x="1680" y="599" fill="#990011"/><rect class="c" x="1680" y="608" fill="#990012"/><rect class="c" x="1680" y="617" fill="#990013"/><rect class="c" x="1689" y="455" fill="#991400"/><rect class="c" x="1689" y="464" fill="#991100"/><rect class="c" x="1689" y="473" fill="#990f00"/><rect class="c" x="1689" y="482" fill="#990c00"/><rect class="c" x="1689" y="491" fill="#990a00"/><rect class="c" x="1689" y="500" fill="#990700"/><rect class="c" x="1689" y="509" fill="#990502"/><rect class="c" x="1689" y="518" fill="#990303"/><rect class="c" x="1689" y="527" fill="#990104"/><rect class="c" x="1689" y="536" fill="#990006"/><rect class="c" x="1689" y="545" fill="#990007"/><rect class="c" x="1689" y="554" fill="#990009"/><rect class="c" x="1689" y="563" fill="#99000a"/><rect class="c" x="1689" y="572" fill="#99000b"/><rect class="c" x="1689" y="581" fill="#99000d"/><rect class="c" x="1689" y="590" fill="#99000e"/><rect class="c" x="1689" y="599" fill="#99000f"/><rect class="c" x="1689" y="608" fill="#990011"/><rect class="c" x="1698" y="464" fill="#991000"/><rect class="c" x="1698" y="473" fill="#990d00"/><rect class="c" x="1698" y="482" fill="#990b00"/><rect class="c" x="1698" y="491" fill="#990800"/><rect class="c" x="1698" y="500" fill="#990600"/><rect class="c" x="1698" y="509" fill="#990401"/><rect class="c" x="1698" y="518" fill="#990202"/><rect class="c" x="1698" y="527" fill="#990003"/><rect class="c" x="1698" y="536" fill="#990005"/><rect class="c" x="1698" y="545" fill="#990006"/><rect class="c" x="1698" y="554" fill="#990007"/><rect class="c" x="1698" y="563" fill="#990009"/><rect class="c" x="1698" y="572" fill="#99000a"/><rect class="c" x="1698" y="581" fill="#99000b"/><rect class="c" x="1698" y="590" fill="#99000d"/><rect class="c" x="1698" y="599" fill="#99000e"/><rect class="c" x="1698" y="608" fill="#99000f"/><rect class="c" x="1707" y="473" fill="#990c00"/><rect class="c" x="1707" y="482" fill="#990900"/><rect class="c" x="1707" y="491" fill="#990700"/><rect class="c" x="1707" y="500" fill="#990500"/><rect class="c" x="1707" y="509" fill="#990300"/><rect class="c" x="1707" y="518" fill="#990101"/><rect class="c" x="1707" y="527" fill="#990003"/><rect class="c" x="1707" y="536" fill="#990004"/><rect class="c" x="1707" y="545" fill="#990005"/><rect class="c" x="1707" y="554" fill="#990006"/><rect class="c" x="1707" y="563" fill="#990008"/><rect class="c" x="1707" y="572" fill="#990009"/><rect class="c" x="1707" y="581" fill="#99000a"/><rect class="c" x="1707" y="590" fill="#99000c"/><rect class="c" x="1707" y="599" fill="#99000d"/><rect class="c" x="1707" y="608" fill="#99000e"/><rect class="c" x="1716" y="473" fill="#990b00"/><rect class="c" x="1716" y="482" fill="#990800"/><rect class="c" x="1716" y="491" fill="#990600"/><rect class="c" x="1716" y="500" fill="#990400"/><rect class="c" x="1716" y="509" fill="#990200"/><rect class="c" x="1716" y="518" fill="#990001"/><rect class="c" x="1716" y="527" fill="#990002"/><rect class="c" x="1716" y="536" fill="#990003"/><rect class="c" x="1716" y="545" fill="#990004"/><rect class="c" x="1716" y="554" fill="#990005"/><rect class="c" x="1716" y="563" fill="#990007"/><rect class="c" x="1716" y="572" fill="#990008"/><rect class="c" x="1716" y="581" fill="#990009"/><rect class="c" x="1716" y="590" fill="#99000a"/><rect class="c" x="1716" y="599" fill="#99000c"/><rect class="c" x="1725" y="482" fill="#990700"/><rect class="c" x="1725" y="491" fill="#990500"/><rect class="c" x="1725" y="500" fill="#990300"/><rect class="c" x="1725" y="509" fill="#990100"/><rect class="c" x="1725" y="518" fill="#990000"/><rect class="c" x="1725" y="527" fill="#990001"/><rect class="c" x="1725" y="536" fill="#990002"/><rect class="c" x="1725" y="545" fill="#990003"/><rect class="c" x="1725" y="554" fill="#990005"/><rect class="c" x="1725" y="563" fill="#990006"/><rect class="c" x="1725" y="572" fill="#990007"/><rect class="c" x="1725" y="581" fill="#990008"/><rect class="c" x="1725" y="590" fill="#990009"/><rect class="c" x="1725" y="599" fill="#99000b"/><rect class="c" x="1734" y="491" fill="#990400"/><rect class="c" x="1734" y="500" fill="#990200"/><rect class="c" x="1734" y="509" fill="#990100"/><rect class="c" x="1734" y="518" fill="#990000"/><rect class="c" x="1734" y="527" fill="#990000"/><rect class="c" x="1734" y="536" fill="#990001"/><rect class="c" x="1734" y="545" fill="#990003"/><rect class="c" x="1734" y="554" fill="#990004"/><rect class="c" x="1734" y="563" fill="#990005"/><rect class="c" x="1734" y="572" fill="#990006"/><rect class="c" x="1734" y="581" fill="#990007"/><rect class="c" x="1734" y="590" fill="#990008"/><rect class="c" x="1734" y="599" fill="#99000a"/><rect class="c" x="1743" y="500" fill="#990200"/><rect class="c" x="1743" y="509" fill="#990000"/><rect class="c" x="1743" y="518" fill="#990000"/><rect class="c" x="1743" y="527" fill="#990000"/><rect class="c" x="1743" y="536" fill="#990001"/><rect class="c" x="1743" y="545" fill="#990002"/><rect class="c" x="1743" y="554" fill="#990003"/><rect class="c" x="1743" y="563" fill="#990004"/><rect class="c" x="1743" y="572" fill="#990005"/><rect class="c" x="1743" y="581" fill="#990006"/><rect class="c" x="1743" y="590" fill="#990007"/><rect class="c" x="1752" y="500" fill="#990100"/><rect class="c" x="1752" y="509" fill="#990000"/><rect class="c" x="1752" y="518" fill="#990000"/><rect class="c" x="1752" y="527" fill="#990000"/><rect class="c" x="1752" y="536" fill="#990000"/><rect class="c" x="1752" y="545" fill="#990001"/><rect class="c" x="1752" y="554" fill="#990002"/><rect class="c" x="1752" y="563" fill="#990003"/><rect class="c" x="1752" y="572" fill="#990004"/><rect class="c" x="1752" y="581" fill="#990005"/><rect class="c" x="1752" y="590" fill="#990007"/><rect class="c" x="1761" y="509" fill="#990000"/><rect class="c" x="1761" y="518" fill="#990000"/><rect class="c" x="1761" y="527" fill="#990000"/><rect class="c" x="1761" y="536" fill="#990000"/><rect class="c" x="1761" y="545" fill="#990001"/><rect class="c" x="1761" y="554" fill="#990001"/><rect class="c" x="1761" y="563" fill="#990003"/><rect class="c" x="1761" y="572" fill="#990004"/><rect class="c" x="1761" y="581" fill="#990005"/><rect class="c" x="1761" y="590" fill="#990006"/><rect class="c" x="1770" y="518" fill="#990000"/><rect class="c" x="1770" y="527" fill="#990000"/><rect class="c" x="1770" y="536" fill="#990000"/><rect class="c" x="1770" y="545" fill="#990000"/><rect class="c" x="1770" y="554" fill="#990001"/><rect class="c" x="1770" y="563" fill="#990002"/><rect class="c" x="1770" y="572" fill="#990003"/><rect class="c" x="1770" y="581" fill="#990004"/><rect class="c" x="1779" y="527" fill="#990000"/><rect class="c" x="1779" y="536" fill="#990000"/><rect class="c" x="1779" y="545" fill="#990000"/><rect class="c" x="1779" y="554" fill="#990000"/><rect class="c" x="1779" y="563" fill="#990001"/><rect class="c" x="1779" y="572" fill="#990002"/><rect class="c" x="1779" y="581" fill="#990003"/><rect class="c" x="1788" y="527" fill="#990000"/><rect class="c" x="1788" y="536" fill="#990000"/><rect class="c" x="1788" y="545" fill="#990000"/><rect class="c" x="1788" y="554" fill="#990000"/><rect class="c" x="1788" y="563" fill="#990001"/><rect class="c" x="1788" y="572" fill="#990002"/><rect class="c" x="1797" y="536" fill="#990000"/><rect class="c" x="1797" y="545" fill="#990000"/><rect class="c" x="1797" y="554" fill="#990000"/><rect class="c" x="1797" y="563" fill="#990000"/><rect class="c" x="1797" y="572" fill="#990001"/><rect class="c" x="1806" y="545" fill="#990000"/><rect class="c" x="1806" y="554" fill="#990000"/><rect class="c" x="1806" y="563" fill="#990000"/><rect class="c" x="1806" y="572" fill="#990000"/><rect class="c" x="1815" y="554" fill="#990000"/><rect class="c" x="1815" y="563" fill="#990000"/></g></g>
<g clip-path="url(#tr)"><g filter="url(#bl)"><rect class="c" x="1278" y="693" fill="#0006ff"/><rect class="c" x="1278" y="702" fill="#0001ff"/><rect class="c" x="1287" y="666" fill="#0018ff"/><rect class="c" x="1287" y="675" fill="#0011ff"/><rect class="c" x="1287" y="684" fill="#000aff"/><rect class="c" x="1287" y="693" fill="#0004ff"/><rect class="c" x="1287" y="702" fill="#0000ff"/><rect class="c" x="1287" y="711" fill="#0100ff"/><rect class="c" x="1296" y="639" fill="#002fff"/><rect class="c" x="1296" y="648" fill="#0026ff"/><rect class="c" x="1296" y="657" fill="#001eff"/><rect class="c" x="1296" y="666" fill="#0016ff"/><rect class="c" x="1296" y="675" fill="#000eff"/><rect class="c" x="1296" y="684" fill="#0008ff"/><rect class="c" x="1296" y="693" fill="#0302ff"/><rect class="c" x="1296" y="702" fill="#0600ff"/><rect class="c" x="1296" y="711" fill="#0900ff"/><rect class="c" x="1305" y="621" fill="#0041ff"/><rect class="c" x="1305" y="630" fill="#0036ff"/><rect class="c" x="1305" y="639" fill="#002dff"/><rect class="c" x="1305" y="648" fill="#0023ff"/><rect class="c" x="1305" y="657" fill="#001bff"/><rect class="c" x="1305" y="666" fill="#0213ff"/><rect class="c" x="1305" y="675" fill="#060cff"/><rect class="c" x="1305" y="684" fill="#0905ff"/><rect class="c" x="1305" y="693" fill="#0c00ff"/><rect class="c" x="1305" y="702" fill="#1000ff"/><rect class="c" x="1314" y="594" fill="#0063ff"/><rect class="c" x="1314" y="603" fill="#0056ff"/><rect class="c" x="1314" y="612" fill="#004aff"/><rect class="c" x="1314" y="621" fill="#003eff"/><rect class="c" x="1314" y="630" fill="#0034ff"/><rect class="c" x="1314" y="639" fill="#022aff"/><rect class="c" x="1314" y="648" fill="#0521ff"/><rect class="c" x="1314" y="657" fill="#0918ff"/><rect class="c" x="1314" y="666" fill="#0d10ff"/><rect class="c" x="1314" y="675" fill="#1009ff"/><rect class="c" x="1314" y="684" fill="#1403ff"/><rect class="c" x="1314" y="693" fill="#1700ff"/><rect class="c" x="1314" y="702" fill="#1a00ff"/><rect class="c" x="1323" y="567" fill="#008eff"/><rect class="c" x="1323" y="576" fill="#007dff"/><rect class="c" x="1323" y="585" fill="#006eff"/><rect class="c" x="1323" y="594" fill="#0060ff"/><rect class="c" x="1323" y="603" fill="#0053ff"/><rect class="c" x="1323" y="612" fill="#0147ff"/><rect class="c" x="1323" y="621" fill="#053bff"/><rect class="c" x="1323" y="630" fill="#0931ff"/><rect class="c" x="1323" y="639" fill="#0d27ff"/><rect class="c" x="1323" y="648" fill="#111eff"/><rect class="c" x="1323" y="657" fill="#1415ff"/><rect class="c" x="1323" y="666" fill="#180dff"/><rect class="c" x="1323" y="675" fill="#1c06ff"/><rect class="c" x="1323" y="684" fill="#1f00ff"/><rect class="c" x="1323" y="693" fill="#2200ff"/><rect class="c" x="1323" y="702" fill="#2600ff"/><rect class="c" x="1332" y="540" fill="#00c5ff"/><rect class="c" x="1332" y="549" fill="#00b0ff"/><rect class="c" x="1332" y="558" fill="#009dff"/><rect class="c" x="1332" y="567" fill="#008bff"/><rect class="c" x="1332" y="576" fill="#007bff"/><rect class="c" x="1332" y="585" fill="#006cff"/><rect class="c" x="1332" y="594" fill="#045dff"/><rect class="c" x="1332" y="603" fill="#0850ff"/><rect class="c" x="1332" y="612" fill="#0d44ff"/><rect class="c" x="1332" y="621" fill="#1139ff"/><rect class="c" x="1332" y="630" fill="#152eff"/><rect class="c" x="1332" y="639" fill="#1924ff"/><rect class="c" x="1332" y="648" fill="#1d1bff"/><rect class="c" x="1332" y="657" fill="#2112ff"/><rect class="c" x="1332" y="666" fill="#240bff"/><rect class="c" x="1332" y="675" fill="#2804ff"/><rect class="c" x="1332" y="684" fill="#2b00ff"/><rect class="c" x="1332" y="693" fill="#2e00ff"/><rect class="c" x="1341" y="522" fill="#00f4ff"/><rect class="c" x="1341" y="531" fill="#00dbff"/><rect class="c" x="1341" y="540" fill="#00c4ff"/><rect class="c" x="1341" y="549" fill="#00afff"/><rect class="c" x="1341" y="558" fill="#009bff"/><rect class="c" x="1341" y="567" fill="#0389ff"/><rect class="c" x="1341" y="576" fill="#0879ff"/><rect class="c" x="1341" y="585" fill="#0d69ff"/><rect class="c" x="1341" y="594" fill="#125bff"/><rect class="c" x="1341" y="603" fill="#164dff"/><rect class="c" x="1341" y="612" fill="#1b41ff"/><rect class="c" x="1341" y="621" fill="#1f36ff"/><rect class="c" x="1341" y="630" fill="#232bff"/><rect class="c" x="1341" y="639" fill="#2721ff"/><rect class="c" x="1341" y="648" fill="#2b18ff"/><rect class="c" x="1341" y="657" fill="#2e0fff"/><rect class="c" x="1341" y="666" fill="#3208ff"/><rect class="c" x="1341" y="675" fill="#3501ff"/><rect class="c" x="1341" y="684" fill="#3800ff"/><rect class="c" x="1341" y="693" fill="#3b00ff"/><rect class="c" x="1350" y="495" fill="#00ffc2"/><rect class="c" x="1350" y="504" fill="#00ffd8"/><rect class="c" x="1350" y="513" fill="#00fff0"/><rect class="c" x="1350" y="522" fill="#00f3ff"/><rect class="c" x="1350" y="531" fill="#00daff"/><rect class="c" x="1350" y="540" fill="#02c2ff"/><rect class="c" x="1350" y="549" fill="#08adff"/><rect class="c" x="1350" y="558" fill="#0d99ff"/><rect class="c" x="1350" y="567" fill="#1287ff"/><rect class="c" x="1350" y="576" fill="#1776ff"/><rect class="c" x="1350" y="585" fill="#1c66ff"/><rect class="c" x="1350" y="594" fill="#2158ff"/><rect class="c" x="1350" y="603" fill="#264bff"/><rect class="c" x="1350" y="612" fill="#2a3eff"/><rect class="c" x="1350" y="621" fill="#2e33ff"/><rect class="c" x="1350" y="630" fill="#3228ff"/><rect class="c" x="1350" y="639" fill="#351eff"/><rect class="c" x="1350" y="648" fill="#3915ff"/><rect class="c" x="1350" y="657" fill="#3c0dff"/><rect class="c" x="1350" y="666" fill="#4005ff"/><rect class="c" x="1350" y="675" fill="#4300ff"/><rect class="c" x="1350" y="684" fill="#4600ff"/><rect class="c" x="1359" y="468" fill="#00ff8c"/><rect class="c" x="1359" y="477" fill="#00ff9c"/><rect class="c" x="1359" y="486" fill="#00ffad"/><rect class="c" x="1359" y="495" fill="#00ffc1"/><rect class="c" x="1359" y="504" fill="#00ffd7"/><rect class="c" x="1359" y="513" fill="#01fff0"/><rect class="c" x="1359" y="522" fill="#07f3ff"/><rect class="c" x="1359" y="531" fill="#0dd9ff"/><rect class="c" x="1359" y="540" fill="#13c1ff"/><rect class="c" x="1359" y="549" fill="#19abff"/><rect class="c" x="1359" y="558" fill="#1f97ff"/><rect class="c" x="1359" y="567" fill="#2485ff"/><rect class="c" x="1359" y="576" fill="#2973ff"/><rect class="c" x="1359" y="585" fill="#2d64ff"/><rect class="c" x="1359" y="594" fill="#3255ff"/><rect class="c" x="1359" y="603" fill="#3648ff"/><rect class="c" x="1359" y="612" fill="#3a3bff"/><rect class="c" x="1359" y="621" fill="#3e2fff"/><rect class="c" x="1359" y="630" fill="#4125ff"/><rect class="c" x="1359" y="639" fill="#451bff"/><rect class="c" x="1359" y="648" fill="#4812ff"/><rect class="c" x="1359" y="657" fill="#4b0aff"/><rect class="c" x="1359" y="666" fill="#4e03ff"/><rect class="c" x="1359" y="675" fill="#5100ff"/><rect class="c" x="1359" y="684" fill="#5400ff"/><rect class="c" x="1368" y="441" fill="#00ff62"/><rect class="c" x="1368" y="450" fill="#00ff6e"/><rect class="c" x="1368" y="459" fill="#00ff7b"/><rect class="c" x="1368" y="468" fill="#00ff8a"/><rect class="c" x="1368" y="477" fill="#00ff9a"/><rect class="c" x="1368" y="486" fill="#00ffac"/><rect class="c" x="1368" y="495" fill="#05ffc0"/><rect class="c" x="1368" y="504" fill="#0bffd6"/><rect class="c" x="1368" y="513" fill="#13ffef"/><rect class="c" x="1368" y="522" fill="#1bf3ff"/><rect class="c" x="1368" y="531" fill="#21d8ff"/><rect class="c" x="1368" y="540" fill="#27c0ff"/><rect class="c" x="1368" y="549" fill="#2da9ff"/><rect class="c" x="1368" y="558" fill="#3295ff"/><rect class="c" x="1368" y="567" fill="#3782ff"/><rect class="c" x="1368" y="576" fill="#3b71ff"/><rect class="c" x="1368" y="585" fill="#4061ff"/><rect class="c" x="1368" y="594" fill="#4452ff"/><rect class="c" x="1368" y="603" fill="#4844ff"/><rect class="c" x="1368" y="612" fill="#4b38ff"/><rect class="c" x="1368" y="621" fill="#4f2cff"/><rect class="c" x="1368" y="630" fill="#5221ff"/><rect class="c" x="1368" y="639" fill="#5518ff"/><rect class="c" x="1368" y="648" fill="#580fff"/><rect class="c" x="1368" y="657" fill="#5b07ff"/><rect class="c" x="1368" y="666" fill="#5e00ff"/><rect class="c" x="1368" y="675" fill="#6000ff"/><rect class="c" x="1377" y="423" fill="#00ff4a"/><rect class="c" x="1377" y="432" fill="#00ff54"/><rect class="c" x="1377" y="441" fill="#00ff5f"/><rect class="c" x="1377" y="450" fill="#00ff6c"/><rect class="c" x="1377" y="459" fill="#00ff79"/><rect class="c" x="1377" y="468" fill="#03ff87"/><rect class="c" x="1377" y="477" fill="#08ff98"/><rect class="c" x="1377" y="486" fill="#0fffaa"/><rect class="c" x="1377" y="495" fill="#16ffbe"/><rect class="c" x="1377" y="504" fill="#1fffd5"/><rect class="c" x="1377" y="513" fill="#29ffef"/><rect class="c" x="1377" y="522" fill="#32f2ff"/><rect class="c" x="1377" y="531" fill="#38d7ff"/><rect class="c" x="1377" y="540" fill="#3dbeff"/><rect class="c" x="1377" y="549" fill="#42a7ff"/><rect class="c" x="1377" y="558" fill="#4793ff"/><rect class="c" x="1377" y="567" fill="#4b80ff"/><rect class="c" x="1377" y="576" fill="#506eff"/><rect class="c" x="1377" y="585" fill="#535eff"/><rect class="c" x="1377" y="594" fill="#574fff"/><rect class="c" x="1377" y="603" fill="#5b41ff"/><rect class="c" x="1377" y="612" fill="#5e35ff"/><rect class="c" x="1377" y="621" fill="#6129ff"/><rect class="c" x="1377" y="630" fill="#641eff"/><rect class="c" x="1377" y="639" fill="#6714ff"/><rect class="c" x="1377" y="648" fill="#690cff"/><rect class="c" x="1377" y="657" fill="#6c04ff"/><rect class="c" x="1377" y="666" fill="#6e00ff"/><rect class="c" x="1377" y="675" fill="#7000ff"/><rect class="c" x="1386" y="396" fill="#00ff2e"/><rect class="c" x="1386" y="405" fill="#00ff36"/><rect class="c" x="1386" y="414" fill="#00ff3f"/><rect class="c" x="1386" y="423" fill="#00ff48"/><rect class="c" x="1386" y="432" fill="#00ff52"/><rect class="c" x="1386" y="441" fill="#01ff5d"/><rect class="c" x="1386" y="450" fill="#06ff69"/><rect class="c" x="1386" y="459" fill="#0cff76"/><rect class="c" x="1386" y="468" fill="#12ff85"/><rect class="c" x="1386" y="477" fill="#19ff96"/><rect class="c" x="1386" y="486" fill="#21ffa8"/><rect class="c" x="1386" y="495" fill="#2bffbd"/><rect class="c" x="1386" y="504" fill="#35ffd4"/><rect class="c" x="1386" y="513" fill="#41ffef"/><rect class="c" x="1386" y="522" fill="#4cf2ff"/><rect class="c" x="1386" y="531" fill="#51d6ff"/><rect class="c" x="1386" y="540" fill="#55bcff"/><rect class="c" x="1386" y="549" fill="#5aa5ff"/><rect class="c" x="1386" y="558" fill="#5e90ff"/><rect class="c" x="1386" y="567" fill="#627dff"/><rect class="c" x="1386" y="576" fill="#656bff"/><rect class="c" x="1386" y="585" fill="#685bff"/><rect class="c" x="1386" y="594" fill="#6c4cff"/><rect class="c" x="1386" y="603" fill="#6f3eff"/><rect class="c" x="1386" y="612" fill="#7131ff"/><rect class="c" x="1386" y="621" fill="#7426ff"/><rect class="c" x="1386" y="630" fill="#761bff"/><rect class="c" x="1386" y="639" fill="#7911ff"/><rect class="c" x="1386" y="648" fill="#7b08ff"/><rect class="c" x="1386" y="657" fill="#7d01ff"/><rect class="c" x="1386" y="666" fill="#7f00ff"/><rect class="c" x="1386" y="675" fill="#8100ff"/><rect class="c" x="1395" y="369" fill="#00ff18"/><rect class="c" x="1395" y="378" fill="#00ff1e"/><rect class="c" x="1395" y="387" fill="#00ff25"/><rect class="c" x="1395" y="396" fill="#00ff2c"/><rect class="c" x="1395" y="405" fill="#00ff34"/><rect class="c" x="1395" y="414" fill="#00ff3c"/><rect class="c" x="1395" y="423" fill="#04ff45"/><rect class="c" x="1395" y="432" fill="#09ff4f"/><rect class="c" x="1395" y="441" fill="#0eff5a"/><rect class="c" x="1395" y="450" fill="#14ff66"/><rect class="c" x="1395" y="459" fill="#1bff74"/><rect class="c" x="1395" y="468" fill="#23ff83"/><rect class="c" x="1395" y="477" fill="#2cff94"/><rect class="c" x="1395" y="486" fill="#36ffa6"/><rect class="c" x="1395" y="495" fill="#41ffbb"/><rect class="c" x="1395" y="504" fill="#4effd3"/><rect class="c" x="1395" y="513" fill="#5cffee"/><rect class="c" x="1395" y="522" fill="#67f1ff"/><rect class="c" x="1395" y="531" fill="#6bd5ff"/><rect class="c" x="1395" y="540" fill="#6fbbff"/><rect class="c" x="1395" y="549" fill="#73a3ff"/><rect class="c" x="1395" y="558" fill="#768eff"/><rect class="c" x="1395" y="567" fill="#797aff"/><rect class="c" x="1395" y="576" fill="#7c68ff"/><rect class="c" x="1395" y="585" fill="#7f58ff"/><rect class="c" x="1395" y="594" fill="#8148ff"/><rect class="c" x="1395" y="603" fill="#843aff"/><rect class="c" x="1395" y="612" fill="#862eff"/><rect class="c" x="1395" y="621" fill="#8822ff"/><rect class="c" x="1395" y="630" fill="#8a17ff"/><rect class="c" x="1395" y="639" fill="#8c0eff"/><rect class="c" x="1395" y="648" fill="#8e05ff"/><rect class="c" x="1395" y="657" fill="#8f00ff"/><rect class="c" x="1395" y="666" fill="#9100ff"/><rect class="c" x="1404" y="342" fill="#00ff07"/><rect class="c" x="1404" y="351" fill="#00ff0b"/><rect class="c" x="1404" y="360" fill="#00ff10"/><rect class="c" x="1404" y="369" fill="#00ff16"/><rect class="c" x="1404" y="378" fill="#00ff1c"/><rect class="c" x="1404" y="387" fill="#00ff22"/><rect class="c" x="1404" y="396" fill="#03ff29"/><rect class="c" x="1404" y="405" fill="#07ff31"/><rect class="c" x="1404" y="414" fill="#0cff39"/><rect class="c" x="1404" y="423" fill="#11ff42"/><rect class="c" x="1404" y="432" fill="#17ff4c"/><rect class="c" x="1404" y="441" fill="#1dff58"/><rect class="c" x="1404" y="450" fill="#25ff64"/><rect class="c" x="1404" y="459" fill="#2dff71"/><rect class="c" x="1404" y="468" fill="#36ff80"/><rect class="c" x="1404" y="477" fill="#40ff91"/><rect class="c" x="1404" y="486" fill="#4cffa4"/><rect class="c" x="1404" y="495" fill="#59ffba"/><rect class="c" x="1404" y="504" fill="#68ffd2"/><rect class="c" x="1404" y="513" fill="#79ffee"/><rect class="c" x="1404" y="522" fill="#85f1ff"/><rect class="c" x="1404" y="531" fill="#88d4ff"/><rect class="c" x="1404" y="540" fill="#8bb9ff"/><rect class="c" x="1404" y="549" fill="#8ea1ff"/><rect class="c" x="1404" y="558" fill="#908bff"/><rect class="c" x="1404" y="567" fill="#9277ff"/><rect class="c" x="1404" y="576" fill="#9465ff"/><rect class="c" x="1404" y="585" fill="#9654ff"/><rect class="c" x="1404" y="594" fill="#9845ff"/><rect class="c" x="1404" y="603" fill="#9a37ff"/><rect class="c" x="1404" y="612" fill="#9b2aff"/><rect class="c" x="1404" y="621" fill="#9d1eff"/><rect class="c" x="1404" y="630" fill="#9e14ff"/><rect class="c" x="1404" y="639" fill="#a00aff"/><rect class="c" x="1404" y="648" fill="#a102ff"/><rect class="c" x="1404" y="657" fill="#a200ff"/><rect class="c" x="1404" y="666" fill="#a300ff"/><rect class="c" x="1413" y="324" fill="#00ff00"/><rect class="c" x="1413" y="333" fill="#00ff01"/><rect class="c" x="1413" y="342" fill="#00ff05"/><rect class="c" x="1413" y="351" fill="#00ff09"/><rect class="c" x="1413" y="360" fill="#00ff0e"/><rect class="c" x="1413" y="369" fill="#02ff13"/><rect class="c" x="1413" y="378" fill="#05ff19"/><rect class="c" x="1413" y="387" fill="#09ff1f"/><rect class="c" x="1413" y="396" fill="#0eff26"/><rect class="c" x="1413" y="405" fill="#13ff2e"/><rect class="c" x="1413" y="414" fill="#19ff36"/><rect class="c" x="1413" y="423" fill="#1fff3f"/><rect class="c" x="1413" y="432" fill="#26ff4a"/><rect class="c" x="1413" y="441" fill="#2eff55"/><rect class="c" x="1413" y="450" fill="#36ff61"/><rect class="c" x="1413" y="459" fill="#40ff6f"/><rect class="c" x="1413" y="468" fill="#4aff7e"/><rect class="c" x="1413" y="477" fill="#56ff8f"/><rect class="c" x="1413" y="486" fill="#64ffa2"/><rect class="c" x="1413" y="495" fill="#73ffb8"/><rect class="c" x="1413" y="504" fill="#84ffd1"/><rect class="c" x="1413" y="513" fill="#99ffed"/><rect class="c" x="1413" y="522" fill="#a6f0ff"/><rect class="c" x="1413" y="531" fill="#a7d2ff"/><rect class="c" x="1413" y="540" fill="#a9b7ff"/><rect class="c" x="1413" y="549" fill="#ab9fff"/><rect class="c" x="1413" y="558" fill="#ac88ff"/><rect class="c" x="1413" y="567" fill="#ad74ff"/><rect class="c" x="1413" y="576" fill="#ae62ff"/><rect class="c" x="1413" y="585" fill="#af51ff"/><rect class="c" x="1413" y="594" fill="#b041ff"/><rect class="c" x="1413" y="603" fill="#b133ff"/><rect class="c" x="1413" y="612" fill="#b226ff"/><rect class="c" x="1413" y="621" fill="#b31bff"/><rect class="c" x="1413" y="630" fill="#b410ff"/><rect class="c" x="1413" y="639" fill="#b507ff"/><rect class="c" x="1413" y="648" fill="#b500ff"/><rect class="c" x="1413" y="657" fill="#b600ff"/><rect class="c" x="1422" y="324" fill="#00ff00"/><rect class="c" x="1422" y="333" fill="#00ff00"/><rect class="c" x="1422" y="342" fill="#01ff03"/><rect class="c" x="1422" y="351" fill="#04ff07"/><rect class="c" x="1422" y="360" fill="#08ff0b"/><rect class="c" x="1422" y="369" fill="#0cff10"/><rect class="c" x="1422" y="378" fill="#10ff16"/><rect class="c" x="1422" y="387" fill="#15ff1c"/><rect class="c" x="1422" y="396" fill="#1bff23"/><rect class="c" x="1422" y="405" fill="#21ff2b"/><rect class="c" x="1422" y="414" fill="#27ff33"/><rect class="c" x="1422" y="423" fill="#2eff3c"/><rect class="c" x="1422" y="432" fill="#36ff47"/><rect class="c" x="1422" y="441" fill="#3fff52"/><rect class="c" x="1422" y="450" fill="#49ff5e"/><rect class="c" x="1422" y="459" fill="#54ff6c"/><rect class="c" x="1422" y="468" fill="#60ff7b"/><rect class="c" x="1422" y="477" fill="#6eff8d"/><rect class="c" x="1422" y="486" fill="#7dffa0"/><rect class="c" x="1422" y="495" fill="#8fffb6"/><rect class="c" x="1422" y="504" fill="#a3ffd0"/><rect class="c" x="1422" y="513" fill="#baffed"/><rect class="c" x="1422" y="522" fill="#c9f0ff"/><rect class="c" x="1422" y="531" fill="#c9d1ff"/><rect class="c" x="1422" y="540" fill="#c9b5ff"/><rect class="c" x="1422" y="549" fill="#c99cff"/><rect class="c" x="1422" y="558" fill="#ca86ff"/><rect class="c" x="1422" y="567" fill="#ca71ff"/><rect class="c" x="1422" y="576" fill="#ca5eff"/><rect class="c" x="1422" y="585" fill="#ca4dff"/><rect class="c" x="1422" y="594" fill="#ca3eff"/><rect class="c" x="1422" y="603" fill="#ca30ff"/><rect class="c" x="1422" y="612" fill="#ca23ff"/><rect class="c" x="1422" y="621" fill="#ca17ff"/><rect class="c" x="1422" y="630" fill="#cb0dff"/><rect class="c" x="1422" y="639" fill="#cb04ff"/><rect class="c" x="1422" y="648" fill="#cb00ff"/><rect class="c" x="1422" y="657" fill="#cb00ff"/><rect class="c" x="1431" y="324" fill="#03ff00"/><rect class="c" x="1431" y="333" fill="#06ff00"/><rect class="c" x="1431" y="342" fill="#0aff00"/><rect class="c" x="1431" y="351" fill="#0eff04"/><rect class="c" x="1431" y="360" fill="#12ff09"/><rect class="c" x="1431" y="369" fill="#17ff0e"/><rect class="c" x="1431" y="378" fill="#1cff13"/><rect class="c" x="1431" y="387" fill="#22ff1a"/><rect class="c" x="1431" y="396" fill="#28ff20"/><rect class="c" x="1431" y="405" fill="#2fff28"/><rect class="c" x="1431" y="414" fill="#37ff30"/><rect class="c" x="1431" y="423" fill="#3fff39"/><rect class="c" x="1431" y="432" fill="#48ff44"/><rect class="c" x="1431" y="441" fill="#52ff4f"/><rect class="c" x="1431" y="450" fill="#5dff5b"/><rect class="c" x="1431" y="459" fill="#6aff69"/><rect class="c" x="1431" y="468" fill="#78ff79"/><rect class="c" x="1431" y="477" fill="#87ff8a"/><rect class="c" x="1431" y="486" fill="#99ff9e"/><rect class="c" x="1431" y="495" fill="#adffb5"/><rect class="c" x="1431" y="504" fill="#c4ffcf"/><rect class="c" x="1431" y="513" fill="#dfffed"/><rect class="c" x="1431" y="522" fill="#efefff"/><rect class="c" x="1431" y="531" fill="#edd0ff"/><rect class="c" x="1431" y="540" fill="#ecb3ff"/><rect class="c" x="1431" y="549" fill="#ea9aff"/><rect class="c" x="1431" y="558" fill="#e983ff"/><rect class="c" x="1431" y="567" fill="#e86eff"/><rect class="c" x="1431" y="576" fill="#e75bff"/><rect class="c" x="1431" y="585" fill="#e649ff"/><rect class="c" x="1431" y="594" fill="#e53aff"/><rect class="c" x="1431" y="603" fill="#e42cff"/><rect class="c" x="1431" y="612" fill="#e41fff"/><rect class="c" x="1431" y="621" fill="#e313ff"/><rect class="c" x="1431" y="630" fill="#e209ff"/><rect class="c" x="1431" y="639" fill="#e201ff"/><rect class="c" x="1431" y="648" fill="#e100ff"/><rect class="c" x="1431" y="657" fill="#e000ff"/><rect class="c" x="1440" y="333" fill="#10ff00"/><rect class="c" x="1440" y="342" fill="#14ff00"/><rect class="c" x="1440" y="351" fill="#19ff02"/><rect class="c" x="1440" y="360" fill="#1eff06"/><rect class="c" x="1440" y="369" fill="#23ff0b"/><rect class="c" x="1440" y="378" fill="#29ff11"/><rect class="c" x="1440" y="387" fill="#30ff17"/><rect class="c" x="1440" y="396" fill="#37ff1d"/><rect class="c" x="1440" y="405" fill="#3fff25"/><rect class="c" x="1440" y="414" fill="#47ff2d"/><rect class="c" x="1440" y="423" fill="#50ff36"/><rect class="c" x="1440" y="432" fill="#5bff40"/><rect class="c" x="1440" y="441" fill="#66ff4c"/><rect class="c" x="1440" y="450" fill="#73ff58"/><rect class="c" x="1440" y="459" fill="#81ff66"/><rect class="c" x="1440" y="468" fill="#91ff76"/><rect class="c" x="1440" y="477" fill="#a2ff88"/><rect class="c" x="1440" y="486" fill="#b7ff9c"/><rect class="c" x="1440" y="495" fill="#ceffb3"/><rect class="c" x="1440" y="504" fill="#e8ffcd"/><rect class="c" x="1440" y="513" fill="#fff8e5"/><rect class="c" x="1440" y="522" fill="#ffdae9"/><rect class="c" x="1440" y="531" fill="#ffbfec"/><rect class="c" x="1440" y="540" fill="#ffa6ef"/><rect class="c" x="1440" y="549" fill="#ff8ff1"/><rect class="c" x="1440" y="558" fill="#ff7af4"/><rect class="c" x="1440" y="567" fill="#ff66f6"/><rect class="c" x="1440" y="576" fill="#ff55f8"/><rect class="c" x="1440" y="585" fill="#ff44fa"/><rect class="c" x="1440" y="594" fill="#ff35fc"/><rect class="c" x="1440" y="603" fill="#ff27fe"/><rect class="c" x="1440" y="612" fill="#fe1bff"/><rect class="c" x="1440" y="621" fill="#fd0fff"/><rect class="c" x="1440" y="630" fill="#fb05ff"/><rect class="c" x="1440" y="639" fill="#fa00ff"/><rect class="c" x="1440" y="648" fill="#f800ff"/><rect class="c" x="1449" y="333" fill="#1aff00"/><rect class="c" x="1449" y="342" fill="#1fff00"/><rect class="c" x="1449" y="351" fill="#24ff00"/><rect class="c" x="1449" y="360" fill="#2aff04"/><rect class="c" x="1449" y="369" fill="#30ff08"/><rect class="c" x="1449" y="378" fill="#37ff0e"/><rect class="c" x="1449" y="387" fill="#3eff14"/><rect class="c" x="1449" y="396" fill="#46ff1a"/><rect class="c" x="1449" y="405" fill="#4fff22"/><rect class="c" x="1449" y="414" fill="#59ff2a"/><rect class="c" x="1449" y="423" fill="#63ff33"/><rect class="c" x="1449" y="432" fill="#6fff3d"/><rect class="c" x="1449" y="441" fill="#7bff48"/><rect class="c" x="1449" y="450" fill="#8aff55"/><rect class="c" x="1449" y="459" fill="#99ff63"/><rect class="c" x="1449" y="468" fill="#abff73"/><rect class="c" x="1449" y="477" fill="#bfff85"/><rect class="c" x="1449" y="486" fill="#d6ff99"/><rect class="c" x="1449" y="495" fill="#f0ffb1"/><rect class="c" x="1449" y="504" fill="#fff1c0"/><rect class="c" x="1449" y="513" fill="#ffd5c5"/><rect class="c" x="1449" y="522" fill="#ffbcc9"/><rect class="c" x="1449" y="531" fill="#ffa4cd"/><rect class="c" x="1449" y="540" fill="#ff8fd0"/><rect class="c" x="1449" y="549" fill="#ff7bd4"/><rect class="c" x="1449" y="558" fill="#ff69d7"/><rect class="c" x="1449" y="567" fill="#ff58da"/><rect class="c" x="1449" y="576" fill="#ff48dd"/><rect class="c" x="1449" y="585" fill="#ff39df"/><rect class="c" x="1449" y="594" fill="#ff2ce2"/><rect class="c" x="1449" y="603" fill="#ff20e4"/><rect class="c" x="1449" y="612" fill="#ff15e6"/><rect class="c" x="1449" y="621" fill="#ff0ae8"/><rect class="c" x="1449" y="630" fill="#ff02eb"/><rect class="c" x="1449" y="639" fill="#ff00ec"/><rect class="c" x="1449" y="648" fill="#ff00ee"/><rect class="c" x="1458" y="342" fill="#2bff00"/><rect class="c" x="1458" y="351" fill="#31ff00"/><rect class="c" x="1458" y="360" fill="#37ff01"/><rect class="c" x="1458" y="369" fill="#3eff06"/><rect class="c" x="1458" y="378" fill="#46ff0b"/><rect class="c" x="1458" y="387" fill="#4eff11"/><rect class="c" x="1458" y="396" fill="#57ff17"/><rect class="c" x="1458" y="405" fill="#60ff1f"/><rect class="c" x="1458" y="414" fill="#6bff27"/><rect class="c" x="1458" y="423" fill="#77ff30"/><rect class="c" x="1458" y="432" fill="#84ff3a"/><rect class="c" x="1458" y="441" fill="#92ff45"/><rect class="c" x="1458" y="450" fill="#a2ff52"/><rect class="c" x="1458" y="459" fill="#b4ff60"/><rect class="c" x="1458" y="468" fill="#c8ff70"/><rect class="c" x="1458" y="477" fill="#deff82"/><rect class="c" x="1458" y="486" fill="#f8ff97"/><rect class="c" x="1458" y="495" fill="#ffeaa1"/><rect class="c" x="1458" y="504" fill="#ffd1a6"/><rect class="c" x="1458" y="513" fill="#ffb9ab"/><rect class="c" x="1458" y="522" fill="#ffa3af"/><rect class="c" x="1458" y="531" fill="#ff8fb3"/><rect class="c" x="1458" y="540" fill="#ff7cb7"/><rect class="c" x="1458" y="549" fill="#ff6abb"/><rect class="c" x="1458" y="558" fill="#ff5abf"/><rect class="c" x="1458" y="567" fill="#ff4bc2"/><rect class="c" x="1458" y="576" fill="#ff3dc5"/><rect class="c" x="1458" y="585" fill="#ff30c8"/><rect class="c" x="1458" y="594" fill="#ff24cb"/><rect class="c" x="1458" y="603" fill="#ff19ce"/><rect class="c" x="1458" y="612" fill="#ff0fd1"/><rect class="c" x="1458" y="621" fill="#ff06d3"/><rect class="c" x="1458" y="630" fill="#ff00d5"/><rect class="c" x="1458" y="639" fill="#ff00d8"/><rect class="c" x="1467" y="351" fill="#3eff00"/><rect class="c" x="1467" y="360" fill="#45ff00"/><rect class="c" x="1467" y="369" fill="#4dff03"/><rect class="c" x="1467" y="378" fill="#55ff08"/><rect class="c" x="1467" y="387" fill="#5eff0e"/><rect class="c" x="1467" y="396" fill="#68ff14"/><rect class="c" x="1467" y="405" fill="#73ff1b"/><rect class="c" x="1467" y="414" fill="#7eff23"/><rect class="c" x="1467" y="423" fill="#8bff2c"/><rect class="c" x="1467" y="432" fill="#9aff36"/><rect class="c" x="1467" y="441" fill="#aaff42"/><rect class="c" x="1467" y="450" fill="#bbff4e"/><rect class="c" x="1467" y="459" fill="#cfff5c"/><rect class="c" x="1467" y="468" fill="#e6ff6d"/><rect class="c" x="1467" y="477" fill="#ffff7f"/><rect class="c" x="1467" y="486" fill="#ffe585"/><rect class="c" x="1467" y="495" fill="#ffcd8b"/><rect class="c" x="1467" y="504" fill="#ffb790"/><rect class="c" x="1467" y="513" fill="#ffa295"/><rect class="c" x="1467" y="522" fill="#ff8f9a"/><rect class="c" x="1467" y="531" fill="#ff7d9e"/><rect class="c" x="1467" y="540" fill="#ff6ca2"/><rect class="c" x="1467" y="549" fill="#ff5da6"/><rect class="c" x="1467" y="558" fill="#ff4eaa"/><rect class="c" x="1467" y="567" fill="#ff41ae"/><rect class="c" x="1467" y="576" fill="#ff34b1"/><rect class="c" x="1467" y="585" fill="#ff28b5"/><rect class="c" x="1467" y="594" fill="#ff1eb8"/><rect class="c" x="1467" y="603" fill="#ff14bb"/><rect class="c" x="1467" y="612" fill="#ff0bbe"/><rect class="c" x="1467" y="621" fill="#ff03c0"/><rect class="c" x="1467" y="630" fill="#ff00c3"/><rect class="c" x="1467" y="639" fill="#ff00c6"/><rect class="c" x="1476" y="351" fill="#4cff00"/><rect class="c" x="1476" y="360" fill="#53ff00"/><rect class="c" x="1476" y="369" fill="#5cff01"/><rect class="c" x="1476" y="378" fill="#65ff05"/><rect class="c" x="1476" y="387" fill="#6fff0b"/><rect class="c" x="1476" y="396" fill="#7aff11"/><rect class="c" x="1476" y="405" fill="#86ff18"/><rect class="c" x="1476" y="414" fill="#93ff20"/><rect class="c" x="1476" y="423" fill="#a1ff29"/><rect class="c" x="1476" y="432" fill="#b1ff33"/><rect class="c" x="1476" y="441" fill="#c3ff3e"/><rect class="c" x="1476" y="450" fill="#d7ff4b"/><rect class="c" x="1476" y="459" fill="#edff59"/><rect class="c" x="1476" y="468" fill="#fff967"/><rect class="c" x="1476" y="477" fill="#ffe06d"/><rect class="c" x="1476" y="486" fill="#ffca73"/><rect class="c" x="1476" y="495" fill="#ffb579"/><rect class="c" x="1476" y="504" fill="#ffa17e"/><rect class="c" x="1476" y="513" fill="#ff8f83"/><rect class="c" x="1476" y="522" fill="#ff7e88"/><rect class="c" x="1476" y="531" fill="#ff6e8c"/><rect class="c" x="1476" y="540" fill="#ff5f91"/><rect class="c" x="1476" y="549" fill="#ff5195"/><rect class="c" x="1476" y="558" fill="#ff4499"/><rect class="c" x="1476" y="567" fill="#ff389d"/><rect class="c" x="1476" y="576" fill="#ff2ca0"/><rect class="c" x="1476" y="585" fill="#ff22a4"/><rect class="c" x="1476" y="594" fill="#ff18a7"/><rect class="c" x="1476" y="603" fill="#ff0faa"/><rect class="c" x="1476" y="612" fill="#ff07ad"/><rect class="c" x="1476" y="621" fill="#ff00b0"/><rect class="c" x="1476" y="630" fill="#ff00b3"/><rect class="c" x="1485" y="360" fill="#63ff00"/><rect class="c" x="1485" y="369" fill="#6cff00"/><rect class="c" x="1485" y="378" fill="#76ff02"/><rect class="c" x="1485" y="387" fill="#81ff07"/><rect class="c" x="1485" y="396" fill="#8dff0e"/><rect class="c" x="1485" y="405" fill="#9aff14"/><rect class="c" x="1485" y="414" fill="#a8ff1c"/><rect class="c" x="1485" y="423" fill="#b8ff25"/><rect class="c" x="1485" y="432" fill="#caff2f"/><rect class="c" x="1485" y="441" fill="#ddff3a"/><rect class="c" x="1485" y="450" fill="#f3ff47"/><rect class="c" x="1485" y="459" fill="#fff351"/><rect class="c" x="1485" y="468" fill="#ffdc58"/><rect class="c" x="1485" y="477" fill="#ffc75e"/><rect class="c" x="1485" y="486" fill="#ffb364"/><rect class="c" x="1485" y="495" fill="#ffa069"/><rect class="c" x="1485" y="504" fill="#ff8f6f"/><rect class="c" x="1485" y="513" fill="#ff7e74"/><rect class="c" x="1485" y="522" fill="#ff6f78"/><rect class="c" x="1485" y="531" fill="#ff617d"/><rect class="c" x="1485" y="540" fill="#ff5381"/><rect class="c" x="1485" y="549" fill="#ff4786"/><rect class="c" x="1485" y="558" fill="#ff3b8a"/><rect class="c" x="1485" y="567" fill="#ff308d"/><rect class="c" x="1485" y="576" fill="#ff2691"/><rect class="c" x="1485" y="585" fill="#ff1c95"/><rect class="c" x="1485" y="594" fill="#ff1398"/><rect class="c" x="1485" y="603" fill="#ff0b9b"/><rect class="c" x="1485" y="612" fill="#ff039e"/><rect class="c" x="1485" y="621" fill="#ff00a1"/><rect class="c" x="1485" y="630" fill="#ff00a4"/><rect class="c" x="1494" y="360" fill="#72ff00"/><rect class="c" x="1494" y="369" fill="#7dff00"/><rect class="c" x="1494" y="378" fill="#88ff00"/><rect class="c" x="1494" y="387" fill="#94ff04"/><rect class="c" x="1494" y="396" fill="#a1ff0a"/><rect class="c" x="1494" y="405" fill="#afff11"/><rect class="c" x="1494" y="414" fill="#bfff19"/><rect class="c" x="1494" y="423" fill="#d1ff21"/><rect class="c" x="1494" y="432" fill="#e4ff2b"/><rect class="c" x="1494" y="441" fill="#f9ff36"/><rect class="c" x="1494" y="450" fill="#ffee3f"/><rect class="c" x="1494" y="459" fill="#ffd845"/><rect class="c" x="1494" y="468" fill="#ffc44b"/><rect class="c" x="1494" y="477" fill="#ffb151"/><rect class="c" x="1494" y="486" fill="#ff9f57"/><rect class="c" x="1494" y="495" fill="#ff8f5c"/><rect class="c" x="1494" y="504" fill="#ff7f62"/><rect class="c" x="1494" y="513" fill="#ff7167"/><rect class="c" x="1494" y="522" fill="#ff636b"/><rect class="c" x="1494" y="531" fill="#ff5670"/><rect class="c" x="1494" y="540" fill="#ff4a74"/><rect class="c" x="1494" y="549" fill="#ff3e78"/><rect class="c" x="1494" y="558" fill="#ff337c"/><rect class="c" x="1494" y="567" fill="#ff2980"/><rect class="c" x="1494" y="576" fill="#ff2084"/><rect class="c" x="1494" y="585" fill="#ff1788"/><rect class="c" x="1494" y="594" fill="#ff0f8b"/><rect class="c" x="1494" y="603" fill="#ff078e"/><rect class="c" x="1494" y="612" fill="#ff0192"/><rect class="c" x="1494" y="621" fill="#ff0095"/><rect class="c" x="1494" y="630" fill="#ff0098"/><rect class="c" x="1503" y="369" fill="#8eff00"/><rect class="c" x="1503" y="378" fill="#9aff00"/><rect class="c" x="1503" y="387" fill="#a7ff01"/><rect class="c" x="1503" y="396" fill="#b6ff07"/><rect class="c" x="1503" y="405" fill="#c6ff0d"/><rect class="c" x="1503" y="414" fill="#d7ff15"/><rect class="c" x="1503" y="423" fill="#eaff1e"/><rect class="c" x="1503" y="432" fill="#ffff27"/><rect class="c" x="1503" y="441" fill="#ffe92e"/><rect class="c" x="1503" y="450" fill="#ffd535"/><rect class="c" x="1503" y="459" fill="#ffc13b"/><rect class="c" x="1503" y="468" fill="#ffb041"/><rect class="c" x="1503" y="477" fill="#ff9f47"/><rect class="c" x="1503" y="486" fill="#ff8f4c"/><rect class="c" x="1503" y="495" fill="#ff8051"/><rect class="c" x="1503" y="504" fill="#ff7256"/><rect class="c" x="1503" y="513" fill="#ff645b"/><rect class="c" x="1503" y="522" fill="#ff5860"/><rect class="c" x="1503" y="531" fill="#ff4c64"/><rect class="c" x="1503" y="540" fill="#ff4169"/><rect class="c" x="1503" y="549" fill="#ff366d"/><rect class="c" x="1503" y="558" fill="#ff2c71"/><rect class="c" x="1503" y="567" fill="#ff2375"/><rect class="c" x="1503" y="576" fill="#ff1a78"/><rect class="c" x="1503" y="585" fill="#ff127c"/><rect class="c" x="1503" y="594" fill="#ff0b7f"/><rect class="c" x="1503" y="603" fill="#ff0483"/><rect class="c" x="1503" y="612" fill="#ff0086"/><rect class="c" x="1503" y="621" fill="#ff0089"/><rect class="c" x="1512" y="378" fill="#aeff00"/><rect class="c" x="1512" y="387" fill="#bcff00"/><rect class="c" x="1512" y="396" fill="#ccff04"/><rect class="c" x="1512" y="405" fill="#ddff0a"/><rect class="c" x="1512" y="414" fill="#f0ff11"/><rect class="c" x="1512" y="423" fill="#fff919"/><rect class="c" x="1512" y="432" fill="#ffe520"/><rect class="c" x="1512" y="441" fill="#ffd126"/><rect class="c" x="1512" y="450" fill="#ffbf2c"/><rect class="c" x="1512" y="459" fill="#ffae32"/><rect class="c" x="1512" y="468" fill="#ff9e38"/><rect class="c" x="1512" y="477" fill="#ff8f3d"/><rect class="c" x="1512" y="486" fill="#ff8043"/><rect class="c" x="1512" y="495" fill="#ff7348"/><rect class="c" x="1512" y="504" fill="#ff664d"/><rect class="c" x="1512" y="513" fill="#ff5a51"/><rect class="c" x="1512" y="522" fill="#ff4e56"/><rect class="c" x="1512" y="531" fill="#ff445a"/><rect class="c" x="1512" y="540" fill="#ff395f"/><rect class="c" x="1512" y="549" fill="#ff3063"/><rect class="c" x="1512" y="558" fill="#ff2667"/><rect class="c" x="1512" y="567" fill="#ff1e6a"/><rect class="c" x="1512" y="576" fill="#ff166e"/><rect class="c" x="1512" y="585" fill="#ff0e72"/><rect class="c" x="1512" y="594" fill="#ff0875"/><rect class="c" x="1512" y="603" fill="#ff0278"/><rect class="c" x="1512" y="612" fill="#ff007c"/><rect class="c" x="1512" y="621" fill="#ff007f"/><rect class="c" x="1521" y="378" fill="#c2ff00"/><rect class="c" x="1521" y="387" fill="#d2ff00"/><rect class="c" x="1521" y="396" fill="#e3ff01"/><rect class="c" x="1521" y="405" fill="#f5ff06"/><rect class="c" x="1521" y="414" fill="#fff40d"/><rect class="c" x="1521" y="423" fill="#ffe113"/><rect class="c" x="1521" y="432" fill="#ffce19"/><rect class="c" x="1521" y="441" fill="#ffbd1f"/><rect class="c" x="1521" y="450" fill="#ffad25"/><rect class="c" x="1521" y="459" fill="#ff9d2b"/><rect class="c" x="1521" y="468" fill="#ff8f30"/><rect class="c" x="1521" y="477" fill="#ff8135"/><rect class="c" x="1521" y="486" fill="#ff743a"/><rect class="c" x="1521" y="495" fill="#ff673f"/><rect class="c" x="1521" y="504" fill="#ff5c44"/><rect class="c" x="1521" y="513" fill="#ff5149"/><rect class="c" x="1521" y="522" fill="#ff464d"/><rect class="c" x="1521" y="531" fill="#ff3c51"/><rect class="c" x="1521" y="540" fill="#ff3356"/><rect class="c" x="1521" y="549" fill="#ff2a5a"/><rect class="c" x="1521" y="558" fill="#ff215d"/><rect class="c" x="1521" y="567" fill="#ff1961"/><rect class="c" x="1521" y="576" fill="#ff1265"/><rect class="c" x="1521" y="585" fill="#ff0b68"/><rect class="c" x="1521" y="594" fill="#ff056c"/><rect class="c" x="1521" y="603" fill="#ff006f"/><rect class="c" x="1521" y="612" fill="#ff0072"/><rect class="c" x="1530" y="387" fill="#e8ff00"/><rect class="c" x="1530" y="396" fill="#fbff00"/><rect class="c" x="1530" y="405" fill="#fff003"/><rect class="c" x="1530" y="414" fill="#ffdd08"/><rect class="c" x="1530" y="423" fill="#ffcc0e"/><rect class="c" x="1530" y="432" fill="#ffbb14"/><rect class="c" x="1530" y="441" fill="#ffac19"/><rect class="c" x="1530" y="450" fill="#ff9d1f"/><rect class="c" x="1530" y="459" fill="#ff8f24"/><rect class="c" x="1530" y="468" fill="#ff8129"/><rect class="c" x="1530" y="477" fill="#ff752e"/><rect class="c" x="1530" y="486" fill="#ff6933"/><rect class="c" x="1530" y="495" fill="#ff5d38"/><rect class="c" x="1530" y="504" fill="#ff533d"/><rect class="c" x="1530" y="513" fill="#ff4841"/><rect class="c" x="1530" y="522" fill="#ff3f45"/><rect class="c" x="1530" y="531" fill="#ff3549"/><rect class="c" x="1530" y="540" fill="#ff2d4d"/><rect class="c" x="1530" y="549" fill="#ff2451"/><rect class="c" x="1530" y="558" fill="#ff1c55"/><rect class="c" x="1530" y="567" fill="#ff1559"/><rect class="c" x="1530" y="576" fill="#ff0e5c"/><rect class="c" x="1530" y="585" fill="#ff0860"/><rect class="c" x="1530" y="594" fill="#ff0263"/><rect class="c" x="1530" y="603" fill="#ff0067"/><rect class="c" x="1530" y="612" fill="#ff006a"/><rect class="c" x="1539" y="387" fill="#fffe00"/><rect class="c" x="1539" y="396" fill="#ffec00"/><rect class="c" x="1539" y="405" fill="#ffda00"/><rect class="c" x="1539" y="414" fill="#ffc904"/><rect class="c" x="1539" y="423" fill="#ffba0a"/><rect class="c" x="1539" y="432" fill="#ffab0f"/><rect class="c" x="1539" y="441" fill="#ff9c14"/><rect class="c" x="1539" y="450" fill="#ff8f19"/><rect class="c" x="1539" y="459" fill="#ff821e"/><rect class="c" x="1539" y="468" fill="#ff7623"/><rect class="c" x="1539" y="477" fill="#ff6a28"/><rect class="c" x="1539" y="486" fill="#ff5f2d"/><rect class="c" x="1539" y="495" fill="#ff5531"/><rect class="c" x="1539" y="504" fill="#ff4b36"/><rect class="c" x="1539" y="513" fill="#ff413a"/><rect class="c" x="1539" y="522" fill="#ff383e"/><rect class="c" x="1539" y="531" fill="#ff2f42"/><rect class="c" x="1539" y="540" fill="#ff2746"/><rect class="c" x="1539" y="549" fill="#ff204a"/><rect class="c" x="1539" y="558" fill="#ff184e"/><rect class="c" x="1539" y="567" fill="#ff1151"/><rect class="c" x="1539" y="576" fill="#ff0b55"/><rect class="c" x="1539" y="585" fill="#ff0558"/><rect class="c" x="1539" y="594" fill="#ff005c"/><rect class="c" x="1539" y="603" fill="#ff005f"/><rect class="c" x="1539" y="612" fill="#ff0062"/><rect class="c" x="1548" y="396" fill="#ffd700"/><rect class="c" x="1548" y="405" fill="#ffc700"/><rect class="c" x="1548" y="414" fill="#ffb801"/><rect class="c" x="1548" y="423" fill="#ffaa06"/><rect class="c" x="1548" y="432" fill="#ff9c0b"/><rect class="c" x="1548" y="441" fill="#ff8f10"/><rect class="c" x="1548" y="450" fill="#ff8215"/><rect class="c" x="1548" y="459" fill="#ff7719"/><rect class="c" x="1548" y="468" fill="#ff6b1e"/><rect class="c" x="1548" y="477" fill="#ff6123"/><rect class="c" x="1548" y="486" fill="#ff5627"/><rect class="c" x="1548" y="495" fill="#ff4d2c"/><rect class="c" x="1548" y="504" fill="#ff4330"/><rect class="c" x="1548" y="513" fill="#ff3a34"/><rect class="c" x="1548" y="522" fill="#ff3238"/><rect class="c" x="1548" y="531" fill="#ff2a3c"/><rect class="c" x="1548" y="540" fill="#ff2240"/><rect class="c" x="1548" y="549" fill="#ff1b43"/><rect class="c" x="1548" y="558" fill="#ff1447"/><rect class="c" x="1548" y="567" fill="#ff0e4b"/><rect class="c" x="1548" y="576" fill="#ff084e"/><rect class="c" x="1548" y="585" fill="#ff0351"/><rect class="c" x="1548" y="594" fill="#ff0055"/><rect class="c" x="1548" y="603" fill="#ff0058"/><rect class="c" x="1557" y="405" fill="#ffb600"/><rect class="c" x="1557" y="414" fill="#ffa900"/><rect class="c" x="1557" y="423" fill="#ff9b03"/><rect class="c" x="1557" y="432" fill="#ff8f07"/><rect class="c" x="1557" y="441" fill="#ff830c"/><rect class="c" x="1557" y="450" fill="#ff7710"/><rect class="c" x="1557" y="459" fill="#ff6c15"/><rect class="c" x="1557" y="468" fill="#ff6219"/><rect class="c" x="1557" y="477" fill="#ff581e"/><rect class="c" x="1557" y="486" fill="#ff4f22"/><rect class="c" x="1557" y="495" fill="#ff4526"/><rect class="c" x="1557" y="504" fill="#ff3d2a"/><rect class="c" x="1557" y="513" fill="#ff352e"/><rect class="c" x="1557" y="522" fill="#ff2d32"/><rect class="c" x="1557" y="531" fill="#ff2536"/><rect class="c" x="1557" y="540" fill="#ff1e3a"/><rect class="c" x="1557" y="549" fill="#ff173d"/><rect class="c" x="1557" y="558" fill="#ff1141"/><rect class="c" x="1557" y="567" fill="#ff0b44"/><rect class="c" x="1557" y="576" fill="#ff0648"/><rect class="c" x="1557" y="585" fill="#ff014b"/><rect class="c" x="1557" y="594" fill="#ff004e"/><rect class="c" x="1557" y="603" fill="#ff0051"/><rect class="c" x="1566" y="405" fill="#ffa800"/><rect class="c" x="1566" y="414" fill="#ff9b00"/><rect class="c" x="1566" y="423" fill="#ff8f00"/><rect class="c" x="1566" y="432" fill="#ff8304"/><rect class="c" x="1566" y="441" fill="#ff7809"/><rect class="c" x="1566" y="450" fill="#ff6d0d"/><rect class="c" x="1566" y="459" fill="#ff6311"/><rect class="c" x="1566" y="468" fill="#ff5a15"/><rect class="c" x="1566" y="477" fill="#ff501a"/><rect class="c" x="1566" y="486" fill="#ff471e"/><rect class="c" x="1566" y="495" fill="#ff3f22"/><rect class="c" x="1566" y="504" fill="#ff3726"/><rect class="c" x="1566" y="513" fill="#ff2f29"/><rect class="c" x="1566" y="522" fill="#ff282d"/><rect class="c" x="1566" y="531" fill="#ff2131"/><rect class="c" x="1566" y="540" fill="#ff1a35"/><rect class="c" x="1566" y="549" fill="#ff1438"/><rect class="c" x="1566" y="558" fill="#ff0e3b"/><rect class="c" x="1566" y="567" fill="#ff083f"/><rect class="c" x="1566" y="576" fill="#ff0342"/><rect class="c" x="1566" y="585" fill="#ff0045"/><rect class="c" x="1566" y="594" fill="#ff0048"/><rect class="c" x="1575" y="414" fill="#ff8f00"/><rect class="c" x="1575" y="423" fill="#ff8400"/><rect class="c" x="1575" y="432" fill="#ff7902"/><rect class="c" x="1575" y="441" fill="#ff6e06"/><rect class="c" x="1575" y="450" fill="#ff650a"/><rect class="c" x="1575" y="459" fill="#ff5b0e"/><rect class="c" x="1575" y="468" fill="#ff5212"/><rect class="c" x="1575" y="477" fill="#ff4916"/><rect class="c" x="1575" y="486" fill="#ff411a"/><rect class="c" x="1575" y="495" fill="#ff391d"/><rect class="c" x="1575" y="504" fill="#ff3221"/><rect class="c" x="1575" y="513" fill="#ff2a25"/><rect class="c" x="1575" y="522" fill="#ff2329"/><rect class="c" x="1575" y="531" fill="#ff1d2c"/><rect class="c" x="1575" y="540" fill="#ff1730"/><rect class="c" x="1575" y="549" fill="#ff1133"/><rect class="c" x="1575" y="558" fill="#ff0b36"/><rect class="c" x="1575" y="567" fill="#ff063a"/><rect class="c" x="1575" y="576" fill="#ff013d"/><rect class="c" x="1575" y="585" fill="#ff0040"/><rect class="c" x="1575" y="594" fill="#ff0043"/><rect class="c" x="1584" y="423" fill="#ff7900"/><rect class="c" x="1584" y="432" fill="#ff6f00"/><rect class="c" x="1584" y="441" fill="#ff6603"/><rect class="c" x="1584" y="450" fill="#ff5d07"/><rect class="c" x="1584" y="459" fill="#ff540b"/><rect class="c" x="1584" y="468" fill="#ff4b0e"/><rect class="c" x="1584" y="477" fill="#ff4312"/><rect class="c" x="1584" y="486" fill="#ff3b16"/><rect class="c" x="1584" y="495" fill="#ff341a"/><rect class="c" x="1584" y="504" fill="#ff2d1d"/><rect class="c" x="1584" y="513" fill="#ff2621"/><rect class="c" x="1584" y="522" fill="#ff1f24"/><rect class="c" x="1584" y="531" fill="#ff1928"/><rect class="c" x="1584" y="540" fill="#ff132b"/><rect class="c" x="1584" y="549" fill="#ff0e2f"/><rect class="c" x="1584" y="558" fill="#ff0932"/><rect class="c" x="1584" y="567" fill="#ff0435"/><rect class="c" x="1584" y="576" fill="#ff0038"/><rect class="c" x="1584" y="585" fill="#ff003b"/><rect class="c" x="1593" y="423" fill="#ff7000"/><rect class="c" x="1593" y="432" fill="#ff6700"/><rect class="c" x="1593" y="441" fill="#ff5e01"/><rect class="c" x="1593" y="450" fill="#ff5504"/><rect class="c" x="1593" y="459" fill="#ff4d08"/><rect class="c" x="1593" y="468" fill="#ff450b"/><rect class="c" x="1593" y="477" fill="#ff3d0f"/><rect class="c" x="1593" y="486" fill="#ff3613"/><rect class="c" x="1593" y="495" fill="#ff2f16"/><rect class="c" x="1593" y="504" fill="#ff281a"/><rect class="c" x="1593" y="513" fill="#ff221d"/><rect class="c" x="1593" y="522" fill="#ff1c20"/><rect class="c" x="1593" y="531" fill="#ff1624"/><rect class="c" x="1593" y="540" fill="#ff1027"/><rect class="c" x="1593" y="549" fill="#ff0b2a"/><rect class="c" x="1593" y="558" fill="#ff062e"/><rect class="c" x="1593" y="567" fill="#ff0231"/><rect class="c" x="1593" y="576" fill="#ff0034"/><rect class="c" x="1593" y="585" fill="#ff0037"/><rect class="c" x="1602" y="432" fill="#ff5f00"/><rect class="c" x="1602" y="441" fill="#ff5700"/><rect class="c" x="1602" y="450" fill="#ff4f02"/><rect class="c" x="1602" y="459" fill="#ff4705"/><rect class="c" x="1602" y="468" fill="#ff3f09"/><rect class="c" x="1602" y="477" fill="#ff380c"/><rect class="c" x="1602" y="486" fill="#ff3110"/><rect class="c" x="1602" y="495" fill="#ff2b13"/><rect class="c" x="1602" y="504" fill="#ff2416"/><rect class="c" x="1602" y="513" fill="#ff1e1a"/><rect class="c" x="1602" y="522" fill="#ff181d"/><rect class="c" x="1602" y="531" fill="#ff1320"/><rect class="c" x="1602" y="540" fill="#ff0e23"/><rect class="c" x="1602" y="549" fill="#ff0927"/><rect class="c" x="1602" y="558" fill="#ff042a"/><rect class="c" x="1602" y="567" fill="#ff002d"/><rect class="c" x="1602" y="576" fill="#ff0030"/><rect class="c" x="1602" y="585" fill="#ff0032"/><rect class="c" x="1611" y="432" fill="#ff5800"/><rect class="c" x="1611" y="441" fill="#ff5000"/><rect class="c" x="1611" y="450" fill="#ff4900"/><rect class="c" x="1611" y="459" fill="#ff4103"/><rect class="c" x="1611" y="468" fill="#ff3a06"/><rect class="c" x="1611" y="477" fill="#ff330a"/><rect class="c" x="1611" y="486" fill="#ff2d0d"/><rect class="c" x="1611" y="495" fill="#ff2710"/><rect class="c" x="1611" y="504" fill="#ff2113"/><rect class="c" x="1611" y="513" fill="#ff1b17"/><rect class="c" x="1611" y="522" fill="#ff151a"/><rect class="c" x="1611" y="531" fill="#ff101d"/><rect class="c" x="1611" y="540" fill="#ff0b20"/><rect class="c" x="1611" y="549" fill="#ff0723"/><rect class="c" x="1611" y="558" fill="#ff0326"/><rect class="c" x="1611" y="567" fill="#ff0029"/><rect class="c" x="1611" y="576" fill="#ff002c"/><rect class="c" x="1620" y="441" fill="#ff4a00"/><rect class="c" x="1620" y="450" fill="#ff4300"/><rect class="c" x="1620" y="459" fill="#ff3c01"/><rect class="c" x="1620" y="468" fill="#ff3504"/><rect class="c" x="1620" y="477" fill="#ff2f07"/><rect class="c" x="1620" y="486" fill="#ff290a"/><rect class="c" x="1620" y="495" fill="#ff230d"/><rect class="c" x="1620" y="504" fill="#ff1d11"/><rect class="c" x="1620" y="513" fill="#ff1814"/><rect class="c" x="1620" y="522" fill="#ff1317"/><rect class="c" x="1620" y="531" fill="#ff0e1a"/><rect class="c" x="1620" y="540" fill="#ff091d"/><rect class="c" x="1620" y="549" fill="#ff0520"/><rect class="c" x="1620" y="558" fill="#ff0123"/><rect class="c" x="1620" y="567" fill="#ff0025"/><rect class="c" x="1620" y="576" fill="#ff0028"/><rect class="c" x="1629" y="450" fill="#ff3e00"/><rect class="c" x="1629" y="459" fill="#ff3700"/><rect class="c" x="1629" y="468" fill="#ff3102"/><rect class="c" x="1629" y="477" fill="#ff2b05"/><rect class="c" x="1629" y="486" fill="#ff2508"/><rect class="c" x="1629" y="495" fill="#ff1f0b"/><rect class="c" x="1629" y="504" fill="#ff1a0e"/><rect class="c" x="1629" y="513" fill="#ff1511"/><rect class="c" x="1629" y="522" fill="#ff1014"/><rect class="c" x="1629" y="531" fill="#ff0b17"/><rect class="c" x="1629" y="540" fill="#ff071a"/><rect class="c" x="1629" y="549" fill="#ff031d"/><rect class="c" x="1629" y="558" fill="#ff001f"/><rect class="c" x="1629" y="567" fill="#ff0022"/><rect class="c" x="1638" y="450" fill="#ff3900"/><rect class="c" x="1638" y="459" fill="#ff3300"/><rect class="c" x="1638" y="468" fill="#ff2d01"/><rect class="c" x="1638" y="477" fill="#ff2703"/><rect class="c" x="1638" y="486" fill="#ff2206"/><rect class="c" x="1638" y="495" fill="#ff1c09"/><rect class="c" x="1638" y="504" fill="#ff170c"/><rect class="c" x="1638" y="513" fill="#ff120f"/><rect class="c" x="1638" y="522" fill="#ff0e11"/><rect class="c" x="1638" y="531" fill="#ff0914"/><rect class="c" x="1638" y="540" fill="#ff0517"/><rect class="c" x="1638" y="549" fill="#ff011a"/><rect class="c" x="1638" y="558" fill="#ff001d"/><rect class="c" x="1638" y="567" fill="#ff001f"/><rect class="c" x="1647" y="459" fill="#ff2f00"/><rect class="c" x="1647" y="468" fill="#ff2900"/><rect class="c" x="1647" y="477" fill="#ff2402"/><rect class="c" x="1647" y="486" fill="#ff1e04"/><rect class="c" x="1647" y="495" fill="#ff1907"/><rect class="c" x="1647" y="504" fill="#ff140a"/><rect class="c" x="1647" y="513" fill="#ff100c"/><rect class="c" x="1647" y="522" fill="#ff0b0f"/><rect class="c" x="1647" y="531" fill="#ff0712"/><rect class="c" x="1647" y="540" fill="#ff0314"/><rect class="c" x="1647" y="549" fill="#ff0017"/><rect class="c" x="1647" y="558" fill="#ff001a"/><rect class="c" x="1656" y="459" fill="#ff2b00"/><rect class="c" x="1656" y="468" fill="#ff2600"/><rect class="c" x="1656" y="477" fill="#ff2000"/><rect class="c" x="1656" y="486" fill="#ff1b02"/><rect class="c" x="1656" y="495" fill="#ff1705"/><rect class="c" x="1656" y="504" fill="#ff1208"/><rect class="c" x="1656" y="513" fill="#ff0e0a"/><rect class="c" x="1656" y="522" fill="#ff090d"/><rect class="c" x="1656" y="531" fill="#ff050f"/><rect class="c" x="1656" y="540" fill="#ff0212"/><rect class="c" x="1656" y="549" fill="#ff0015"/><rect class="c" x="1656" y="558" fill="#ff0017"/><rect class="c" x="1665" y="468" fill="#ff2200"/><rect class="c" x="1665" y="477" fill="#ff1d00"/><rect class="c" x="1665" y="486" fill="#ff1901"/><rect class="c" x="1665" y="495" fill="#ff1403"/><rect class="c" x="1665" y="504" fill="#ff1006"/><rect class="c" x="1665" y="513" fill="#ff0b08"/><rect class="c" x="1665" y="522" fill="#ff070b"/><rect class="c" x="1665" y="531" fill="#ff040d"/><rect class="c" x="1665" y="540" fill="#ff0110"/><rect class="c" x="1665" y="549" fill="#ff0012"/><rect class="c" x="1665" y="558" fill="#ff0015"/><rect class="c" x="1674" y="477" fill="#ff1b00"/><rect class="c" x="1674" y="486" fill="#ff1600"/><rect class="c" x="1674" y="495" fill="#ff1202"/><rect class="c" x="1674" y="504" fill="#ff0d04"/><rect class="c" x="1674" y="513" fill="#ff0906"/><rect class="c" x="1674" y="522" fill="#ff0609"/><rect class="c" x="1674" y="531" fill="#ff020b"/><rect class="c" x="1674" y="540" fill="#ff000e"/><rect class="c" x="1674" y="549" fill="#ff0010"/><rect class="c" x="1683" y="477" fill="#ff1800"/><rect class="c" x="1683" y="486" fill="#ff1400"/><rect class="c" x="1683" y="495" fill="#ff0f00"/><rect class="c" x="1683" y="504" fill="#ff0b03"/><rect class="c" x="1683" y="513" fill="#ff0805"/><rect class="c" x="1683" y="522" fill="#ff0407"/><rect class="c" x="1683" y="531" fill="#ff010a"/><rect class="c" x="1683" y="540" fill="#ff000c"/><rect class="c" x="1683" y="549" fill="#ff000e"/><rect class="c" x="1692" y="486" fill="#ff1100"/><rect class="c" x="1692" y="495" fill="#ff0d00"/><rect class="c" x="1692" y="504" fill="#ff0a01"/><rect class="c" x="1692" y="513" fill="#ff0603"/><rect class="c" x="1692" y="522" fill="#ff0306"/><rect class="c" x="1692" y="531" fill="#ff0008"/><rect class="c" x="1692" y="540" fill="#ff000a"/><rect class="c" x="1701" y="486" fill="#ff0f00"/><rect class="c" x="1701" y="495" fill="#ff0b00"/><rect class="c" x="1701" y="504" fill="#ff0800"/><rect class="c" x="1701" y="513" fill="#ff0402"/><rect class="c" x="1701" y="522" fill="#ff0104"/><rect class="c" x="1701" y="531" fill="#ff0006"/><rect class="c" x="1701" y="540" fill="#ff0008"/><rect class="c" x="1710" y="495" fill="#ff0a00"/><rect class="c" x="1710" y="504" fill="#ff0600"/><rect class="c" x="1710" y="513" fill="#ff0301"/><rect class="c" x="1710" y="522" fill="#ff0003"/><rect class="c" x="1710" y="531" fill="#ff0005"/><rect class="c" x="1710" y="540" fill="#ff0007"/><rect class="c" x="1719" y="504" fill="#ff0500"/><rect class="c" x="1719" y="513" fill="#ff0200"/><rect class="c" x="1719" y="522" fill="#ff0001"/><rect class="c" x="1719" y="531" fill="#ff0003"/><rect class="c" x="1728" y="504" fill="#ff0300"/><rect class="c" x="1728" y="513" fill="#ff0100"/><rect class="c" x="1728" y="522" fill="#ff0000"/><rect class="c" x="1728" y="531" fill="#ff0002"/><rect class="c" x="1737" y="513" fill="#ff0000"/><rect class="c" x="1737" y="522" fill="#ff0000"/></g></g>
<line x1="1316.46" y1="739.674" x2="1807.41" y2="561.66" stroke="url(#ple)" stroke-width="1.1" opacity="0.75"/>
<rect x="1161" y="178" width="746.6" height="1.6" fill="#a8a8a8" />
<rect x="1161" y="178" width="1.6" height="566.6" fill="#a8a8a8" />
<rect x="1906" y="178" width="1.6" height="566.6" fill="#a8a8a8" />
<rect x="1161" y="743" width="746.6" height="1.6" fill="#a8a8a8" />
<rect x="1161.1" y="744" width="1.8" height="7.2" fill="#e0e0e0" />
<text x="1162" y="769.3" font-size="16" fill="#e4e4e4" text-anchor="middle" >0</text>
<rect x="1154.5" y="742.6" width="7" height="1.8" fill="#e0e0e0" />
<text x="1154.4" y="749.4" font-size="16" fill="#e4e4e4" text-anchor="end" >0</text>
<rect x="1249.65" y="744" width="1.8" height="7.2" fill="#e0e0e0" />
<text x="1250.55" y="769.3" font-size="16" fill="#e4e4e4" text-anchor="middle" >0,1</text>
<rect x="1154.5" y="675.4" width="7" height="1.8" fill="#e0e0e0" />
<text x="1154.4" y="682.2" font-size="16" fill="#e4e4e4" text-anchor="end" >0,1</text>
<rect x="1338.2" y="744" width="1.8" height="7.2" fill="#e0e0e0" />
<text x="1339.1" y="769.3" font-size="16" fill="#e4e4e4" text-anchor="middle" >0,2</text>
<rect x="1154.5" y="608.2" width="7" height="1.8" fill="#e0e0e0" />
<text x="1154.4" y="615" font-size="16" fill="#e4e4e4" text-anchor="end" >0,2</text>
<rect x="1426.75" y="744" width="1.8" height="7.2" fill="#e0e0e0" />
<text x="1427.65" y="769.3" font-size="16" fill="#e4e4e4" text-anchor="middle" >0,3</text>
<rect x="1154.5" y="541" width="7" height="1.8" fill="#e0e0e0" />
<text x="1154.4" y="547.8" font-size="16" fill="#e4e4e4" text-anchor="end" >0,3</text>
<rect x="1515.3" y="744" width="1.8" height="7.2" fill="#e0e0e0" />
<text x="1516.2" y="769.3" font-size="16" fill="#e4e4e4" text-anchor="middle" >0,4</text>
<rect x="1154.5" y="473.8" width="7" height="1.8" fill="#e0e0e0" />
<text x="1154.4" y="480.6" font-size="16" fill="#e4e4e4" text-anchor="end" >0,4</text>
<rect x="1603.85" y="744" width="1.8" height="7.2" fill="#e0e0e0" />
<text x="1604.75" y="769.3" font-size="16" fill="#e4e4e4" text-anchor="middle" >0,5</text>
<rect x="1154.5" y="406.6" width="7" height="1.8" fill="#e0e0e0" />
<text x="1154.4" y="413.4" font-size="16" fill="#e4e4e4" text-anchor="end" >0,5</text>
<rect x="1692.4" y="744" width="1.8" height="7.2" fill="#e0e0e0" />
<text x="1693.3" y="769.3" font-size="16" fill="#e4e4e4" text-anchor="middle" >0,6</text>
<rect x="1154.5" y="339.4" width="7" height="1.8" fill="#e0e0e0" />
<text x="1154.4" y="346.2" font-size="16" fill="#e4e4e4" text-anchor="end" >0,6</text>
<rect x="1780.95" y="744" width="1.8" height="7.2" fill="#e0e0e0" />
<text x="1781.85" y="769.3" font-size="16" fill="#e4e4e4" text-anchor="middle" >0,7</text>
<rect x="1154.5" y="272.2" width="7" height="1.8" fill="#e0e0e0" />
<text x="1154.4" y="279" font-size="16" fill="#e4e4e4" text-anchor="end" >0,7</text>
<rect x="1869.5" y="744" width="1.8" height="7.2" fill="#e0e0e0" />
<text x="1870.4" y="769.3" font-size="16" fill="#e4e4e4" text-anchor="middle" >0,8</text>
<rect x="1154.5" y="205" width="7" height="1.8" fill="#e0e0e0" />
<text x="1154.4" y="211.8" font-size="16" fill="#e4e4e4" text-anchor="end" >0,8</text>
<rect x="1428.4" y="476.8" width="15.1" height="15.1" fill="none" stroke="#fff" stroke-width="1.7"/>
<rect x="1427.0" y="441.1" width="15.1" height="15.1" fill="none" stroke="#fff" stroke-width="1.7"/>
<rect x="1424.0" y="406.6" width="15.1" height="15.1" fill="none" stroke="#fff" stroke-width="1.7"/>
<rect x="1422.5" y="370.2" width="15.1" height="15.1" fill="none" stroke="#fff" stroke-width="1.7"/>
<rect x="1419.0" y="331.6" width="15.1" height="15.1" fill="none" stroke="#fff" stroke-width="1.7"/>
<rect x="1450.2" y="489.2" width="15.1" height="15.1" fill="none" stroke="#fff" stroke-width="1.7"/>
<rect x="1469.2" y="464.9" width="15.1" height="15.1" fill="none" stroke="#fff" stroke-width="1.7"/>
<rect x="1488.0" y="442.8" width="15.1" height="15.1" fill="none" stroke="#fff" stroke-width="1.7"/>
<rect x="1505.4" y="420.6" width="15.1" height="15.1" fill="none" stroke="#fff" stroke-width="1.7"/>
<rect x="1525.2" y="395.8" width="15.1" height="15.1" fill="none" stroke="#fff" stroke-width="1.7"/>
<rect x="1415.9" y="514.6" width="15.1" height="15.1" fill="none" stroke="#fff" stroke-width="1.7"/>
<rect x="1399.7" y="514.6" width="15.1" height="15.1" fill="none" stroke="#fff" stroke-width="1.7"/>
<rect x="1384.2" y="514.6" width="15.1" height="15.1" fill="none" stroke="#fff" stroke-width="1.7"/>
<rect x="1369.0" y="514.6" width="15.1" height="15.1" fill="none" stroke="#fff" stroke-width="1.7"/>
<rect x="1353.0" y="514.6" width="15.1" height="15.1" fill="none" stroke="#fff" stroke-width="1.7"/>
<rect x="1401.9" y="550.8" width="15.1" height="15.1" fill="none" stroke="#fff" stroke-width="1.7"/>
<rect x="1373.5" y="586.7" width="15.1" height="15.1" fill="none" stroke="#fff" stroke-width="1.7"/>
<rect x="1345.7" y="621.0" width="15.1" height="15.1" fill="none" stroke="#fff" stroke-width="1.7"/>
<rect x="1316.8" y="655.4" width="15.1" height="15.1" fill="none" stroke="#fff" stroke-width="1.7"/>
<rect x="1286.0" y="694.9" width="15.1" height="15.1" fill="none" stroke="#fff" stroke-width="1.7"/>
<rect x="1432.9" y="538.1" width="15.1" height="15.1" fill="none" stroke="#fff" stroke-width="1.7"/>
<rect x="1435.0" y="563.2" width="15.1" height="15.1" fill="none" stroke="#fff" stroke-width="1.7"/>
<rect x="1435.0" y="583.8" width="15.1" height="15.1" fill="none" stroke="#fff" stroke-width="1.7"/>
<rect x="1436.0" y="607.5" width="15.1" height="15.1" fill="none" stroke="#fff" stroke-width="1.7"/>
<rect x="1437.7" y="632.2" width="15.1" height="15.1" fill="none" stroke="#fff" stroke-width="1.7"/>
<rect x="1487.0" y="513.2" width="15.1" height="15.1" fill="none" stroke="#fff" stroke-width="1.7"/>
<rect x="1546.8" y="513.2" width="15.1" height="15.1" fill="none" stroke="#fff" stroke-width="1.7"/>
<rect x="1599.2" y="513.2" width="15.1" height="15.1" fill="none" stroke="#fff" stroke-width="1.7"/>
<rect x="1656.0" y="513.2" width="15.1" height="15.1" fill="none" stroke="#fff" stroke-width="1.7"/>
<rect x="1720.0" y="513.2" width="15.1" height="15.1" fill="none" stroke="#fff" stroke-width="1.7"/>
<rect x="1431.4" y="514.7" width="15" height="15" fill="none" stroke="#111" stroke-width="2.0"/>
<circle cx="1435.5" cy="484.2" r="4.25" fill="#9ec09e" stroke="#0a0a0a" stroke-width="1.4"/>
<circle cx="1431.6" cy="445.7" r="4.25" fill="#84c084" stroke="#0a0a0a" stroke-width="1.4"/>
<circle cx="1426.5" cy="408.5" r="4.25" fill="#6ac06a" stroke="#0a0a0a" stroke-width="1.4"/>
<circle cx="1423.2" cy="370.6" r="4.25" fill="#50c050" stroke="#0a0a0a" stroke-width="1.4"/>
<circle cx="1417.2" cy="327.8" r="4.25" fill="#0ec00e" stroke="#0a0a0a" stroke-width="1.4"/>
<circle cx="1459.0" cy="498.8" r="4.25" fill="#c0c09e" stroke="#0a0a0a" stroke-width="1.4"/>
<circle cx="1480.0" cy="473.3" r="4.25" fill="#c0c084" stroke="#0a0a0a" stroke-width="1.4"/>
<circle cx="1498.3" cy="450.0" r="4.25" fill="#c0c06a" stroke="#0a0a0a" stroke-width="1.4"/>
<circle cx="1517.0" cy="428.4" r="4.25" fill="#c0c050" stroke="#0a0a0a" stroke-width="1.4"/>
<circle cx="1534.5" cy="401.7" r="4.25" fill="#c0c00e" stroke="#0a0a0a" stroke-width="1.4"/>
<circle cx="1423.0" cy="522.2" r="4.25" fill="#9ec0c0" stroke="#0a0a0a" stroke-width="1.4"/>
<circle cx="1406.3" cy="523.4" r="4.25" fill="#84c0c0" stroke="#0a0a0a" stroke-width="1.4"/>
<circle cx="1386.9" cy="525.4" r="4.25" fill="#6ac0c0" stroke="#0a0a0a" stroke-width="1.4"/>
<circle cx="1371.8" cy="527.2" r="4.25" fill="#50c0c0" stroke="#0a0a0a" stroke-width="1.4"/>
<circle cx="1354.3" cy="527.2" r="4.25" fill="#0ec0c0" stroke="#0a0a0a" stroke-width="1.4"/>
<circle cx="1412.0" cy="558.3" r="4.25" fill="#9e9ec8" stroke="#0a0a0a" stroke-width="1.4"/>
<circle cx="1382.8" cy="594.2" r="4.25" fill="#8484c8" stroke="#0a0a0a" stroke-width="1.4"/>
<circle cx="1354.2" cy="630.2" r="4.25" fill="#6a6ac8" stroke="#0a0a0a" stroke-width="1.4"/>
<circle cx="1325.2" cy="669.5" r="4.25" fill="#5050c8" stroke="#0a0a0a" stroke-width="1.4"/>
<circle cx="1291.4" cy="711.7" r="4.25" fill="#0e0ec8" stroke="#0a0a0a" stroke-width="1.4"/>
<circle cx="1443.9" cy="547.2" r="4.25" fill="#c09ec0" stroke="#0a0a0a" stroke-width="1.4"/>
<circle cx="1445.6" cy="572.5" r="4.25" fill="#c084c0" stroke="#0a0a0a" stroke-width="1.4"/>
<circle cx="1446.4" cy="592.5" r="4.25" fill="#c06ac0" stroke="#0a0a0a" stroke-width="1.4"/>
<circle cx="1449.7" cy="617.6" r="4.25" fill="#c050c0" stroke="#0a0a0a" stroke-width="1.4"/>
<circle cx="1451.4" cy="639.7" r="4.25" fill="#c00ec0" stroke="#0a0a0a" stroke-width="1.4"/>
<circle cx="1498.1" cy="523.0" r="4.25" fill="#c09e9e" stroke="#0a0a0a" stroke-width="1.4"/>
<circle cx="1563.8" cy="524.2" r="4.25" fill="#c08484" stroke="#0a0a0a" stroke-width="1.4"/>
<circle cx="1619.0" cy="520.6" r="4.25" fill="#c06a6a" stroke="#0a0a0a" stroke-width="1.4"/>
<circle cx="1675.0" cy="517.4" r="4.25" fill="#c05050" stroke="#0a0a0a" stroke-width="1.4"/>
<circle cx="1732.8" cy="515.0" r="4.25" fill="#c00e0e" stroke="#0a0a0a" stroke-width="1.4"/>
<circle cx="1440.4" cy="522.3" r="4.2" fill="#ffffff" stroke="#0a0a0a" stroke-width="1.4"/>
<rect x="1644.4" y="182.8" width="260.4" height="218.7" fill="#2c2c2c" />
<rect x="1647.4" y="185.4" width="253.2" height="213.6" fill="#8c8c8c" />
<rect x="1649" y="187" width="250.2" height="210.4" fill="url(#in1)" />
<rect x="1649" y="187" width="250.2" height="210.4" fill="url(#in2)" mask="url(#inmask)"/>
<rect x="1764.4" y="283.2" width="15.8" height="15.8" fill="none" stroke="#fff" stroke-width="1.8"/>
<circle cx="1792.4" cy="303.8" r="4.7" fill="#b48c90" stroke="#0a0a0a" stroke-width="1.4"/>
<text x="17.3" y="851.7" font-size="33" fill="#f4f4f4" textLength="252.5" lengthAdjust="spacingAndGlyphs" >Current Reading</text>
<text x="17.6" y="900.8" font-size="27.5" fill="#f2f2f2" textLength="118" lengthAdjust="spacingAndGlyphs" >x: 0,3809</text>
<text x="17.6" y="947.2" font-size="27.5" fill="#f2f2f2" textLength="118" lengthAdjust="spacingAndGlyphs" >y: 0,3263</text>
<text x="17.6" y="995.8" font-size="27.5" fill="#f2f2f2" textLength="110.2" lengthAdjust="spacingAndGlyphs" >fL: 42,57</text>
<text x="17.6" y="1042" font-size="27.5" fill="#f2f2f2" textLength="182.6" lengthAdjust="spacingAndGlyphs" >cd/m²: 145,85</text>
<text x="537.6" y="823.2" font-size="16" fill="#e4e4e4" text-anchor="middle" textLength="95" lengthAdjust="spacingAndGlyphs" >RGB Balance</text>
<rect x="411" y="830.5" width="287.5" height="207" fill="#242424" />
<rect x="411" y="881.4" width="287.5" height="1.8" fill="#9a9a9a" />
<rect x="411" y="933" width="287.5" height="1.8" fill="#9a9a9a" />
<rect x="411" y="985.1" width="287.5" height="1.8" fill="#9a9a9a" />
<rect x="410.2" y="829.2" width="289" height="3.2" fill="#a8a8a8" />
<rect x="410.2" y="829.2" width="1.7" height="215.5" fill="#a8a8a8" />
<rect x="697.6" y="829.2" width="1.7" height="215.5" fill="#a8a8a8" />
<rect x="410.2" y="1036.5" width="289" height="1.8" fill="#a8a8a8" />
<rect x="404" y="829.7" width="7" height="1.8" fill="#dcdcdc" />
<text x="403" y="837.2" font-size="16" fill="#e4e4e4" text-anchor="end" >110</text>
<rect x="404" y="881.4" width="7" height="1.8" fill="#dcdcdc" />
<text x="403" y="888.9" font-size="16" fill="#e4e4e4" text-anchor="end" >105</text>
<rect x="404" y="933" width="7" height="1.8" fill="#dcdcdc" />
<text x="403" y="940.5" font-size="16" fill="#e4e4e4" text-anchor="end" >100</text>
<rect x="404" y="985.1" width="7" height="1.8" fill="#dcdcdc" />
<text x="403" y="992.6" font-size="16" fill="#e4e4e4" text-anchor="end" >95</text>
<rect x="404" y="1036.5" width="7" height="1.8" fill="#dcdcdc" />
<text x="403" y="1044" font-size="16" fill="#e4e4e4" text-anchor="end" >90</text>
<text x="555" y="1054.8" font-size="16" fill="#e4e4e4" text-anchor="middle" textLength="31.5" lengthAdjust="spacingAndGlyphs" >20%</text>
<rect x="439.4" y="866.3" width="77.2" height="171.1" fill="#000" />
<rect x="440.9" y="867.7" width="72.4" height="169.7" fill="url(#rbR)" />
<rect x="516.2" y="899.2" width="76.5" height="138.2" fill="#000" />
<rect x="517.7" y="900.6" width="71.7" height="136.8" fill="url(#rbG)" />
<rect x="592.6" y="890" width="75.5" height="147.4" fill="#000" />
<rect x="594.1" y="891.4" width="72.5" height="146" fill="url(#rbB)" />
<rect x="722" y="801.3" width="793.8" height="232.4" fill="#1c1c1c" />
<rect x="723.6" y="802.6" width="790.6" height="34.6" fill="url(#thd)" />
<rect x="723.6" y="837.2" width="790.6" height="32.4" fill="url(#trd)" />
<rect x="723.6" y="869.6" width="790.6" height="33" fill="url(#trl)" />
<rect x="723.6" y="902.6" width="790.6" height="32.8" fill="url(#trd)" />
<rect x="723.6" y="935.4" width="790.6" height="32.8" fill="url(#trl)" />
<rect x="723.6" y="968.2" width="790.6" height="32.6" fill="url(#trd)" />
<rect x="723.6" y="1000.8" width="790.6" height="31.4" fill="url(#trl)" />
<text x="985.6" y="827.6" font-size="19" fill="#f6f6f6" textLength="46.3" lengthAdjust="spacingAndGlyphs" >20%</text>
<text x="1107.4" y="827.6" font-size="19" fill="#f6f6f6" textLength="46.4" lengthAdjust="spacingAndGlyphs" >40%</text>
<text x="1222.5" y="827.6" font-size="19" fill="#f6f6f6" textLength="45.9" lengthAdjust="spacingAndGlyphs" >60%</text>
<text x="1329.7" y="827.6" font-size="19" fill="#f6f6f6" textLength="46.5" lengthAdjust="spacingAndGlyphs" >80%</text>
<text x="1431.3" y="827.6" font-size="19" fill="#f6f6f6" textLength="59.2" lengthAdjust="spacingAndGlyphs" >100%</text>
<text x="744.6" y="861.6" font-size="20.8" fill="#f6f6f6" textLength="98.6" lengthAdjust="spacingAndGlyphs" font-weight="bold" >x: CIE31</text>
<text x="954" y="861.6" font-size="20.6" fill="#f6f6f6" textLength="78.3" lengthAdjust="spacingAndGlyphs" >0,3809</text>
<text x="1076.6" y="861.6" font-size="20.6" fill="#f6f6f6" textLength="78.3" lengthAdjust="spacingAndGlyphs" >0,4551</text>
<text x="1198.9" y="861.6" font-size="20.6" fill="#f6f6f6" textLength="78.3" lengthAdjust="spacingAndGlyphs" >0,5174</text>
<text x="1306.5" y="861.6" font-size="20.6" fill="#f6f6f6" textLength="78.3" lengthAdjust="spacingAndGlyphs" >0,5807</text>
<text x="1414.2" y="861.6" font-size="20.6" fill="#f6f6f6" textLength="78.3" lengthAdjust="spacingAndGlyphs" >0,6460</text>
<text x="744.6" y="894.4" font-size="20.8" fill="#ececec" textLength="98.2" lengthAdjust="spacingAndGlyphs" font-weight="bold" >y: CIE31</text>
<text x="954" y="894.4" font-size="20.6" fill="#ececec" textLength="78.3" lengthAdjust="spacingAndGlyphs" >0,3263</text>
<text x="1076.6" y="894.4" font-size="20.6" fill="#ececec" textLength="78.3" lengthAdjust="spacingAndGlyphs" >0,3246</text>
<text x="1198.9" y="894.4" font-size="20.6" fill="#ececec" textLength="78.3" lengthAdjust="spacingAndGlyphs" >0,3299</text>
<text x="1306.5" y="894.4" font-size="20.6" fill="#ececec" textLength="78.3" lengthAdjust="spacingAndGlyphs" >0,3347</text>
<text x="1414.2" y="894.4" font-size="20.6" fill="#ececec" textLength="78.3" lengthAdjust="spacingAndGlyphs" >0,3382</text>
<text x="744.6" y="927" font-size="20.8" fill="#f6f6f6" textLength="15.9" lengthAdjust="spacingAndGlyphs" font-weight="bold" >Y</text>
<text x="955.6" y="927" font-size="20.6" fill="#f6f6f6" textLength="104.8" lengthAdjust="spacingAndGlyphs" >145,8530</text>
<text x="1078.2" y="927" font-size="20.6" fill="#f6f6f6" textLength="104.8" lengthAdjust="spacingAndGlyphs" >104,7297</text>
<text x="1198.9" y="927" font-size="20.6" fill="#f6f6f6" textLength="92.6" lengthAdjust="spacingAndGlyphs" >82,2224</text>
<text x="1306.5" y="927" font-size="20.6" fill="#f6f6f6" textLength="92.6" lengthAdjust="spacingAndGlyphs" >65,9580</text>
<text x="1414.2" y="927" font-size="20.6" fill="#f6f6f6" textLength="92.6" lengthAdjust="spacingAndGlyphs" >55,4442</text>
<text x="744.6" y="959.8" font-size="20.8" fill="#ececec" textLength="179.4" lengthAdjust="spacingAndGlyphs" font-weight="bold" >Target x:CIE31</text>
<text x="954" y="959.8" font-size="20.6" fill="#ececec" textLength="78.3" lengthAdjust="spacingAndGlyphs" >0,3769</text>
<text x="1076.6" y="959.8" font-size="20.6" fill="#ececec" textLength="78.3" lengthAdjust="spacingAndGlyphs" >0,4444</text>
<text x="1198.9" y="959.8" font-size="20.6" fill="#ececec" textLength="78.3" lengthAdjust="spacingAndGlyphs" >0,5037</text>
<text x="1306.5" y="959.8" font-size="20.6" fill="#ececec" textLength="78.3" lengthAdjust="spacingAndGlyphs" >0,5677</text>
<text x="1414.2" y="959.8" font-size="20.6" fill="#ececec" textLength="78.3" lengthAdjust="spacingAndGlyphs" >0,6400</text>
<text x="744.6" y="992.4" font-size="20.8" fill="#f6f6f6" textLength="179" lengthAdjust="spacingAndGlyphs" font-weight="bold" >Target y:CIE31</text>
<text x="954" y="992.4" font-size="20.6" fill="#f6f6f6" textLength="78.3" lengthAdjust="spacingAndGlyphs" >0,3292</text>
<text x="1076.6" y="992.4" font-size="20.6" fill="#f6f6f6" textLength="78.3" lengthAdjust="spacingAndGlyphs" >0,3294</text>
<text x="1198.9" y="992.4" font-size="20.6" fill="#f6f6f6" textLength="78.3" lengthAdjust="spacingAndGlyphs" >0,3296</text>
<text x="1306.5" y="992.4" font-size="20.6" fill="#f6f6f6" textLength="78.3" lengthAdjust="spacingAndGlyphs" >0,3298</text>
<text x="1414.2" y="992.4" font-size="20.6" fill="#f6f6f6" textLength="78.3" lengthAdjust="spacingAndGlyphs" >0,3300</text>
<text x="744.6" y="1025.2" font-size="20.8" fill="#ececec" textLength="104.4" lengthAdjust="spacingAndGlyphs" font-weight="bold" >Target Y</text>
<text x="955.6" y="1025.2" font-size="20.6" fill="#ececec" textLength="104.8" lengthAdjust="spacingAndGlyphs" >124,1349</text>
<text x="1076.6" y="1025.2" font-size="20.6" fill="#ececec" textLength="92.6" lengthAdjust="spacingAndGlyphs" >86,0486</text>
<text x="1198.9" y="1025.2" font-size="20.6" fill="#ececec" textLength="92.6" lengthAdjust="spacingAndGlyphs" >67,8030</text>
<text x="1306.5" y="1025.2" font-size="20.6" fill="#ececec" textLength="92.6" lengthAdjust="spacingAndGlyphs" >55,1881</text>
<text x="1414.2" y="1025.2" font-size="20.6" fill="#ececec" textLength="92.6" lengthAdjust="spacingAndGlyphs" >45,6083</text>
<rect x="1" y="1112.6" width="1917.6" height="53.4" fill="url(#barbg)" />
<rect x="2" y="1113" width="37" height="52" rx="3" fill="url(#bbtn)" stroke="#a0a0a0" stroke-width="0.6"/>
<circle cx="20.3" cy="1120.8" r="6" fill="#6a6a6a"/>
<path d="M17.2 1122.2L20.3 1118.6L23.4 1122.2Z" fill="#2e2e2e"/>
<rect x="5.9" y="1135" width="29.3" height="25.2" rx="2.2" fill="#ff0000" />
<rect x="44.8" y="1113" width="125.2" height="52" rx="3" fill="#2b2b2b" stroke="#1a1a1a" stroke-width="1.4"/>
<rect x="48.6" y="1117.8" width="117.6" height="29.8" rx="2.4" fill="#c08888" stroke="#00000040" stroke-width="0.8"/>
<text x="107.4" y="1159.7" font-size="9" fill="#cfcfcf" text-anchor="middle" >20%</text>
<rect x="171.85" y="1113" width="125.2" height="52" rx="3" fill="url(#bbtn)" stroke="#9c9c9c" stroke-width="0.6"/>
<rect x="175.65" y="1117.8" width="117.6" height="29.8" rx="2.4" fill="#c06464" stroke="#00000040" stroke-width="0.8"/>
<text x="234.45" y="1159.7" font-size="9" fill="#b4b4b4" text-anchor="middle" >40%</text>
<rect x="298.9" y="1113" width="125.2" height="52" rx="3" fill="url(#bbtn)" stroke="#9c9c9c" stroke-width="0.6"/>
<rect x="302.7" y="1117.8" width="117.6" height="29.8" rx="2.4" fill="#c04a4b" stroke="#00000040" stroke-width="0.8"/>
<text x="361.5" y="1159.7" font-size="9" fill="#b4b4b4" text-anchor="middle" >60%</text>
<rect x="425.95" y="1113" width="125.2" height="52" rx="3" fill="url(#bbtn)" stroke="#9c9c9c" stroke-width="0.6"/>
<rect x="429.75" y="1117.8" width="117.6" height="29.8" rx="2.4" fill="#c03031" stroke="#00000040" stroke-width="0.8"/>
<text x="488.55" y="1159.7" font-size="9" fill="#b4b4b4" text-anchor="middle" >80%</text>
<rect x="553" y="1113" width="125.2" height="52" rx="3" fill="url(#bbtn)" stroke="#9c9c9c" stroke-width="0.6"/>
<rect x="556.8" y="1117.8" width="117.6" height="29.8" rx="2.4" fill="#c00000" stroke="#00000040" stroke-width="0.8"/>
<text x="615.6" y="1159.7" font-size="9" fill="#b4b4b4" text-anchor="middle" >100%</text>
<rect x="1649" y="1113.4" width="39.6" height="15" rx="2.5" fill="url(#cbtn)" />
<rect x="1649" y="1128.6" width="39.6" height="37" fill="url(#cbtn2)" />
<line x1="1649" y1="1128.4" x2="1688.6" y2="1128.4" stroke="#4a4a4a" stroke-width="0.9" />
<circle cx="1668.6" cy="1120.6" r="5.6" fill="#7c7c7c"/>
<path d="M1665.6 1122L1668.6 1118.6L1671.6 1122Z" fill="#2e2e2e"/>
<rect x="1656.6" y="1134.2" width="24" height="24" rx="2.6" fill="#8a8a8a" stroke="#111" stroke-width="1.6"/>
<rect x="1663" y="1141" width="11.6" height="11.2" fill="#0a0a0a" />
<rect x="1690.5" y="1113.4" width="36.8" height="24.2" fill="url(#cbtn)" />
<circle cx="1708.9" cy="1125.6" r="8" fill="#828282"/>
<rect x="1705.7" y="1122.4" width="6.4" height="6.4" fill="#2c2c2c" />
<rect x="1728.3" y="1113.4" width="37.8" height="24.2" fill="url(#cbtn)" />
<circle cx="1747.2" cy="1125.6" r="8" fill="#828282"/>
<path d="M1744.6 1121.4V1129.8L1751.2 1125.6Z" fill="#2c2c2c"/>
<rect x="1767.1" y="1113.4" width="36" height="24.2" fill="url(#cbtn)" />
<circle cx="1785.1" cy="1125.6" r="8" fill="#828282"/>
<path d="M1782.5 1121.6H1780.5V1129.6H1782.5M1787.7 1121.6H1789.7V1129.6H1787.7" fill="none" stroke="#2c2c2c" stroke-width="1.3"/>
<line x1="1782.9" y1="1125.6" x2="1787.3" y2="1125.6" stroke="#2c2c2c" stroke-width="1.1" stroke-dasharray="1 0.8"/>
<rect x="1804.1" y="1113.4" width="36.4" height="24.2" fill="url(#cbtn)" />
<circle cx="1822.3" cy="1125.6" r="8" fill="#828282"/>
<text x="1822.3" y="1129.6" font-size="12" fill="#2c2c2c" text-anchor="middle" font-weight="bold" >∞</text>
<rect x="1841.5" y="1113.4" width="37" height="24.2" fill="url(#cbtn)" />
<circle cx="1860" cy="1125.6" r="8" fill="#828282"/>
<path d="M1856.2 1124.6A4 4 0 0 1 1863 1122.8M1863.8 1126.6A4 4 0 0 1 1857 1128.4" fill="none" stroke="#2c2c2c" stroke-width="1.7"/>
<path d="M1861.4 1120.8L1865 1121.4L1863.4 1124.8ZM1858.6 1130.4L1855 1129.8L1856.6 1126.4Z" fill="#2c2c2c"/>
<circle cx="1899" cy="1126.6" r="8.2" fill="#2a2a2a"/>
<rect x="1690.5" y="1139.4" width="112.6" height="25.4" rx="2.5" fill="url(#cbtn)" />
<rect x="1804.1" y="1139.4" width="113.4" height="25.4" rx="2.5" fill="url(#cbtn)" />
<circle cx="1715.6" cy="1151.6" r="8" fill="#848484"/>
<circle cx="1894.2" cy="1151.6" r="8" fill="#848484"/>
<path d="M1715.2 1148L1712 1151.6L1715.2 1155.2M1719.2 1148L1716 1151.6L1719.2 1155.2" fill="none" stroke="#2c2c2c" stroke-width="1.2"/>
<path d="M1890.6 1148L1893.8 1151.6L1890.6 1155.2M1894.6 1148L1897.8 1151.6L1894.6 1155.2" fill="none" stroke="#2c2c2c" stroke-width="1.2"/>
<text x="1738" y="1158" font-size="18" fill="#2c2c2c" textLength="41.7" lengthAdjust="spacingAndGlyphs" >Back</text>
<text x="1827.5" y="1158" font-size="18" fill="#2c2c2c" textLength="42.5" lengthAdjust="spacingAndGlyphs" >Next</text>
<rect x="0" y="26" width="1" height="1140" fill="#6e6e6e" />
<rect x="1918.6" y="0" width="1.4" height="1166" fill="#6e6e6e" />
<rect x="0" y="1165.2" width="1920" height="0.8" fill="#6e6e6e" />
</svg>
</body></html>
